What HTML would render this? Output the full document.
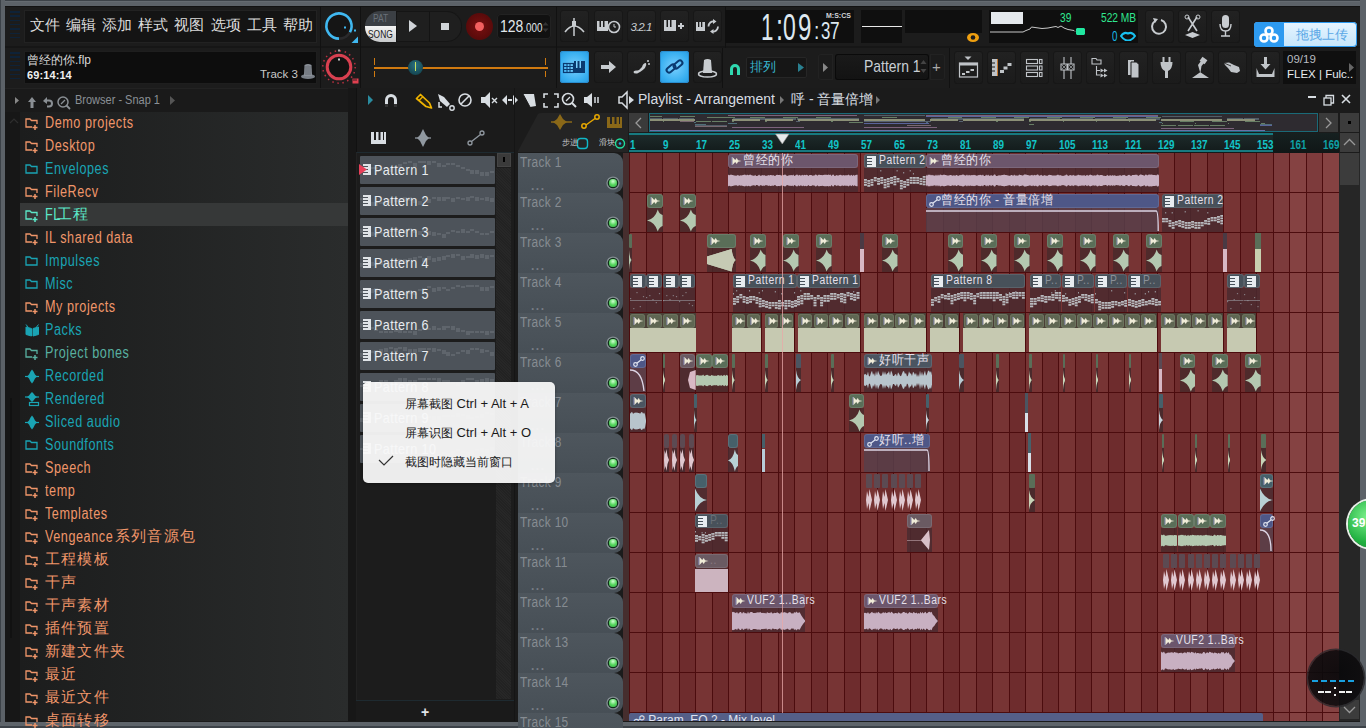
<!DOCTYPE html><html><head><meta charset="utf-8"><style>
*{box-sizing:border-box;margin:0;padding:0}
html,body{width:1366px;height:728px;overflow:hidden;background:#1b1b1b;font-family:'Liberation Sans',sans-serif;}
.ab{position:absolute}
.tx{position:absolute;white-space:nowrap;line-height:1}
.btn{position:absolute;background:linear-gradient(#232323,#1b1b1b);border-radius:3px;box-shadow:inset 0 0 0 1px #141414}
</style></head><body>

<div class="ab" style="left:5px;top:6px;width:1355px;height:82px;background:#1c1c1c"></div>
<div class="ab" style="left:0;top:0;width:1366px;height:6px;background:linear-gradient(#3c4248 0 1px,#646a70 1px 2px,#5c6268 2px)"></div>
<div class="ab" style="left:0;top:0;width:5px;height:728px;background:linear-gradient(90deg,#3c4248 0 1px,#5c6268 1px)"></div>
<div class="ab" style="left:1360px;top:0;width:6px;height:728px;background:#5c6268"></div>
<div class="ab" style="left:0;top:722px;width:1366px;height:6px;background:linear-gradient(#5e646a 0 4px,#3c4248 4px)"></div>
<div class="ab" style="left:5px;top:6px;width:1355px;height:1px;background:#121212"></div>
<div class="ab" style="left:5px;top:46px;width:1355px;height:2px;background:#161616"></div>
<div class="ab" style="left:10px;top:11.0px;width:10px;height:1.5px;background:#0e2238"></div>
<div class="ab" style="left:10px;top:15.3px;width:10px;height:1.5px;background:#0e2238"></div>
<div class="ab" style="left:10px;top:19.6px;width:10px;height:1.5px;background:#0e2238"></div>
<div class="ab" style="left:10px;top:23.9px;width:10px;height:1.5px;background:#0e2238"></div>
<div class="ab" style="left:10px;top:28.2px;width:10px;height:1.5px;background:#0e2238"></div>
<div class="ab" style="left:10px;top:32.5px;width:10px;height:1.5px;background:#0e2238"></div>
<div class="ab" style="left:10px;top:36.8px;width:10px;height:1.5px;background:#0e2238"></div>
<div class="ab" style="left:10px;top:52.0px;width:10px;height:1.5px;background:#0e2238"></div>
<div class="ab" style="left:10px;top:56.3px;width:10px;height:1.5px;background:#0e2238"></div>
<div class="ab" style="left:10px;top:60.6px;width:10px;height:1.5px;background:#0e2238"></div>
<div class="ab" style="left:10px;top:64.9px;width:10px;height:1.5px;background:#0e2238"></div>
<div class="ab" style="left:10px;top:69.2px;width:10px;height:1.5px;background:#0e2238"></div>
<div class="ab" style="left:10px;top:73.5px;width:10px;height:1.5px;background:#0e2238"></div>
<div class="ab" style="left:10px;top:77.8px;width:10px;height:1.5px;background:#0e2238"></div>
<div class="ab" style="left:24px;top:10px;width:293px;height:33px;background:#141414;border:1px solid #222"></div>
<div class="tx" style="left:30px;top:18px;font-size:14.5px;color:#dcdcdc">文件</div>
<div class="tx" style="left:66px;top:18px;font-size:14.5px;color:#dcdcdc">编辑</div>
<div class="tx" style="left:102px;top:18px;font-size:14.5px;color:#dcdcdc">添加</div>
<div class="tx" style="left:138px;top:18px;font-size:14.5px;color:#dcdcdc">样式</div>
<div class="tx" style="left:174px;top:18px;font-size:14.5px;color:#dcdcdc">视图</div>
<div class="tx" style="left:211px;top:18px;font-size:14.5px;color:#dcdcdc">选项</div>
<div class="tx" style="left:247px;top:18px;font-size:14.5px;color:#dcdcdc">工具</div>
<div class="tx" style="left:283px;top:18px;font-size:14.5px;color:#dcdcdc">帮助</div>
<div class="ab" style="left:24px;top:51px;width:293px;height:33px;background:#0d0d0d;border:1px solid #1e1e1e"></div>
<div class="tx" style="left:27px;top:54px;font-size:12px;color:#d8d8d8">曾经的你.flp</div>
<div class="tx" style="left:27px;top:70px;font-size:11px;font-weight:bold;color:#f0f0f0;letter-spacing:0.1px">69:14:14</div>
<div class="tx" style="left:260px;top:69px;font-size:11.5px;color:#c8c8c8">Track 3</div>
<svg class="ab" style="left:300px;top:63px" width="16" height="17"><ellipse cx="8" cy="13.5" rx="7" ry="2.5" fill="#7a8088"/><path d="M4 13 L4.5 2 Q8 0 11.5 2 L12 13Z" fill="#8a9098"/><path d="M6 3 V12 M8 2.5 V12 M10 3 V12" stroke="#5a6068" stroke-width="0.8"/></svg>
<div class="ab" style="left:320px;top:6px;width:1px;height:82px;background:#111"></div>
<div class="ab" style="left:360px;top:6px;width:1px;height:82px;background:#111"></div>
<div class="ab" style="left:556px;top:6px;width:1px;height:82px;background:#111"></div>
<svg class="ab" style="left:322px;top:9px" width="38" height="38" viewBox="0 0 38 38">
<circle cx="17" cy="17" r="12" fill="#151515"/>
<path d="M17 29.6 A12.6 12.6 0 1 1 27.9 23.3" fill="none" stroke="#40b8f0" stroke-width="2.6"/>
<path d="M27.9 23.3 A12.6 12.6 0 0 1 17 29.6" fill="none" stroke="#2a2a2c" stroke-width="2.6"/>
<rect x="22" y="17.5" width="2" height="2" fill="#40b8f0"/><rect x="32" y="20.5" width="2" height="2" fill="#40b8f0"/>
<path d="M36 27.5 L36 34 L29.5 34 Z" fill="#40b8f0"/></svg>
<svg class="ab" style="left:322px;top:49px" width="38" height="38" viewBox="0 0 38 38">
<circle cx="17" cy="18" r="16.2" fill="none" stroke="#b83040" stroke-width="1.5" stroke-dasharray="1.5 3.6"/>
<circle cx="17" cy="18" r="11.8" fill="#121212" stroke="#d84050" stroke-width="3"/>
<rect x="16" y="9.5" width="2" height="2" fill="#ccc"/><rect x="16" y="0.5" width="2" height="2" fill="#aaa"/>
<rect x="30.5" y="29.5" width="6" height="5" fill="#e04050"/><path d="M32 29.5 V32 M34 29.5 V32" stroke="#121212" stroke-width="0.8"/></svg>
<div class="ab" style="left:365px;top:11px;width:97px;height:31px;border-radius:15px;background:#1f1f1f;overflow:hidden;box-shadow:inset 0 0 0 1px #151515"><div class="ab" style="left:0;top:0;width:31px;height:15px;background:#3b3f44"></div><div class="ab" style="left:0;top:15px;width:31px;height:16px;background:linear-gradient(#f4f4f4,#c8cacc)"></div><div class="tx" style="left:8px;top:3px;font-size:10px;color:#6a7078;transform:scaleX(0.85);transform-origin:0 0">PAT</div><div class="tx" style="left:3px;top:18px;font-size:10.5px;color:#1a1a1a;transform:scaleX(0.8);transform-origin:0 0">SONG</div><div class="ab" style="left:31px;top:0;width:1px;height:31px;background:#141414"></div><div class="ab" style="left:64px;top:0;width:1px;height:31px;background:#141414"></div></div>
<svg class="ab" style="left:408px;top:19px" width="10" height="14"><path d="M1 1 L9 7 L1 13Z" fill="#d0d4d8"/></svg>
<div class="ab" style="left:441px;top:22.5px;width:7.5px;height:7.5px;background:#d0d4d8"></div>
<div class="ab" style="left:466px;top:13px;width:27px;height:27px;border-radius:50%;background:radial-gradient(#7a1010,#4a0808)"></div>
<div class="ab" style="left:475px;top:22px;width:9px;height:9px;border-radius:50%;background:#f26060"></div>
<div class="ab" style="left:497px;top:14px;width:54px;height:25px;border-radius:4px;background:#111;box-shadow:inset 0 0 0 1px #222"></div>
<div class="tx" style="left:500px;top:18px;font-size:17px;color:#e0e6ea;transform:scaleX(0.82);transform-origin:0 0">128<span style="font-size:12px">.000</span></div>
<svg class="ab" style="left:542px;top:21px" width="7" height="12"><path d="M0.5 4.5 L3.5 1 L6.5 4.5Z M0.5 7.5 L3.5 11 L6.5 7.5Z" fill="#333"/></svg>
<div class="ab" style="left:374px;top:67px;width:174px;height:2px;background:#d07a10"></div>
<div class="ab" style="left:374px;top:58px;width:1px;height:7px;background:#d07a10"></div><div class="ab" style="left:374px;top:71px;width:1px;height:6px;background:#d07a10"></div>
<div class="ab" style="left:545px;top:58px;width:1px;height:7px;background:#d07a10"></div><div class="ab" style="left:545px;top:71px;width:1px;height:6px;background:#d07a10"></div>
<div class="ab" style="left:408px;top:60px;width:15px;height:15px;border-radius:50%;background:radial-gradient(circle at 50% 35%,#2a7080,#0e3a44)"></div>
<div class="ab" style="left:415px;top:62px;width:1px;height:9px;background:#c8e060"></div>
<div class="ab" style="left:560px;top:10px;width:29px;height:32px;border-radius:3px;background:linear-gradient(#222,#1b1b1b);box-shadow:inset 0 0 0 1px #171717"><svg width="29" height="32"><path d="M5 22 Q14 10 24 22" fill="none" stroke="#c8ccd0" stroke-width="1.6"/><path d="M14 8 L14 26" stroke="#c8ccd0" stroke-width="1.5"/><rect x="12" y="11" width="4" height="5" fill="#c8ccd0"/></svg></div>
<div class="ab" style="left:594px;top:10px;width:29px;height:32px;border-radius:3px;background:linear-gradient(#222,#1b1b1b);box-shadow:inset 0 0 0 1px #171717"><svg width="29" height="32"><rect x="3" y="11" width="11" height="10" fill="#c8ccd0"/><rect x="5.5" y="11" width="1.5" height="6" fill="#1b1b1b"/><rect x="9" y="11" width="1.5" height="6" fill="#1b1b1b"/><circle cx="20" cy="17" r="5.5" fill="none" stroke="#c8ccd0" stroke-width="1.6"/><path d="M20 14 L20 17 L22 17" stroke="#c8ccd0" fill="none"/></svg></div>
<div class="ab" style="left:627px;top:10px;width:29px;height:32px;border-radius:3px;background:linear-gradient(#222,#1b1b1b);box-shadow:inset 0 0 0 1px #171717"><svg width="29" height="32"><text x="3.5" y="21" font-family="Liberation Sans" font-style="italic" font-size="11.5" fill="#c8ccd0" textLength="22">3.2.1</text></svg></div>
<div class="ab" style="left:660px;top:10px;width:29px;height:32px;border-radius:3px;background:linear-gradient(#222,#1b1b1b);box-shadow:inset 0 0 0 1px #171717"><svg width="29" height="32"><rect x="4" y="10" width="12" height="11" fill="#c8ccd0"/><rect x="6.5" y="10" width="1.5" height="7" fill="#1b1b1b"/><rect x="10" y="10" width="1.5" height="7" fill="#1b1b1b"/><path d="M18 16 H24 M21 13 V19" stroke="#c8ccd0" stroke-width="2"/></svg></div>
<div class="ab" style="left:693px;top:10px;width:29px;height:32px;border-radius:3px;background:linear-gradient(#222,#1b1b1b);box-shadow:inset 0 0 0 1px #171717"><svg width="29" height="32"><rect x="3" y="12" width="9" height="9" fill="#c8ccd0"/><rect x="5" y="12" width="1.3" height="5" fill="#1b1b1b"/><rect x="8" y="12" width="1.3" height="5" fill="#1b1b1b"/><path d="M21.5 11.5 A5 5 0 0 0 15.5 16.5" fill="none" stroke="#c8ccd0" stroke-width="1.8"/><path d="M19 21.5 A5 5 0 0 0 25 16.5" fill="none" stroke="#c8ccd0" stroke-width="1.8"/><path d="M20 9 L23.5 11.5 L20 14Z M20.5 19 L17 21.5 L20.5 24Z" fill="#c8ccd0"/></svg></div>
<div class="ab" style="left:560px;top:51px;width:29px;height:32px;border-radius:3px;background:radial-gradient(circle at 50% 50%,#7ad0ff,#36aef0 70%,#2a9ae0);box-shadow:inset 0 0 0 1px #2a8ed0"><svg width="29" height="32"><rect x="3.5" y="12.5" width="10" height="9" fill="none" stroke="#0a3a70" stroke-width="1.2"/><path d="M3.5 15.5H13.5M3.5 18.5H13.5M7 12.5V21.5M10 12.5V21.5" stroke="#0a3a70"/><rect x="14" y="10" width="11" height="12" fill="#0a3a70"/><rect x="16" y="10" width="1.5" height="7" fill="#7ad0ff"/><rect x="19.5" y="10" width="1.5" height="7" fill="#7ad0ff"/></svg></div>
<div class="ab" style="left:594px;top:51px;width:29px;height:32px;border-radius:3px;background:linear-gradient(#222,#1b1b1b);box-shadow:inset 0 0 0 1px #171717"><svg width="29" height="32"><path d="M7 14 H15 V10 L22 16 L15 22 V18 H7Z" fill="#c8ccd0"/></svg></div>
<div class="ab" style="left:627px;top:51px;width:29px;height:32px;border-radius:3px;background:linear-gradient(#222,#1b1b1b);box-shadow:inset 0 0 0 1px #171717"><svg width="29" height="32"><path d="M9 22 Q12 23 18 17 Q20 14 19 12 Q16 12 15 16 Q13 19 9 20Z" fill="#c8ccd0"/><circle cx="21" cy="10" r="1" fill="#c8ccd0"/><circle cx="22" cy="13" r="1" fill="#c8ccd0"/><ellipse cx="9" cy="21" rx="2.5" ry="1.5" fill="#c8ccd0"/></svg></div>
<div class="ab" style="left:660px;top:51px;width:29px;height:32px;border-radius:3px;background:radial-gradient(circle at 50% 50%,#7ad0ff,#36aef0 70%,#2a9ae0);box-shadow:inset 0 0 0 1px #2a8ed0"><svg width="29" height="32"><g fill="none" stroke="#0a3a70" stroke-width="2"><rect x="6" y="15" width="10" height="5" rx="2.5" transform="rotate(-40 11 17.5)"/><rect x="13" y="11" width="10" height="5" rx="2.5" transform="rotate(-40 18 13.5)"/></g></svg></div>
<div class="ab" style="left:693px;top:51px;width:29px;height:32px;border-radius:3px;background:linear-gradient(#222,#1b1b1b);box-shadow:inset 0 0 0 1px #171717"><svg width="29" height="32"><ellipse cx="14.5" cy="23" rx="9" ry="3" fill="none" stroke="#c8ccd0" stroke-width="1.5"/><path d="M10 22 L11 9 Q14.5 7 18 9 L19 22Z" fill="#c8ccd0"/></svg></div>
<div class="ab" style="left:725px;top:6px;width:1px;height:42px;background:#111"></div>
<div class="ab" style="left:725px;top:10px;width:129px;height:33px;background:#0f0f0f"></div>
<div class="tx" style="left:760.5px;top:9.5px;font-size:36px;color:#dde8f0;transform:scaleX(0.62);transform-origin:0 0">1</div>
<div class="tx" style="left:775.5px;top:9.5px;font-size:36px;color:#dde8f0;transform:scaleX(0.7);transform-origin:0 0">:</div>
<div class="tx" style="left:783px;top:9.5px;font-size:36px;color:#dde8f0;transform:scaleX(0.64);transform-origin:0 0">0</div>
<div class="tx" style="left:797.5px;top:9.5px;font-size:36px;color:#dde8f0;transform:scaleX(0.67);transform-origin:0 0">9</div>
<div class="tx" style="left:814px;top:18.5px;font-size:24px;color:#dde8f0;transform:scaleX(0.8);transform-origin:0 0">:</div>
<div class="tx" style="left:821px;top:18.5px;font-size:24px;color:#dde8f0;transform:scaleX(0.7);transform-origin:0 0">3</div>
<div class="tx" style="left:830px;top:18.5px;font-size:24px;color:#dde8f0;transform:scaleX(0.72);transform-origin:0 0">7</div>
<div class="tx" style="left:826px;top:12px;font-size:7px;font-weight:bold;color:#d0d4d8">M:S:CS</div>
<div class="ab" style="left:861px;top:10px;width:41px;height:33px;background:#0f0f0f"></div>
<div class="ab" style="left:862px;top:26px;width:40px;height:1px;background:#e8e8e8"></div>
<div class="ab" style="left:905px;top:10px;width:77px;height:23px;background:#0f0f0f"></div>
<svg class="ab" style="left:966px;top:32px" width="14" height="11"><ellipse cx="7" cy="5.5" rx="6" ry="4.5" fill="#f0a010"/><circle cx="7" cy="5.5" r="2.3" fill="#1c1c1c"/></svg>
<div class="ab" style="left:989px;top:10px;width:149px;height:33px;background:#0f0f0f"></div>
<div class="ab" style="left:991px;top:12px;width:32px;height:12px;background:#e4e8ec"></div>
<svg class="ab" style="left:990px;top:24px" width="90" height="16"><polyline points="0,8 33,8 36,6.5 40,5 41.5,3 45,3.5 52,4.5 58,4 63,3 66,2.5 68,3.5 71,2 74,4 78,5.5 84,6.5 85,7.5" fill="none" stroke="#c8c8c8" stroke-width="1"/></svg>
<div class="tx" style="left:1060px;top:12px;font-size:12px;color:#30e890;transform:scaleX(0.85);transform-origin:0 0">39</div>
<div class="tx" style="left:1101px;top:12px;font-size:12px;color:#30e890;transform:scaleX(0.85);transform-origin:0 0">522 MB</div>
<div class="ab" style="left:1077px;top:27.5px;width:7px;height:7px;background:#20e8a0;box-shadow:-1.5px 0 0 -0.5px #20e8a0,1.5px 0 0 -0.5px #20e8a0"></div>
<div class="tx" style="left:1111.5px;top:29px;font-size:14px;color:#18b8e8;transform:scaleX(0.7);transform-origin:0 0">0</div>
<svg class="ab" style="left:1120px;top:31px" width="16" height="10"><path d="M1 5 Q4 0.5 8 2.5 Q12 0.5 15 5 Q12 9.5 8 9.5 Q4 9.5 1 5Z" fill="none" stroke="#18c0f0" stroke-width="2"/></svg>
<div class="ab" style="left:1145px;top:10px;width:29px;height:33px;border-radius:3px;background:linear-gradient(#222,#1b1b1b);box-shadow:inset 0 0 0 1px #171717"><svg width="29" height="33"><path d="M10 11 A7 7 0 1 0 16 10" fill="none" stroke="#c8ccd0" stroke-width="2"/><path d="M8 8 L13 9 L10 13Z" fill="#c8ccd0"/></svg></div>
<div class="ab" style="left:1178px;top:10px;width:29px;height:33px;border-radius:3px;background:linear-gradient(#222,#1b1b1b);box-shadow:inset 0 0 0 1px #171717"><svg width="29" height="33"><path d="M10 7 L19 21 M19 7 L10 21" stroke="#c8ccd0" stroke-width="1.6"/><circle cx="9" cy="7" r="2" fill="none" stroke="#c8ccd0"/><circle cx="20" cy="7" r="2" fill="none" stroke="#c8ccd0"/><path d="M7 25 L14.5 22 L22 25 L14.5 28Z" fill="#c8ccd0"/></svg></div>
<div class="ab" style="left:1211px;top:10px;width:29px;height:33px;border-radius:3px;background:linear-gradient(#222,#1b1b1b);box-shadow:inset 0 0 0 1px #171717"><svg width="29" height="33"><rect x="11" y="5" width="7" height="13" rx="3.5" fill="#c8ccd0"/><path d="M9 14 Q9 21 14.5 21 Q20 21 20 14" fill="none" stroke="#c8ccd0" stroke-width="1.4"/><path d="M14.5 21 V26 M10 26 H19" stroke="#c8ccd0" stroke-width="1.4"/></svg></div>
<div class="ab" style="left:1254px;top:22px;width:103px;height:25px;border-radius:4px;background:linear-gradient(#e6f4ff,#c6e6fb);box-shadow:inset 0 0 0 1px #2d9af0;overflow:hidden"><div class="ab" style="left:0;top:0;width:30px;height:25px;background:#2d9af0"></div><svg class="ab" style="left:4px;top:3px" width="22" height="19"><g fill="none" stroke="#fff" stroke-width="2.6"><circle cx="11" cy="6" r="3.5"/><circle cx="6" cy="13" r="3.5"/><circle cx="16" cy="13" r="3.5"/></g></svg><div class="tx" style="left:42px;top:6px;font-size:13px;color:#5aa8e6">拖拽上传</div></div>
<div class="ab" style="left:722px;top:48px;width:1px;height:40px;background:#111"></div>
<svg class="ab" style="left:728px;top:62px" width="14" height="14"><path d="M2 13 V7 A5 5 0 0 1 12 7 V13 H9 V7 A2 2 0 0 0 5 7 V13Z" fill="#30d8b0"/></svg>
<div class="ab" style="left:746px;top:57px;width:61px;height:21px;background:#161616;box-shadow:inset 0 0 0 1px #262626;border-radius:2px"></div>
<div class="tx" style="left:750px;top:60px;font-size:13px;color:#38b8d0">排列</div>
<svg class="ab" style="left:798px;top:63px" width="6" height="9"><path d="M0 0 L6 4.5 L0 9Z" fill="#2a8090"/></svg>
<div class="ab" style="left:818px;top:54px;width:15px;height:26px;background:#1b1b1b;border-radius:3px 0 0 3px;box-shadow:inset 0 0 0 1px #222"></div>
<svg class="ab" style="left:823px;top:63px" width="6" height="9"><path d="M0 0 L5 4.5 L0 9Z" fill="#888"/></svg>
<div class="ab" style="left:835px;top:54px;width:94px;height:26px;background:linear-gradient(#1a1a1a,#131313);border-radius:3px;box-shadow:inset 0 0 0 1px #0a0a0a"></div>
<div class="tx" style="left:864px;top:58px;font-size:17px;color:#c8ced4;transform:scaleX(0.82);transform-origin:0 0">Pattern 1</div>
<svg class="ab" style="left:920px;top:58px" width="7" height="18"><path d="M0.5 6 L3.5 2 L6.5 6Z M0.5 11 L3.5 15 L6.5 11Z" fill="#444"/></svg>
<div class="ab" style="left:930px;top:54px;width:15px;height:26px;background:#1b1b1b;border-radius:0 3px 3px 0;box-shadow:inset 0 0 0 1px #222"></div>
<div class="tx" style="left:932px;top:59px;font-size:15px;color:#aaa">+</div>
<div class="ab" style="left:949px;top:48px;width:1px;height:40px;background:#111"></div>
<div class="ab" style="left:954px;top:51px;width:29px;height:33px;border-radius:3px;background:linear-gradient(#222,#1b1b1b);box-shadow:inset 0 0 0 1px #171717"><svg width="29" height="33"><path d="M10.5 5.5 H17.5 L14 9Z" fill="#c0c4c8"/><rect x="5.5" y="12" width="18" height="2.5" fill="#c0c4c8"/><rect x="5.5" y="12" width="18" height="14" fill="none" stroke="#c0c4c8" stroke-width="1.2"/><path d="M8 23 H11 M12 21 H15.5 M16.5 19 H20" stroke="#c0c4c8" stroke-width="1.8"/></svg></div>
<div class="ab" style="left:987px;top:51px;width:29px;height:33px;border-radius:3px;background:linear-gradient(#222,#1b1b1b);box-shadow:inset 0 0 0 1px #171717"><svg width="29" height="33"><rect x="5" y="8" width="5.5" height="17" fill="#c0c4c8"/><path d="M5 12 H8 M5 16 H8 M5 20 H8" stroke="#1b1b1b" stroke-width="1"/><rect x="10" y="8" width="1" height="17" fill="#c87a30"/><rect x="13" y="19" width="4" height="3" fill="#c0c4c8"/><rect x="16.5" y="15.5" width="4" height="3" fill="#c0c4c8"/><rect x="20.5" y="12" width="4" height="3" fill="#c0c4c8"/></svg></div>
<div class="ab" style="left:1020px;top:51px;width:29px;height:33px;border-radius:3px;background:linear-gradient(#222,#1b1b1b);box-shadow:inset 0 0 0 1px #171717"><svg width="29" height="33"><g fill="none" stroke="#c0c4c8" stroke-width="1.1"><rect x="6.5" y="8.5" width="11" height="4"/><rect x="6.5" y="15" width="11" height="4"/><rect x="6.5" y="21.5" width="11" height="4"/><rect x="19.5" y="8.5" width="2.5" height="4"/><rect x="19.5" y="15" width="2.5" height="4"/><rect x="19.5" y="21.5" width="2.5" height="4"/></g></svg></div>
<div class="ab" style="left:1053px;top:51px;width:29px;height:33px;border-radius:3px;background:linear-gradient(#222,#1b1b1b);box-shadow:inset 0 0 0 1px #171717"><svg width="29" height="33"><path d="M11 6 V13 M11 19 V28 M18 6 V13 M18 19 V28" stroke="#c0c4c8" stroke-width="1.1"/><path d="M8 13 H14 V19 H8Z M15 13 H21 V19 H15Z" fill="none" stroke="#c0c4c8" stroke-width="1.1"/><path d="M9 14 L13 18 M13 14 L9 18 M16 14 L20 18 M20 14 L16 18" stroke="#c0c4c8" stroke-width="0.6"/></svg></div>
<div class="ab" style="left:1086px;top:51px;width:29px;height:33px;border-radius:3px;background:linear-gradient(#222,#1b1b1b);box-shadow:inset 0 0 0 1px #171717"><svg width="29" height="33"><path d="M6 7.5 H10 L11 9 H15 V13 H6Z" fill="none" stroke="#c0c4c8" stroke-width="1.1"/><path d="M10.5 15 V24 H14 M10.5 19.5 H14" fill="none" stroke="#c0c4c8" stroke-width="1.1"/><path d="M14.5 17.5 L18 19.5 L14.5 21.5Z M14.5 22.5 L18 24.5 L14.5 26.5Z M18 17.5 L21.5 19.5 L18 21.5Z M18 22.5 L21.5 24.5 L18 26.5Z" fill="#c0c4c8"/></svg></div>
<div class="ab" style="left:1119px;top:51px;width:29px;height:33px;border-radius:3px;background:linear-gradient(#222,#1b1b1b);box-shadow:inset 0 0 0 1px #171717"><svg width="29" height="33"><path d="M9 9 H15 V24 H9Z" fill="#c0c4c8"/><path d="M12 11 H17.5 L20 13.5 V27 H12Z" fill="#c0c4c8" stroke="#1b1b1b" stroke-width="1"/></svg></div>
<div class="ab" style="left:1152px;top:51px;width:29px;height:33px;border-radius:3px;background:linear-gradient(#222,#1b1b1b);box-shadow:inset 0 0 0 1px #171717"><svg width="29" height="33"><path d="M11.5 6 V11 M17.5 6 V11" stroke="#c0c4c8" stroke-width="2"/><path d="M8.5 11 H20.5 Q20.5 18 16 20 V27 H13 V20 Q8.5 18 8.5 11Z" fill="#c0c4c8"/></svg></div>
<div class="ab" style="left:1185px;top:51px;width:29px;height:33px;border-radius:3px;background:linear-gradient(#222,#1b1b1b);box-shadow:inset 0 0 0 1px #171717"><svg width="29" height="33"><path d="M7 27 H24 L15 21 L13 14 L16 10 L19 12 L16.5 15 L15.5 21Z" fill="#c0c4c8"/><rect x="15.5" y="7" width="6" height="5" transform="rotate(35 18.5 9.5)" fill="#c0c4c8"/></svg></div>
<div class="ab" style="left:1218px;top:51px;width:29px;height:33px;border-radius:3px;background:linear-gradient(#222,#1b1b1b);box-shadow:inset 0 0 0 1px #171717"><svg width="29" height="33"><path d="M6 12 L11 11.5 L16 14 L21 16 L22 20 L19 22 L13 21 L10 17 L7 14Z" fill="#c0c4c8"/><path d="M6 12 L13 15" stroke="#1b1b1b" stroke-width="0.8"/></svg></div>
<div class="ab" style="left:1251px;top:51px;width:29px;height:33px;border-radius:3px;background:linear-gradient(#222,#1b1b1b);box-shadow:inset 0 0 0 1px #171717"><svg width="29" height="33"><path d="M13 6 H16 V13 H19.5 L14.5 18.5 L9.5 13 H13Z" fill="#c0c4c8"/><path d="M5.5 17 L8 23 H21 L23.5 17 V26 H5.5Z" fill="#c0c4c8"/></svg></div>
<div class="ab" style="left:1283px;top:51px;width:73px;height:33px;background:#0f0f0f"></div>
<div class="tx" style="left:1287px;top:54px;font-size:11.5px;color:#b8bcc0">09/19</div>
<div class="tx" style="left:1287px;top:69px;font-size:11.5px;color:#e8ecf0">FLEX | Fulc..</div>
<svg class="ab" style="left:1349px;top:63px" width="5" height="9"><path d="M0 0 L5 4.5 L0 9Z" fill="#666"/></svg>
<div class="ab" style="left:5px;top:88px;width:351px;height:633px;background:#171717"></div>
<div class="ab" style="left:5px;top:88px;width:343px;height:24px;background:#1a1a1a;border-top:1px solid #222"></div>
<div class="ab" style="left:20px;top:112px;width:328px;height:609px;background:linear-gradient(90deg,#1c1d1d,#2a2c2c)"></div>
<div class="ab" style="left:356px;top:88px;width:1px;height:633px;background:#111"></div>
<svg class="ab" style="left:13px;top:95px" width="60" height="16"><path d="M2 2 L6 5.5 L2 9Z" fill="#888"/><path d="M19 2 L23 7 H20.5 V13 H17.5 V7 H15Z" fill="#8a8f94"/><path d="M30 6 L34 2 V4.5 H36 A4 4 0 0 1 36 12.5 H34 V10.5 H36 A2 2 0 0 0 36 6.5 H34 V9Z" fill="#8a8f94"/><circle cx="50" cy="7" r="5" fill="none" stroke="#8a8f94" stroke-width="1.5"/><path d="M53.5 10.5 L57 14" stroke="#8a8f94" stroke-width="1.8"/><path d="M48 9 L52 5" stroke="#8a8f94" stroke-width="1.3"/></svg>
<div class="tx" style="left:75px;top:94px;font-size:12.5px;color:#8a9096;transform:scaleX(0.88);transform-origin:0 0">Browser - Snap 1</div>
<svg class="ab" style="left:170px;top:96px" width="5" height="9"><path d="M0 0 L5 4.5 L0 9Z" fill="#555"/></svg>
<svg class="ab" style="left:9px;top:118px" width="10" height="6"><path d="M1 5 L5 1 L9 5" fill="none" stroke="#2e2e2e" stroke-width="1.2"/></svg>
<div class="ab" style="left:20px;top:203px;width:328px;height:23px;background:#363838"></div>
<svg class="ab" style="left:25px;top:116px" width="15" height="15"><path d="M7 11 H1 V3 H5 L6.5 4.5 H12 V8" fill="none" stroke="#f0966a" stroke-width="1.3"/><path d="M10 9 V14 M7.5 11.5 H12.5" stroke="#f0966a" stroke-width="1.5"/></svg>
<div class="tx" style="left:45px;top:115px;font-size:16px;color:#f0966a;transform:scaleX(0.79);transform-origin:0 0;letter-spacing:0.7px">Demo projects</div>
<svg class="ab" style="left:25px;top:139px" width="15" height="15"><path d="M7 11 H1 V3 H5 L6.5 4.5 H12 V8" fill="none" stroke="#f0966a" stroke-width="1.3"/><path d="M10 9 V14 M7.5 11.5 H12.5" stroke="#f0966a" stroke-width="1.5"/></svg>
<div class="tx" style="left:45px;top:138px;font-size:16px;color:#f0966a;transform:scaleX(0.79);transform-origin:0 0;letter-spacing:0.7px">Desktop</div>
<svg class="ab" style="left:25px;top:162px" width="15" height="15"><path d="M1 3 H5 L6.5 4.5 H12 V11 H1Z" fill="none" stroke="#1aa4b4" stroke-width="1.3"/></svg>
<div class="tx" style="left:45px;top:161px;font-size:16px;color:#1aa4b4;transform:scaleX(0.79);transform-origin:0 0;letter-spacing:0.7px">Envelopes</div>
<svg class="ab" style="left:25px;top:185px" width="15" height="15"><path d="M7 11 H1 V3 H5 L6.5 4.5 H12 V8" fill="none" stroke="#f0966a" stroke-width="1.3"/><path d="M10 9 V14 M7.5 11.5 H12.5" stroke="#f0966a" stroke-width="1.5"/></svg>
<div class="tx" style="left:45px;top:184px;font-size:16px;color:#f0966a;transform:scaleX(0.79);transform-origin:0 0;letter-spacing:0.7px">FileRecv</div>
<svg class="ab" style="left:25px;top:208px" width="15" height="15"><path d="M7 11 H1 V3 H5 L6.5 4.5 H12 V8" fill="none" stroke="#5ce8c8" stroke-width="1.3"/><path d="M10 9 V14 M7.5 11.5 H12.5" stroke="#5ce8c8" stroke-width="1.5"/></svg>
<div class="tx" style="left:45px;top:207px;font-size:16px;color:#5ce8c8;transform:scaleX(0.79);transform-origin:0 0;letter-spacing:0.7px">FL</div>
<div class="tx" style="left:57px;top:206px;font-size:15px;color:#5ce8c8;letter-spacing:1.2px">工程</div>
<svg class="ab" style="left:25px;top:231px" width="15" height="15"><path d="M7 11 H1 V3 H5 L6.5 4.5 H12 V8" fill="none" stroke="#f0966a" stroke-width="1.3"/><path d="M10 9 V14 M7.5 11.5 H12.5" stroke="#f0966a" stroke-width="1.5"/></svg>
<div class="tx" style="left:45px;top:230px;font-size:16px;color:#f0966a;transform:scaleX(0.79);transform-origin:0 0;letter-spacing:0.7px">IL shared data</div>
<svg class="ab" style="left:25px;top:254px" width="15" height="15"><path d="M1 3 H5 L6.5 4.5 H12 V11 H1Z" fill="none" stroke="#1aa4b4" stroke-width="1.3"/></svg>
<div class="tx" style="left:45px;top:253px;font-size:16px;color:#1aa4b4;transform:scaleX(0.79);transform-origin:0 0;letter-spacing:0.7px">Impulses</div>
<svg class="ab" style="left:25px;top:277px" width="15" height="15"><path d="M1 3 H5 L6.5 4.5 H12 V11 H1Z" fill="none" stroke="#1aa4b4" stroke-width="1.3"/></svg>
<div class="tx" style="left:45px;top:276px;font-size:16px;color:#1aa4b4;transform:scaleX(0.79);transform-origin:0 0;letter-spacing:0.7px">Misc</div>
<svg class="ab" style="left:25px;top:300px" width="15" height="15"><path d="M7 11 H1 V3 H5 L6.5 4.5 H12 V8" fill="none" stroke="#f0966a" stroke-width="1.3"/><path d="M10 9 V14 M7.5 11.5 H12.5" stroke="#f0966a" stroke-width="1.5"/></svg>
<div class="tx" style="left:45px;top:299px;font-size:16px;color:#f0966a;transform:scaleX(0.79);transform-origin:0 0;letter-spacing:0.7px">My projects</div>
<svg class="ab" style="left:25px;top:323px" width="15" height="15"><path d="M1 4 L6.5 5.5 V13 L1 11.5Z M13.5 4 L8 5.5 V13 L13.5 11.5Z M1 1.5 L3 4 M13.5 1.5 L11.5 4" fill="#1aa4b4" stroke="#1aa4b4" stroke-width="1"/></svg>
<div class="tx" style="left:45px;top:322px;font-size:16px;color:#1aa4b4;transform:scaleX(0.79);transform-origin:0 0;letter-spacing:0.7px">Packs</div>
<svg class="ab" style="left:25px;top:346px" width="15" height="15"><path d="M7 11 H1 V3 H5 L6.5 4.5 H12 V8" fill="none" stroke="#58b0a0" stroke-width="1.3"/><path d="M10 9 V14 M7.5 11.5 H12.5" stroke="#58b0a0" stroke-width="1.5"/></svg>
<div class="tx" style="left:45px;top:345px;font-size:16px;color:#58b0a0;transform:scaleX(0.79);transform-origin:0 0;letter-spacing:0.7px">Project bones</div>
<svg class="ab" style="left:25px;top:369px" width="15" height="15"><path d="M0 7.5 H14" stroke="#1aa4b4" stroke-width="1.2"/><path d="M2 7.5 L4 5.5 L5.5 2.5 L7 0.5 L8.5 2.5 L10 5.5 L12 7.5 L10 9.5 L8.5 12.5 L7 14.5 L5.5 12.5 L4 9.5Z" fill="#1aa4b4"/></svg>
<div class="tx" style="left:45px;top:368px;font-size:16px;color:#1aa4b4;transform:scaleX(0.79);transform-origin:0 0;letter-spacing:0.7px">Recorded</div>
<svg class="ab" style="left:25px;top:392px" width="15" height="15"><path d="M0 5 H14" stroke="#1aa4b4" stroke-width="1.2"/><path d="M2 5 L4 3.5 L5.5 1.5 L7 0 L8.5 1.5 L10 3.5 L12 5 L10 6.5 L8.5 8.5 L7 10 L5.5 8.5 L4 6.5Z" fill="#1aa4b4"/><rect x="4.5" y="10.5" width="9" height="3" fill="none" stroke="#1aa4b4" stroke-width="1.2"/></svg>
<div class="tx" style="left:45px;top:391px;font-size:16px;color:#1aa4b4;transform:scaleX(0.79);transform-origin:0 0;letter-spacing:0.7px">Rendered</div>
<svg class="ab" style="left:25px;top:415px" width="15" height="15"><path d="M0 7.5 H14" stroke="#1aa4b4" stroke-width="1.2"/><path d="M2 7.5 L4 5.5 L5.5 2.5 L7 0.5 L8.5 2.5 L10 5.5 L12 7.5 L10 9.5 L8.5 12.5 L7 14.5 L5.5 12.5 L4 9.5Z" fill="#1aa4b4"/></svg>
<div class="tx" style="left:45px;top:414px;font-size:16px;color:#1aa4b4;transform:scaleX(0.79);transform-origin:0 0;letter-spacing:0.7px">Sliced audio</div>
<svg class="ab" style="left:25px;top:438px" width="15" height="15"><path d="M1 3 H5 L6.5 4.5 H12 V11 H1Z" fill="none" stroke="#1aa4b4" stroke-width="1.3"/></svg>
<div class="tx" style="left:45px;top:437px;font-size:16px;color:#1aa4b4;transform:scaleX(0.79);transform-origin:0 0;letter-spacing:0.7px">Soundfonts</div>
<svg class="ab" style="left:25px;top:461px" width="15" height="15"><path d="M7 11 H1 V3 H5 L6.5 4.5 H12 V8" fill="none" stroke="#f0966a" stroke-width="1.3"/><path d="M10 9 V14 M7.5 11.5 H12.5" stroke="#f0966a" stroke-width="1.5"/></svg>
<div class="tx" style="left:45px;top:460px;font-size:16px;color:#f0966a;transform:scaleX(0.79);transform-origin:0 0;letter-spacing:0.7px">Speech</div>
<svg class="ab" style="left:25px;top:484px" width="15" height="15"><path d="M7 11 H1 V3 H5 L6.5 4.5 H12 V8" fill="none" stroke="#f0966a" stroke-width="1.3"/><path d="M10 9 V14 M7.5 11.5 H12.5" stroke="#f0966a" stroke-width="1.5"/></svg>
<div class="tx" style="left:45px;top:483px;font-size:16px;color:#f0966a;transform:scaleX(0.79);transform-origin:0 0;letter-spacing:0.7px">temp</div>
<svg class="ab" style="left:25px;top:507px" width="15" height="15"><path d="M7 11 H1 V3 H5 L6.5 4.5 H12 V8" fill="none" stroke="#f0966a" stroke-width="1.3"/><path d="M10 9 V14 M7.5 11.5 H12.5" stroke="#f0966a" stroke-width="1.5"/></svg>
<div class="tx" style="left:45px;top:506px;font-size:16px;color:#f0966a;transform:scaleX(0.79);transform-origin:0 0;letter-spacing:0.7px">Templates</div>
<svg class="ab" style="left:25px;top:530px" width="15" height="15"><path d="M7 11 H1 V3 H5 L6.5 4.5 H12 V8" fill="none" stroke="#f0966a" stroke-width="1.3"/><path d="M10 9 V14 M7.5 11.5 H12.5" stroke="#f0966a" stroke-width="1.5"/></svg>
<div class="tx" style="left:45px;top:529px;font-size:16px;color:#f0966a;transform:scaleX(0.79);transform-origin:0 0;letter-spacing:0.7px">Vengeance </div>
<div class="tx" style="left:115px;top:528px;font-size:15px;color:#f0966a;letter-spacing:1.2px">系列音源包</div>
<svg class="ab" style="left:25px;top:553px" width="15" height="15"><path d="M7 11 H1 V3 H5 L6.5 4.5 H12 V8" fill="none" stroke="#f0966a" stroke-width="1.3"/><path d="M10 9 V14 M7.5 11.5 H12.5" stroke="#f0966a" stroke-width="1.5"/></svg>
<div class="tx" style="left:45px;top:551px;font-size:15px;color:#f0966a;letter-spacing:1.2px">工程模板</div>
<svg class="ab" style="left:25px;top:576px" width="15" height="15"><path d="M7 11 H1 V3 H5 L6.5 4.5 H12 V8" fill="none" stroke="#f0966a" stroke-width="1.3"/><path d="M10 9 V14 M7.5 11.5 H12.5" stroke="#f0966a" stroke-width="1.5"/></svg>
<div class="tx" style="left:45px;top:574px;font-size:15px;color:#f0966a;letter-spacing:1.2px">干声</div>
<svg class="ab" style="left:25px;top:599px" width="15" height="15"><path d="M7 11 H1 V3 H5 L6.5 4.5 H12 V8" fill="none" stroke="#f0966a" stroke-width="1.3"/><path d="M10 9 V14 M7.5 11.5 H12.5" stroke="#f0966a" stroke-width="1.5"/></svg>
<div class="tx" style="left:45px;top:597px;font-size:15px;color:#f0966a;letter-spacing:1.2px">干声素材</div>
<svg class="ab" style="left:25px;top:622px" width="15" height="15"><path d="M7 11 H1 V3 H5 L6.5 4.5 H12 V8" fill="none" stroke="#f0966a" stroke-width="1.3"/><path d="M10 9 V14 M7.5 11.5 H12.5" stroke="#f0966a" stroke-width="1.5"/></svg>
<div class="tx" style="left:45px;top:620px;font-size:15px;color:#f0966a;letter-spacing:1.2px">插件预置</div>
<svg class="ab" style="left:25px;top:645px" width="15" height="15"><path d="M7 11 H1 V3 H5 L6.5 4.5 H12 V8" fill="none" stroke="#f0966a" stroke-width="1.3"/><path d="M10 9 V14 M7.5 11.5 H12.5" stroke="#f0966a" stroke-width="1.5"/></svg>
<div class="tx" style="left:45px;top:643px;font-size:15px;color:#f0966a;letter-spacing:1.2px">新建文件夹</div>
<svg class="ab" style="left:25px;top:668px" width="15" height="15"><path d="M7 11 H1 V3 H5 L6.5 4.5 H12 V8" fill="none" stroke="#f0966a" stroke-width="1.3"/><path d="M10 9 V14 M7.5 11.5 H12.5" stroke="#f0966a" stroke-width="1.5"/></svg>
<div class="tx" style="left:45px;top:666px;font-size:15px;color:#f0966a;letter-spacing:1.2px">最近</div>
<svg class="ab" style="left:25px;top:691px" width="15" height="15"><path d="M7 11 H1 V3 H5 L6.5 4.5 H12 V8" fill="none" stroke="#f0966a" stroke-width="1.3"/><path d="M10 9 V14 M7.5 11.5 H12.5" stroke="#f0966a" stroke-width="1.5"/></svg>
<div class="tx" style="left:45px;top:689px;font-size:15px;color:#f0966a;letter-spacing:1.2px">最近文件</div>
<svg class="ab" style="left:25px;top:714px" width="15" height="15"><path d="M7 11 H1 V3 H5 L6.5 4.5 H12 V8" fill="none" stroke="#f0966a" stroke-width="1.3"/><path d="M10 9 V14 M7.5 11.5 H12.5" stroke="#f0966a" stroke-width="1.5"/></svg>
<div class="tx" style="left:45px;top:712px;font-size:15px;color:#f0966a;letter-spacing:1.2px">桌面转移</div>
<div class="ab" style="left:10px;top:398px;width:2px;height:240px;background:#111"></div>
<div class="ab" style="left:357px;top:88px;width:1003px;height:633px;background:#1b1b1b"></div>
<svg class="ab" style="left:360px;top:90px" width="280" height="22">
<path d="M8 5 L13 10 L8 15Z" fill="#2a8ca0"/>
<path d="M25 17 V10 A6 6 0 0 1 37 10 V17 H34 V10 A3 3 0 0 0 28 10 V17Z" fill="#d8dde2"/><rect x="25" y="14" width="3" height="3" fill="#333"/><rect x="34" y="14" width="3" height="3" fill="#333"/>
<path d="M56.5 8.5 L60.5 4.5 L69.5 13 L71.5 18 L66 16.5 Z" fill="#2a2410" stroke="#f0b400" stroke-width="1.7" stroke-linejoin="round"/><path d="M59 10.5 L63 6.5" stroke="#f0b400" stroke-width="1.2"/>
<path d="M78 4 L84 7 L90 14 L87 17 L80 11 Z" fill="#d8dde2"/><circle cx="92" cy="18" r="2.2" fill="none" stroke="#d8dde2" stroke-width="1.4"/><path d="M79 12 V17 H82" fill="none" stroke="#d8dde2" stroke-width="1.5"/>
<circle cx="105" cy="10" r="6" fill="none" stroke="#d8dde2" stroke-width="1.6"/><path d="M101 14 L109 6" stroke="#d8dde2" stroke-width="1.6"/>
<path d="M121 7 H125 L130 2 V18 L125 13 H121Z" fill="#d8dde2"/><path d="M132 8 L137 13 M137 8 L132 13" stroke="#d8dde2" stroke-width="1.4"/>
<path d="M142 10 L147 5 V15Z M158 10 L153 5 V15Z" fill="#d8dde2"/><path d="M148 10 H152" stroke="#d8dde2" stroke-width="2"/>
<path d="M163 4 L174 4 L176 16 L170 17Z" fill="#d8dde2"/><path d="M163 4 L170 17" stroke="#1b1b1b" stroke-width="1"/>
<path d="M184 8 V4 H188 M194 4 H198 V8 M198 13 V17 H194 M188 17 H184 V13" fill="none" stroke="#d8dde2" stroke-width="1.6"/>
<circle cx="208" cy="9" r="5.5" fill="none" stroke="#d8dde2" stroke-width="1.6"/><path d="M212 13 L216 17" stroke="#d8dde2" stroke-width="2"/><path d="M206 11 L210 7" stroke="#d8dde2" stroke-width="1.2"/>
<path d="M224 7 H227 L232 3 V17 L227 13 H224Z" fill="#d8dde2"/><path d="M235 7 V13 M238 7 V13" stroke="#d8dde2" stroke-width="1.5"/>
<path d="M259 7 H262 L267 2 V18 L262 13 H259Z" fill="none" stroke="#d8dde2" stroke-width="1.5"/><path d="M269 6 L274 10 L269 14Z" fill="#d8dde2"/>
</svg>
<div class="tx" style="left:638px;top:92px;font-size:14px;color:#d8dde2">Playlist - Arrangement</div>
<svg class="ab" style="left:780px;top:96px" width="5" height="8"><path d="M0 0 L4 4 L0 8Z" fill="#777"/></svg>
<div class="tx" style="left:791px;top:92px;font-size:14px;color:#d8dde2">呼 - 音量倍增</div>
<svg class="ab" style="left:876px;top:96px" width="5" height="8"><path d="M0 0 L4 4 L0 8Z" fill="#777"/></svg>
<svg class="ab" style="left:1305px;top:92px" width="50" height="16"><rect x="3" y="4" width="8" height="2" fill="#d8dde2"/><rect x="19" y="6" width="7" height="7" fill="none" stroke="#d8dde2" stroke-width="1.3"/><path d="M21 6 V3.5 H28.5 V11 H26" fill="none" stroke="#d8dde2" stroke-width="1.3"/><path d="M37 3 L45 11 M45 3 L37 11" stroke="#d8dde2" stroke-width="1.6"/></svg>
<svg class="ab" style="left:365px;top:128px" width="130" height="20">
<rect x="6" y="4" width="15" height="12" fill="#d8dde2"/><rect x="9" y="4" width="2" height="8" fill="#1b1b1b"/><rect x="13.5" y="4" width="2" height="8" fill="#1b1b1b"/><rect x="18" y="4" width="1" height="8" fill="#1b1b1b"/>
<path d="M52 10 L55 7 L58 1 L61 7 L64 10 L61 13 L58 19 L55 13Z" fill="#9098a0"/><path d="M50 10 H66" stroke="#9098a0" stroke-width="1.3"/>
<circle cx="105" cy="15" r="2" fill="none" stroke="#9098a0" stroke-width="1.3"/><circle cx="117" cy="5" r="2" fill="none" stroke="#9098a0" stroke-width="1.3"/><path d="M106.5 13.5 L115.5 6.5" stroke="#9098a0" stroke-width="1.3"/>
</svg>
<div class="ab" style="left:356px;top:152px;width:160px;height:548px;background:#1c1c1c;border-top:1px solid #1e2a30;border-left:1px solid #222"></div>
<div class="ab" style="left:496px;top:168px;width:15px;height:531px;background:repeating-linear-gradient(45deg,#222 0 1px,#272727 1px 2px)"></div>
<div class="ab" style="left:497px;top:153px;width:14px;height:14px;background:#3a3a3a;box-shadow:inset 0 0 0 1px #444"></div><div class="ab" style="left:503px;top:157px;width:2px;height:5px;background:#000"></div>
<div class="ab" style="left:360px;top:156px;width:135px;height:28px;background:#4d535a;border-radius:1px;overflow:hidden">
<div class="ab" style="left:0px;top:12px;width:4px;height:1.5px;background:#5f656c"></div>
<div class="ab" style="left:5px;top:13px;width:4px;height:1.5px;background:#5f656c"></div>
<div class="ab" style="left:10px;top:11px;width:4px;height:1.5px;background:#5f656c"></div>
<div class="ab" style="left:14px;top:11px;width:4px;height:1.5px;background:#5f656c"></div>
<div class="ab" style="left:19px;top:13px;width:4px;height:1.5px;background:#5f656c"></div>
<div class="ab" style="left:24px;top:11px;width:4px;height:1.5px;background:#5f656c"></div>
<div class="ab" style="left:29px;top:12px;width:4px;height:1.5px;background:#5f656c"></div>
<div class="ab" style="left:29px;top:14px;width:4px;height:1.5px;background:#5f656c"></div>
<div class="ab" style="left:34px;top:10px;width:4px;height:1.5px;background:#5f656c"></div>
<div class="ab" style="left:38px;top:8px;width:4px;height:1.5px;background:#5f656c"></div>
<div class="ab" style="left:38px;top:10px;width:4px;height:1.5px;background:#5f656c"></div>
<div class="ab" style="left:43px;top:6px;width:4px;height:1.5px;background:#5f656c"></div>
<div class="ab" style="left:48px;top:5px;width:4px;height:1.5px;background:#5f656c"></div>
<div class="ab" style="left:53px;top:7px;width:4px;height:1.5px;background:#5f656c"></div>
<div class="ab" style="left:53px;top:9px;width:4px;height:1.5px;background:#5f656c"></div>
<div class="ab" style="left:58px;top:5px;width:4px;height:1.5px;background:#5f656c"></div>
<div class="ab" style="left:62px;top:5px;width:4px;height:1.5px;background:#5f656c"></div>
<div class="ab" style="left:67px;top:5px;width:4px;height:1.5px;background:#5f656c"></div>
<div class="ab" style="left:67px;top:7px;width:4px;height:1.5px;background:#5f656c"></div>
<div class="ab" style="left:72px;top:5px;width:4px;height:1.5px;background:#5f656c"></div>
<div class="ab" style="left:77px;top:7px;width:4px;height:1.5px;background:#5f656c"></div>
<div class="ab" style="left:77px;top:9px;width:4px;height:1.5px;background:#5f656c"></div>
<div class="ab" style="left:82px;top:9px;width:4px;height:1.5px;background:#5f656c"></div>
<div class="ab" style="left:86px;top:7px;width:4px;height:1.5px;background:#5f656c"></div>
<div class="ab" style="left:91px;top:7px;width:4px;height:1.5px;background:#5f656c"></div>
<div class="ab" style="left:96px;top:9px;width:4px;height:1.5px;background:#5f656c"></div>
<div class="ab" style="left:101px;top:11px;width:4px;height:1.5px;background:#5f656c"></div>
<div class="ab" style="left:106px;top:13px;width:4px;height:1.5px;background:#5f656c"></div>
<div class="ab" style="left:110px;top:14px;width:4px;height:1.5px;background:#5f656c"></div>
<div class="ab" style="left:110px;top:16px;width:4px;height:1.5px;background:#5f656c"></div>
<div class="ab" style="left:115px;top:14px;width:4px;height:1.5px;background:#5f656c"></div>
<div class="ab" style="left:115px;top:16px;width:4px;height:1.5px;background:#5f656c"></div>
<div class="ab" style="left:120px;top:16px;width:4px;height:1.5px;background:#5f656c"></div>
<div class="ab" style="left:120px;top:18px;width:4px;height:1.5px;background:#5f656c"></div>
<div class="ab" style="left:125px;top:16px;width:4px;height:1.5px;background:#5f656c"></div>
<div class="ab" style="left:125px;top:18px;width:4px;height:1.5px;background:#5f656c"></div>
<div class="ab" style="left:130px;top:15px;width:4px;height:1.5px;background:#5f656c"></div>
</div>
<svg class="ab" style="left:363px;top:164px" width="9" height="12"><rect x="0" y="0" width="8" height="11" fill="#e0e4e8"/><path d="M0 2.5 H5 M0 5.5 H5 M0 8.5 H5" stroke="#4d535a" stroke-width="1"/></svg>
<div class="tx" style="left:374px;top:161.5px;font-size:15px;color:#e8ecf0;transform:scaleX(0.84);transform-origin:0 0;letter-spacing:0.5px">Pattern 1</div>
<div class="ab" style="left:360px;top:187px;width:135px;height:28px;background:#4d535a;border-radius:1px;overflow:hidden">
<div class="ab" style="left:0px;top:11px;width:4px;height:1.5px;background:#5f656c"></div>
<div class="ab" style="left:5px;top:13px;width:4px;height:1.5px;background:#5f656c"></div>
<div class="ab" style="left:5px;top:15px;width:4px;height:1.5px;background:#5f656c"></div>
<div class="ab" style="left:10px;top:15px;width:4px;height:1.5px;background:#5f656c"></div>
<div class="ab" style="left:10px;top:17px;width:4px;height:1.5px;background:#5f656c"></div>
<div class="ab" style="left:14px;top:15px;width:4px;height:1.5px;background:#5f656c"></div>
<div class="ab" style="left:14px;top:17px;width:4px;height:1.5px;background:#5f656c"></div>
<div class="ab" style="left:19px;top:15px;width:4px;height:1.5px;background:#5f656c"></div>
<div class="ab" style="left:24px;top:13px;width:4px;height:1.5px;background:#5f656c"></div>
<div class="ab" style="left:24px;top:15px;width:4px;height:1.5px;background:#5f656c"></div>
<div class="ab" style="left:29px;top:12px;width:4px;height:1.5px;background:#5f656c"></div>
<div class="ab" style="left:29px;top:14px;width:4px;height:1.5px;background:#5f656c"></div>
<div class="ab" style="left:34px;top:11px;width:4px;height:1.5px;background:#5f656c"></div>
<div class="ab" style="left:34px;top:13px;width:4px;height:1.5px;background:#5f656c"></div>
<div class="ab" style="left:38px;top:12px;width:4px;height:1.5px;background:#5f656c"></div>
<div class="ab" style="left:43px;top:10px;width:4px;height:1.5px;background:#5f656c"></div>
<div class="ab" style="left:43px;top:12px;width:4px;height:1.5px;background:#5f656c"></div>
<div class="ab" style="left:48px;top:10px;width:4px;height:1.5px;background:#5f656c"></div>
<div class="ab" style="left:48px;top:12px;width:4px;height:1.5px;background:#5f656c"></div>
<div class="ab" style="left:53px;top:12px;width:4px;height:1.5px;background:#5f656c"></div>
<div class="ab" style="left:53px;top:14px;width:4px;height:1.5px;background:#5f656c"></div>
<div class="ab" style="left:58px;top:14px;width:4px;height:1.5px;background:#5f656c"></div>
<div class="ab" style="left:58px;top:16px;width:4px;height:1.5px;background:#5f656c"></div>
<div class="ab" style="left:62px;top:12px;width:4px;height:1.5px;background:#5f656c"></div>
<div class="ab" style="left:67px;top:12px;width:4px;height:1.5px;background:#5f656c"></div>
<div class="ab" style="left:67px;top:14px;width:4px;height:1.5px;background:#5f656c"></div>
<div class="ab" style="left:72px;top:10px;width:4px;height:1.5px;background:#5f656c"></div>
<div class="ab" style="left:77px;top:10px;width:4px;height:1.5px;background:#5f656c"></div>
<div class="ab" style="left:77px;top:12px;width:4px;height:1.5px;background:#5f656c"></div>
<div class="ab" style="left:82px;top:10px;width:4px;height:1.5px;background:#5f656c"></div>
<div class="ab" style="left:82px;top:12px;width:4px;height:1.5px;background:#5f656c"></div>
<div class="ab" style="left:86px;top:10px;width:4px;height:1.5px;background:#5f656c"></div>
<div class="ab" style="left:91px;top:11px;width:4px;height:1.5px;background:#5f656c"></div>
<div class="ab" style="left:91px;top:13px;width:4px;height:1.5px;background:#5f656c"></div>
<div class="ab" style="left:96px;top:10px;width:4px;height:1.5px;background:#5f656c"></div>
<div class="ab" style="left:101px;top:11px;width:4px;height:1.5px;background:#5f656c"></div>
<div class="ab" style="left:106px;top:10px;width:4px;height:1.5px;background:#5f656c"></div>
<div class="ab" style="left:106px;top:12px;width:4px;height:1.5px;background:#5f656c"></div>
<div class="ab" style="left:110px;top:9px;width:4px;height:1.5px;background:#5f656c"></div>
<div class="ab" style="left:115px;top:10px;width:4px;height:1.5px;background:#5f656c"></div>
<div class="ab" style="left:115px;top:12px;width:4px;height:1.5px;background:#5f656c"></div>
<div class="ab" style="left:120px;top:11px;width:4px;height:1.5px;background:#5f656c"></div>
<div class="ab" style="left:125px;top:10px;width:4px;height:1.5px;background:#5f656c"></div>
<div class="ab" style="left:125px;top:12px;width:4px;height:1.5px;background:#5f656c"></div>
<div class="ab" style="left:130px;top:11px;width:4px;height:1.5px;background:#5f656c"></div>
<div class="ab" style="left:130px;top:13px;width:4px;height:1.5px;background:#5f656c"></div>
</div>
<svg class="ab" style="left:363px;top:195px" width="9" height="12"><rect x="0" y="0" width="8" height="11" fill="#e0e4e8"/><path d="M0 2.5 H5 M0 5.5 H5 M0 8.5 H5" stroke="#4d535a" stroke-width="1"/></svg>
<div class="tx" style="left:374px;top:192.5px;font-size:15px;color:#e8ecf0;transform:scaleX(0.84);transform-origin:0 0;letter-spacing:0.5px">Pattern 2</div>
<div class="ab" style="left:360px;top:218px;width:135px;height:28px;background:#4d535a;border-radius:1px;overflow:hidden">
<div class="ab" style="left:0px;top:11px;width:4px;height:1.5px;background:#5f656c"></div>
<div class="ab" style="left:0px;top:13px;width:4px;height:1.5px;background:#5f656c"></div>
<div class="ab" style="left:5px;top:13px;width:4px;height:1.5px;background:#5f656c"></div>
<div class="ab" style="left:5px;top:15px;width:4px;height:1.5px;background:#5f656c"></div>
<div class="ab" style="left:10px;top:14px;width:4px;height:1.5px;background:#5f656c"></div>
<div class="ab" style="left:10px;top:16px;width:4px;height:1.5px;background:#5f656c"></div>
<div class="ab" style="left:14px;top:15px;width:4px;height:1.5px;background:#5f656c"></div>
<div class="ab" style="left:19px;top:14px;width:4px;height:1.5px;background:#5f656c"></div>
<div class="ab" style="left:24px;top:13px;width:4px;height:1.5px;background:#5f656c"></div>
<div class="ab" style="left:29px;top:12px;width:4px;height:1.5px;background:#5f656c"></div>
<div class="ab" style="left:34px;top:10px;width:4px;height:1.5px;background:#5f656c"></div>
<div class="ab" style="left:34px;top:12px;width:4px;height:1.5px;background:#5f656c"></div>
<div class="ab" style="left:38px;top:12px;width:4px;height:1.5px;background:#5f656c"></div>
<div class="ab" style="left:43px;top:12px;width:4px;height:1.5px;background:#5f656c"></div>
<div class="ab" style="left:43px;top:14px;width:4px;height:1.5px;background:#5f656c"></div>
<div class="ab" style="left:48px;top:10px;width:4px;height:1.5px;background:#5f656c"></div>
<div class="ab" style="left:53px;top:11px;width:4px;height:1.5px;background:#5f656c"></div>
<div class="ab" style="left:53px;top:13px;width:4px;height:1.5px;background:#5f656c"></div>
<div class="ab" style="left:58px;top:13px;width:4px;height:1.5px;background:#5f656c"></div>
<div class="ab" style="left:58px;top:15px;width:4px;height:1.5px;background:#5f656c"></div>
<div class="ab" style="left:62px;top:12px;width:4px;height:1.5px;background:#5f656c"></div>
<div class="ab" style="left:67px;top:13px;width:4px;height:1.5px;background:#5f656c"></div>
<div class="ab" style="left:67px;top:15px;width:4px;height:1.5px;background:#5f656c"></div>
<div class="ab" style="left:72px;top:14px;width:4px;height:1.5px;background:#5f656c"></div>
<div class="ab" style="left:72px;top:16px;width:4px;height:1.5px;background:#5f656c"></div>
<div class="ab" style="left:77px;top:15px;width:4px;height:1.5px;background:#5f656c"></div>
<div class="ab" style="left:82px;top:16px;width:4px;height:1.5px;background:#5f656c"></div>
<div class="ab" style="left:82px;top:18px;width:4px;height:1.5px;background:#5f656c"></div>
<div class="ab" style="left:86px;top:14px;width:4px;height:1.5px;background:#5f656c"></div>
<div class="ab" style="left:91px;top:12px;width:4px;height:1.5px;background:#5f656c"></div>
<div class="ab" style="left:96px;top:13px;width:4px;height:1.5px;background:#5f656c"></div>
<div class="ab" style="left:101px;top:11px;width:4px;height:1.5px;background:#5f656c"></div>
<div class="ab" style="left:101px;top:13px;width:4px;height:1.5px;background:#5f656c"></div>
<div class="ab" style="left:106px;top:13px;width:4px;height:1.5px;background:#5f656c"></div>
<div class="ab" style="left:110px;top:11px;width:4px;height:1.5px;background:#5f656c"></div>
<div class="ab" style="left:115px;top:13px;width:4px;height:1.5px;background:#5f656c"></div>
<div class="ab" style="left:120px;top:15px;width:4px;height:1.5px;background:#5f656c"></div>
<div class="ab" style="left:125px;top:15px;width:4px;height:1.5px;background:#5f656c"></div>
<div class="ab" style="left:130px;top:13px;width:4px;height:1.5px;background:#5f656c"></div>
</div>
<svg class="ab" style="left:363px;top:226px" width="9" height="12"><rect x="0" y="0" width="8" height="11" fill="#e0e4e8"/><path d="M0 2.5 H5 M0 5.5 H5 M0 8.5 H5" stroke="#4d535a" stroke-width="1"/></svg>
<div class="tx" style="left:374px;top:223.5px;font-size:15px;color:#e8ecf0;transform:scaleX(0.84);transform-origin:0 0;letter-spacing:0.5px">Pattern 3</div>
<div class="ab" style="left:360px;top:249px;width:135px;height:28px;background:#4d535a;border-radius:1px;overflow:hidden">
<div class="ab" style="left:0px;top:14px;width:4px;height:1.5px;background:#5f656c"></div>
<div class="ab" style="left:0px;top:16px;width:4px;height:1.5px;background:#5f656c"></div>
<div class="ab" style="left:5px;top:13px;width:4px;height:1.5px;background:#5f656c"></div>
<div class="ab" style="left:5px;top:15px;width:4px;height:1.5px;background:#5f656c"></div>
<div class="ab" style="left:10px;top:13px;width:4px;height:1.5px;background:#5f656c"></div>
<div class="ab" style="left:10px;top:15px;width:4px;height:1.5px;background:#5f656c"></div>
<div class="ab" style="left:14px;top:14px;width:4px;height:1.5px;background:#5f656c"></div>
<div class="ab" style="left:19px;top:12px;width:4px;height:1.5px;background:#5f656c"></div>
<div class="ab" style="left:19px;top:14px;width:4px;height:1.5px;background:#5f656c"></div>
<div class="ab" style="left:24px;top:13px;width:4px;height:1.5px;background:#5f656c"></div>
<div class="ab" style="left:24px;top:15px;width:4px;height:1.5px;background:#5f656c"></div>
<div class="ab" style="left:29px;top:14px;width:4px;height:1.5px;background:#5f656c"></div>
<div class="ab" style="left:29px;top:16px;width:4px;height:1.5px;background:#5f656c"></div>
<div class="ab" style="left:34px;top:12px;width:4px;height:1.5px;background:#5f656c"></div>
<div class="ab" style="left:38px;top:10px;width:4px;height:1.5px;background:#5f656c"></div>
<div class="ab" style="left:38px;top:12px;width:4px;height:1.5px;background:#5f656c"></div>
<div class="ab" style="left:43px;top:10px;width:4px;height:1.5px;background:#5f656c"></div>
<div class="ab" style="left:43px;top:12px;width:4px;height:1.5px;background:#5f656c"></div>
<div class="ab" style="left:48px;top:9px;width:4px;height:1.5px;background:#5f656c"></div>
<div class="ab" style="left:53px;top:8px;width:4px;height:1.5px;background:#5f656c"></div>
<div class="ab" style="left:53px;top:10px;width:4px;height:1.5px;background:#5f656c"></div>
<div class="ab" style="left:58px;top:7px;width:4px;height:1.5px;background:#5f656c"></div>
<div class="ab" style="left:62px;top:9px;width:4px;height:1.5px;background:#5f656c"></div>
<div class="ab" style="left:62px;top:11px;width:4px;height:1.5px;background:#5f656c"></div>
<div class="ab" style="left:67px;top:7px;width:4px;height:1.5px;background:#5f656c"></div>
<div class="ab" style="left:67px;top:9px;width:4px;height:1.5px;background:#5f656c"></div>
<div class="ab" style="left:72px;top:9px;width:4px;height:1.5px;background:#5f656c"></div>
<div class="ab" style="left:72px;top:11px;width:4px;height:1.5px;background:#5f656c"></div>
<div class="ab" style="left:77px;top:8px;width:4px;height:1.5px;background:#5f656c"></div>
<div class="ab" style="left:77px;top:10px;width:4px;height:1.5px;background:#5f656c"></div>
<div class="ab" style="left:82px;top:7px;width:4px;height:1.5px;background:#5f656c"></div>
<div class="ab" style="left:82px;top:9px;width:4px;height:1.5px;background:#5f656c"></div>
<div class="ab" style="left:86px;top:6px;width:4px;height:1.5px;background:#5f656c"></div>
<div class="ab" style="left:91px;top:5px;width:4px;height:1.5px;background:#5f656c"></div>
<div class="ab" style="left:91px;top:7px;width:4px;height:1.5px;background:#5f656c"></div>
<div class="ab" style="left:96px;top:5px;width:4px;height:1.5px;background:#5f656c"></div>
<div class="ab" style="left:101px;top:7px;width:4px;height:1.5px;background:#5f656c"></div>
<div class="ab" style="left:101px;top:9px;width:4px;height:1.5px;background:#5f656c"></div>
<div class="ab" style="left:106px;top:7px;width:4px;height:1.5px;background:#5f656c"></div>
<div class="ab" style="left:110px;top:5px;width:4px;height:1.5px;background:#5f656c"></div>
<div class="ab" style="left:110px;top:7px;width:4px;height:1.5px;background:#5f656c"></div>
<div class="ab" style="left:115px;top:6px;width:4px;height:1.5px;background:#5f656c"></div>
<div class="ab" style="left:115px;top:8px;width:4px;height:1.5px;background:#5f656c"></div>
<div class="ab" style="left:120px;top:5px;width:4px;height:1.5px;background:#5f656c"></div>
<div class="ab" style="left:120px;top:7px;width:4px;height:1.5px;background:#5f656c"></div>
<div class="ab" style="left:125px;top:6px;width:4px;height:1.5px;background:#5f656c"></div>
<div class="ab" style="left:125px;top:8px;width:4px;height:1.5px;background:#5f656c"></div>
<div class="ab" style="left:130px;top:6px;width:4px;height:1.5px;background:#5f656c"></div>
</div>
<svg class="ab" style="left:363px;top:257px" width="9" height="12"><rect x="0" y="0" width="8" height="11" fill="#e0e4e8"/><path d="M0 2.5 H5 M0 5.5 H5 M0 8.5 H5" stroke="#4d535a" stroke-width="1"/></svg>
<div class="tx" style="left:374px;top:254.5px;font-size:15px;color:#e8ecf0;transform:scaleX(0.84);transform-origin:0 0;letter-spacing:0.5px">Pattern 4</div>
<div class="ab" style="left:360px;top:280px;width:135px;height:28px;background:#4d535a;border-radius:1px;overflow:hidden">
<div class="ab" style="left:0px;top:11px;width:4px;height:1.5px;background:#5f656c"></div>
<div class="ab" style="left:5px;top:10px;width:4px;height:1.5px;background:#5f656c"></div>
<div class="ab" style="left:5px;top:12px;width:4px;height:1.5px;background:#5f656c"></div>
<div class="ab" style="left:10px;top:9px;width:4px;height:1.5px;background:#5f656c"></div>
<div class="ab" style="left:10px;top:11px;width:4px;height:1.5px;background:#5f656c"></div>
<div class="ab" style="left:14px;top:8px;width:4px;height:1.5px;background:#5f656c"></div>
<div class="ab" style="left:14px;top:10px;width:4px;height:1.5px;background:#5f656c"></div>
<div class="ab" style="left:19px;top:10px;width:4px;height:1.5px;background:#5f656c"></div>
<div class="ab" style="left:24px;top:11px;width:4px;height:1.5px;background:#5f656c"></div>
<div class="ab" style="left:24px;top:13px;width:4px;height:1.5px;background:#5f656c"></div>
<div class="ab" style="left:29px;top:9px;width:4px;height:1.5px;background:#5f656c"></div>
<div class="ab" style="left:34px;top:10px;width:4px;height:1.5px;background:#5f656c"></div>
<div class="ab" style="left:38px;top:11px;width:4px;height:1.5px;background:#5f656c"></div>
<div class="ab" style="left:43px;top:12px;width:4px;height:1.5px;background:#5f656c"></div>
<div class="ab" style="left:43px;top:14px;width:4px;height:1.5px;background:#5f656c"></div>
<div class="ab" style="left:48px;top:10px;width:4px;height:1.5px;background:#5f656c"></div>
<div class="ab" style="left:48px;top:12px;width:4px;height:1.5px;background:#5f656c"></div>
<div class="ab" style="left:53px;top:11px;width:4px;height:1.5px;background:#5f656c"></div>
<div class="ab" style="left:53px;top:13px;width:4px;height:1.5px;background:#5f656c"></div>
<div class="ab" style="left:58px;top:9px;width:4px;height:1.5px;background:#5f656c"></div>
<div class="ab" style="left:62px;top:8px;width:4px;height:1.5px;background:#5f656c"></div>
<div class="ab" style="left:67px;top:6px;width:4px;height:1.5px;background:#5f656c"></div>
<div class="ab" style="left:72px;top:8px;width:4px;height:1.5px;background:#5f656c"></div>
<div class="ab" style="left:72px;top:10px;width:4px;height:1.5px;background:#5f656c"></div>
<div class="ab" style="left:77px;top:7px;width:4px;height:1.5px;background:#5f656c"></div>
<div class="ab" style="left:77px;top:9px;width:4px;height:1.5px;background:#5f656c"></div>
<div class="ab" style="left:82px;top:7px;width:4px;height:1.5px;background:#5f656c"></div>
<div class="ab" style="left:86px;top:9px;width:4px;height:1.5px;background:#5f656c"></div>
<div class="ab" style="left:91px;top:7px;width:4px;height:1.5px;background:#5f656c"></div>
<div class="ab" style="left:96px;top:5px;width:4px;height:1.5px;background:#5f656c"></div>
<div class="ab" style="left:101px;top:6px;width:4px;height:1.5px;background:#5f656c"></div>
<div class="ab" style="left:106px;top:5px;width:4px;height:1.5px;background:#5f656c"></div>
<div class="ab" style="left:110px;top:5px;width:4px;height:1.5px;background:#5f656c"></div>
<div class="ab" style="left:115px;top:5px;width:4px;height:1.5px;background:#5f656c"></div>
<div class="ab" style="left:120px;top:7px;width:4px;height:1.5px;background:#5f656c"></div>
<div class="ab" style="left:120px;top:9px;width:4px;height:1.5px;background:#5f656c"></div>
<div class="ab" style="left:125px;top:7px;width:4px;height:1.5px;background:#5f656c"></div>
<div class="ab" style="left:125px;top:9px;width:4px;height:1.5px;background:#5f656c"></div>
<div class="ab" style="left:130px;top:6px;width:4px;height:1.5px;background:#5f656c"></div>
</div>
<svg class="ab" style="left:363px;top:288px" width="9" height="12"><rect x="0" y="0" width="8" height="11" fill="#e0e4e8"/><path d="M0 2.5 H5 M0 5.5 H5 M0 8.5 H5" stroke="#4d535a" stroke-width="1"/></svg>
<div class="tx" style="left:374px;top:285.5px;font-size:15px;color:#e8ecf0;transform:scaleX(0.84);transform-origin:0 0;letter-spacing:0.5px">Pattern 5</div>
<div class="ab" style="left:360px;top:311px;width:135px;height:28px;background:#4d535a;border-radius:1px;overflow:hidden">
<div class="ab" style="left:0px;top:12px;width:4px;height:1.5px;background:#5f656c"></div>
<div class="ab" style="left:0px;top:14px;width:4px;height:1.5px;background:#5f656c"></div>
<div class="ab" style="left:5px;top:14px;width:4px;height:1.5px;background:#5f656c"></div>
<div class="ab" style="left:5px;top:16px;width:4px;height:1.5px;background:#5f656c"></div>
<div class="ab" style="left:10px;top:16px;width:4px;height:1.5px;background:#5f656c"></div>
<div class="ab" style="left:14px;top:18px;width:4px;height:1.5px;background:#5f656c"></div>
<div class="ab" style="left:19px;top:20px;width:4px;height:1.5px;background:#5f656c"></div>
<div class="ab" style="left:24px;top:20px;width:4px;height:1.5px;background:#5f656c"></div>
<div class="ab" style="left:29px;top:20px;width:4px;height:1.5px;background:#5f656c"></div>
<div class="ab" style="left:34px;top:19px;width:4px;height:1.5px;background:#5f656c"></div>
<div class="ab" style="left:38px;top:18px;width:4px;height:1.5px;background:#5f656c"></div>
<div class="ab" style="left:38px;top:20px;width:4px;height:1.5px;background:#5f656c"></div>
<div class="ab" style="left:43px;top:20px;width:4px;height:1.5px;background:#5f656c"></div>
<div class="ab" style="left:48px;top:20px;width:4px;height:1.5px;background:#5f656c"></div>
<div class="ab" style="left:53px;top:20px;width:4px;height:1.5px;background:#5f656c"></div>
<div class="ab" style="left:53px;top:22px;width:4px;height:1.5px;background:#5f656c"></div>
<div class="ab" style="left:58px;top:18px;width:4px;height:1.5px;background:#5f656c"></div>
<div class="ab" style="left:62px;top:17px;width:4px;height:1.5px;background:#5f656c"></div>
<div class="ab" style="left:67px;top:17px;width:4px;height:1.5px;background:#5f656c"></div>
<div class="ab" style="left:72px;top:15px;width:4px;height:1.5px;background:#5f656c"></div>
<div class="ab" style="left:72px;top:17px;width:4px;height:1.5px;background:#5f656c"></div>
<div class="ab" style="left:77px;top:17px;width:4px;height:1.5px;background:#5f656c"></div>
<div class="ab" style="left:82px;top:15px;width:4px;height:1.5px;background:#5f656c"></div>
<div class="ab" style="left:82px;top:17px;width:4px;height:1.5px;background:#5f656c"></div>
<div class="ab" style="left:86px;top:15px;width:4px;height:1.5px;background:#5f656c"></div>
<div class="ab" style="left:91px;top:15px;width:4px;height:1.5px;background:#5f656c"></div>
<div class="ab" style="left:91px;top:17px;width:4px;height:1.5px;background:#5f656c"></div>
<div class="ab" style="left:96px;top:17px;width:4px;height:1.5px;background:#5f656c"></div>
<div class="ab" style="left:96px;top:19px;width:4px;height:1.5px;background:#5f656c"></div>
<div class="ab" style="left:101px;top:19px;width:4px;height:1.5px;background:#5f656c"></div>
<div class="ab" style="left:106px;top:20px;width:4px;height:1.5px;background:#5f656c"></div>
<div class="ab" style="left:106px;top:22px;width:4px;height:1.5px;background:#5f656c"></div>
<div class="ab" style="left:110px;top:20px;width:4px;height:1.5px;background:#5f656c"></div>
<div class="ab" style="left:115px;top:20px;width:4px;height:1.5px;background:#5f656c"></div>
<div class="ab" style="left:120px;top:20px;width:4px;height:1.5px;background:#5f656c"></div>
<div class="ab" style="left:125px;top:20px;width:4px;height:1.5px;background:#5f656c"></div>
<div class="ab" style="left:125px;top:22px;width:4px;height:1.5px;background:#5f656c"></div>
<div class="ab" style="left:130px;top:20px;width:4px;height:1.5px;background:#5f656c"></div>
</div>
<svg class="ab" style="left:363px;top:319px" width="9" height="12"><rect x="0" y="0" width="8" height="11" fill="#e0e4e8"/><path d="M0 2.5 H5 M0 5.5 H5 M0 8.5 H5" stroke="#4d535a" stroke-width="1"/></svg>
<div class="tx" style="left:374px;top:316.5px;font-size:15px;color:#e8ecf0;transform:scaleX(0.84);transform-origin:0 0;letter-spacing:0.5px">Pattern 6</div>
<div class="ab" style="left:360px;top:342px;width:135px;height:28px;background:#4d535a;border-radius:1px;overflow:hidden">
<div class="ab" style="left:0px;top:11px;width:4px;height:1.5px;background:#5f656c"></div>
<div class="ab" style="left:0px;top:13px;width:4px;height:1.5px;background:#5f656c"></div>
<div class="ab" style="left:5px;top:9px;width:4px;height:1.5px;background:#5f656c"></div>
<div class="ab" style="left:10px;top:9px;width:4px;height:1.5px;background:#5f656c"></div>
<div class="ab" style="left:14px;top:8px;width:4px;height:1.5px;background:#5f656c"></div>
<div class="ab" style="left:14px;top:10px;width:4px;height:1.5px;background:#5f656c"></div>
<div class="ab" style="left:19px;top:7px;width:4px;height:1.5px;background:#5f656c"></div>
<div class="ab" style="left:19px;top:9px;width:4px;height:1.5px;background:#5f656c"></div>
<div class="ab" style="left:24px;top:6px;width:4px;height:1.5px;background:#5f656c"></div>
<div class="ab" style="left:24px;top:8px;width:4px;height:1.5px;background:#5f656c"></div>
<div class="ab" style="left:29px;top:5px;width:4px;height:1.5px;background:#5f656c"></div>
<div class="ab" style="left:34px;top:6px;width:4px;height:1.5px;background:#5f656c"></div>
<div class="ab" style="left:34px;top:8px;width:4px;height:1.5px;background:#5f656c"></div>
<div class="ab" style="left:38px;top:5px;width:4px;height:1.5px;background:#5f656c"></div>
<div class="ab" style="left:43px;top:5px;width:4px;height:1.5px;background:#5f656c"></div>
<div class="ab" style="left:43px;top:7px;width:4px;height:1.5px;background:#5f656c"></div>
<div class="ab" style="left:48px;top:7px;width:4px;height:1.5px;background:#5f656c"></div>
<div class="ab" style="left:48px;top:9px;width:4px;height:1.5px;background:#5f656c"></div>
<div class="ab" style="left:53px;top:7px;width:4px;height:1.5px;background:#5f656c"></div>
<div class="ab" style="left:53px;top:9px;width:4px;height:1.5px;background:#5f656c"></div>
<div class="ab" style="left:58px;top:6px;width:4px;height:1.5px;background:#5f656c"></div>
<div class="ab" style="left:58px;top:8px;width:4px;height:1.5px;background:#5f656c"></div>
<div class="ab" style="left:62px;top:6px;width:4px;height:1.5px;background:#5f656c"></div>
<div class="ab" style="left:67px;top:6px;width:4px;height:1.5px;background:#5f656c"></div>
<div class="ab" style="left:72px;top:6px;width:4px;height:1.5px;background:#5f656c"></div>
<div class="ab" style="left:72px;top:8px;width:4px;height:1.5px;background:#5f656c"></div>
<div class="ab" style="left:77px;top:7px;width:4px;height:1.5px;background:#5f656c"></div>
<div class="ab" style="left:82px;top:8px;width:4px;height:1.5px;background:#5f656c"></div>
<div class="ab" style="left:82px;top:10px;width:4px;height:1.5px;background:#5f656c"></div>
<div class="ab" style="left:86px;top:10px;width:4px;height:1.5px;background:#5f656c"></div>
<div class="ab" style="left:86px;top:12px;width:4px;height:1.5px;background:#5f656c"></div>
<div class="ab" style="left:91px;top:12px;width:4px;height:1.5px;background:#5f656c"></div>
<div class="ab" style="left:96px;top:10px;width:4px;height:1.5px;background:#5f656c"></div>
<div class="ab" style="left:101px;top:8px;width:4px;height:1.5px;background:#5f656c"></div>
<div class="ab" style="left:106px;top:8px;width:4px;height:1.5px;background:#5f656c"></div>
<div class="ab" style="left:106px;top:10px;width:4px;height:1.5px;background:#5f656c"></div>
<div class="ab" style="left:110px;top:6px;width:4px;height:1.5px;background:#5f656c"></div>
<div class="ab" style="left:115px;top:6px;width:4px;height:1.5px;background:#5f656c"></div>
<div class="ab" style="left:120px;top:7px;width:4px;height:1.5px;background:#5f656c"></div>
<div class="ab" style="left:120px;top:9px;width:4px;height:1.5px;background:#5f656c"></div>
<div class="ab" style="left:125px;top:8px;width:4px;height:1.5px;background:#5f656c"></div>
<div class="ab" style="left:130px;top:10px;width:4px;height:1.5px;background:#5f656c"></div>
<div class="ab" style="left:130px;top:12px;width:4px;height:1.5px;background:#5f656c"></div>
</div>
<svg class="ab" style="left:363px;top:350px" width="9" height="12"><rect x="0" y="0" width="8" height="11" fill="#e0e4e8"/><path d="M0 2.5 H5 M0 5.5 H5 M0 8.5 H5" stroke="#4d535a" stroke-width="1"/></svg>
<div class="tx" style="left:374px;top:347.5px;font-size:15px;color:#e8ecf0;transform:scaleX(0.84);transform-origin:0 0;letter-spacing:0.5px">Pattern 7</div>
<div class="ab" style="left:360px;top:373px;width:135px;height:28px;background:#4d535a;border-radius:1px;overflow:hidden">
<div class="ab" style="left:0px;top:12px;width:4px;height:1.5px;background:#5f656c"></div>
<div class="ab" style="left:5px;top:12px;width:4px;height:1.5px;background:#5f656c"></div>
<div class="ab" style="left:10px;top:11px;width:4px;height:1.5px;background:#5f656c"></div>
<div class="ab" style="left:10px;top:13px;width:4px;height:1.5px;background:#5f656c"></div>
<div class="ab" style="left:14px;top:9px;width:4px;height:1.5px;background:#5f656c"></div>
<div class="ab" style="left:14px;top:11px;width:4px;height:1.5px;background:#5f656c"></div>
<div class="ab" style="left:19px;top:7px;width:4px;height:1.5px;background:#5f656c"></div>
<div class="ab" style="left:24px;top:7px;width:4px;height:1.5px;background:#5f656c"></div>
<div class="ab" style="left:29px;top:9px;width:4px;height:1.5px;background:#5f656c"></div>
<div class="ab" style="left:34px;top:7px;width:4px;height:1.5px;background:#5f656c"></div>
<div class="ab" style="left:34px;top:9px;width:4px;height:1.5px;background:#5f656c"></div>
<div class="ab" style="left:38px;top:5px;width:4px;height:1.5px;background:#5f656c"></div>
<div class="ab" style="left:38px;top:7px;width:4px;height:1.5px;background:#5f656c"></div>
<div class="ab" style="left:43px;top:5px;width:4px;height:1.5px;background:#5f656c"></div>
<div class="ab" style="left:43px;top:7px;width:4px;height:1.5px;background:#5f656c"></div>
<div class="ab" style="left:48px;top:7px;width:4px;height:1.5px;background:#5f656c"></div>
<div class="ab" style="left:48px;top:9px;width:4px;height:1.5px;background:#5f656c"></div>
<div class="ab" style="left:53px;top:7px;width:4px;height:1.5px;background:#5f656c"></div>
<div class="ab" style="left:58px;top:5px;width:4px;height:1.5px;background:#5f656c"></div>
<div class="ab" style="left:62px;top:5px;width:4px;height:1.5px;background:#5f656c"></div>
<div class="ab" style="left:67px;top:5px;width:4px;height:1.5px;background:#5f656c"></div>
<div class="ab" style="left:72px;top:5px;width:4px;height:1.5px;background:#5f656c"></div>
<div class="ab" style="left:77px;top:5px;width:4px;height:1.5px;background:#5f656c"></div>
<div class="ab" style="left:77px;top:7px;width:4px;height:1.5px;background:#5f656c"></div>
<div class="ab" style="left:82px;top:7px;width:4px;height:1.5px;background:#5f656c"></div>
<div class="ab" style="left:86px;top:7px;width:4px;height:1.5px;background:#5f656c"></div>
<div class="ab" style="left:86px;top:9px;width:4px;height:1.5px;background:#5f656c"></div>
<div class="ab" style="left:91px;top:9px;width:4px;height:1.5px;background:#5f656c"></div>
<div class="ab" style="left:96px;top:9px;width:4px;height:1.5px;background:#5f656c"></div>
<div class="ab" style="left:96px;top:11px;width:4px;height:1.5px;background:#5f656c"></div>
<div class="ab" style="left:101px;top:7px;width:4px;height:1.5px;background:#5f656c"></div>
<div class="ab" style="left:101px;top:9px;width:4px;height:1.5px;background:#5f656c"></div>
<div class="ab" style="left:106px;top:5px;width:4px;height:1.5px;background:#5f656c"></div>
<div class="ab" style="left:110px;top:5px;width:4px;height:1.5px;background:#5f656c"></div>
<div class="ab" style="left:115px;top:7px;width:4px;height:1.5px;background:#5f656c"></div>
<div class="ab" style="left:115px;top:9px;width:4px;height:1.5px;background:#5f656c"></div>
<div class="ab" style="left:120px;top:6px;width:4px;height:1.5px;background:#5f656c"></div>
<div class="ab" style="left:120px;top:8px;width:4px;height:1.5px;background:#5f656c"></div>
<div class="ab" style="left:125px;top:5px;width:4px;height:1.5px;background:#5f656c"></div>
<div class="ab" style="left:125px;top:7px;width:4px;height:1.5px;background:#5f656c"></div>
<div class="ab" style="left:130px;top:6px;width:4px;height:1.5px;background:#5f656c"></div>
<div class="ab" style="left:130px;top:8px;width:4px;height:1.5px;background:#5f656c"></div>
</div>
<svg class="ab" style="left:363px;top:381px" width="9" height="12"><rect x="0" y="0" width="8" height="11" fill="#e0e4e8"/><path d="M0 2.5 H5 M0 5.5 H5 M0 8.5 H5" stroke="#4d535a" stroke-width="1"/></svg>
<div class="tx" style="left:374px;top:378.5px;font-size:15px;color:#e8ecf0;transform:scaleX(0.84);transform-origin:0 0;letter-spacing:0.5px">Pattern 8</div>
<div class="ab" style="left:360px;top:404px;width:135px;height:28px;background:#4d535a;border-radius:1px;overflow:hidden">
<div class="ab" style="left:0px;top:14px;width:4px;height:1.5px;background:#5f656c"></div>
<div class="ab" style="left:0px;top:16px;width:4px;height:1.5px;background:#5f656c"></div>
<div class="ab" style="left:5px;top:13px;width:4px;height:1.5px;background:#5f656c"></div>
<div class="ab" style="left:10px;top:13px;width:4px;height:1.5px;background:#5f656c"></div>
<div class="ab" style="left:14px;top:12px;width:4px;height:1.5px;background:#5f656c"></div>
<div class="ab" style="left:14px;top:14px;width:4px;height:1.5px;background:#5f656c"></div>
<div class="ab" style="left:19px;top:12px;width:4px;height:1.5px;background:#5f656c"></div>
<div class="ab" style="left:24px;top:11px;width:4px;height:1.5px;background:#5f656c"></div>
<div class="ab" style="left:29px;top:9px;width:4px;height:1.5px;background:#5f656c"></div>
<div class="ab" style="left:29px;top:11px;width:4px;height:1.5px;background:#5f656c"></div>
<div class="ab" style="left:34px;top:10px;width:4px;height:1.5px;background:#5f656c"></div>
<div class="ab" style="left:38px;top:8px;width:4px;height:1.5px;background:#5f656c"></div>
<div class="ab" style="left:43px;top:9px;width:4px;height:1.5px;background:#5f656c"></div>
<div class="ab" style="left:43px;top:11px;width:4px;height:1.5px;background:#5f656c"></div>
<div class="ab" style="left:48px;top:11px;width:4px;height:1.5px;background:#5f656c"></div>
<div class="ab" style="left:53px;top:11px;width:4px;height:1.5px;background:#5f656c"></div>
<div class="ab" style="left:58px;top:12px;width:4px;height:1.5px;background:#5f656c"></div>
<div class="ab" style="left:62px;top:11px;width:4px;height:1.5px;background:#5f656c"></div>
<div class="ab" style="left:62px;top:13px;width:4px;height:1.5px;background:#5f656c"></div>
<div class="ab" style="left:67px;top:12px;width:4px;height:1.5px;background:#5f656c"></div>
<div class="ab" style="left:72px;top:12px;width:4px;height:1.5px;background:#5f656c"></div>
<div class="ab" style="left:72px;top:14px;width:4px;height:1.5px;background:#5f656c"></div>
<div class="ab" style="left:77px;top:12px;width:4px;height:1.5px;background:#5f656c"></div>
<div class="ab" style="left:77px;top:14px;width:4px;height:1.5px;background:#5f656c"></div>
<div class="ab" style="left:82px;top:11px;width:4px;height:1.5px;background:#5f656c"></div>
<div class="ab" style="left:86px;top:11px;width:4px;height:1.5px;background:#5f656c"></div>
<div class="ab" style="left:91px;top:11px;width:4px;height:1.5px;background:#5f656c"></div>
<div class="ab" style="left:96px;top:9px;width:4px;height:1.5px;background:#5f656c"></div>
<div class="ab" style="left:96px;top:11px;width:4px;height:1.5px;background:#5f656c"></div>
<div class="ab" style="left:101px;top:10px;width:4px;height:1.5px;background:#5f656c"></div>
<div class="ab" style="left:106px;top:11px;width:4px;height:1.5px;background:#5f656c"></div>
<div class="ab" style="left:106px;top:13px;width:4px;height:1.5px;background:#5f656c"></div>
<div class="ab" style="left:110px;top:13px;width:4px;height:1.5px;background:#5f656c"></div>
<div class="ab" style="left:115px;top:12px;width:4px;height:1.5px;background:#5f656c"></div>
<div class="ab" style="left:120px;top:10px;width:4px;height:1.5px;background:#5f656c"></div>
<div class="ab" style="left:120px;top:12px;width:4px;height:1.5px;background:#5f656c"></div>
<div class="ab" style="left:125px;top:8px;width:4px;height:1.5px;background:#5f656c"></div>
<div class="ab" style="left:130px;top:9px;width:4px;height:1.5px;background:#5f656c"></div>
</div>
<svg class="ab" style="left:363px;top:412px" width="9" height="12"><rect x="0" y="0" width="8" height="11" fill="#e0e4e8"/><path d="M0 2.5 H5 M0 5.5 H5 M0 8.5 H5" stroke="#4d535a" stroke-width="1"/></svg>
<div class="tx" style="left:374px;top:409.5px;font-size:15px;color:#e8ecf0;transform:scaleX(0.84);transform-origin:0 0;letter-spacing:0.5px">Pattern 9</div>
<div class="ab" style="left:360px;top:435px;width:135px;height:28px;background:#4d535a;border-radius:1px;overflow:hidden">
<div class="ab" style="left:0px;top:13px;width:4px;height:1.5px;background:#5f656c"></div>
<div class="ab" style="left:5px;top:13px;width:4px;height:1.5px;background:#5f656c"></div>
<div class="ab" style="left:5px;top:15px;width:4px;height:1.5px;background:#5f656c"></div>
<div class="ab" style="left:10px;top:12px;width:4px;height:1.5px;background:#5f656c"></div>
<div class="ab" style="left:14px;top:14px;width:4px;height:1.5px;background:#5f656c"></div>
<div class="ab" style="left:19px;top:16px;width:4px;height:1.5px;background:#5f656c"></div>
<div class="ab" style="left:19px;top:18px;width:4px;height:1.5px;background:#5f656c"></div>
<div class="ab" style="left:24px;top:16px;width:4px;height:1.5px;background:#5f656c"></div>
<div class="ab" style="left:24px;top:18px;width:4px;height:1.5px;background:#5f656c"></div>
<div class="ab" style="left:29px;top:15px;width:4px;height:1.5px;background:#5f656c"></div>
<div class="ab" style="left:29px;top:17px;width:4px;height:1.5px;background:#5f656c"></div>
<div class="ab" style="left:34px;top:17px;width:4px;height:1.5px;background:#5f656c"></div>
<div class="ab" style="left:38px;top:15px;width:4px;height:1.5px;background:#5f656c"></div>
<div class="ab" style="left:38px;top:17px;width:4px;height:1.5px;background:#5f656c"></div>
<div class="ab" style="left:43px;top:17px;width:4px;height:1.5px;background:#5f656c"></div>
<div class="ab" style="left:48px;top:19px;width:4px;height:1.5px;background:#5f656c"></div>
<div class="ab" style="left:53px;top:20px;width:4px;height:1.5px;background:#5f656c"></div>
<div class="ab" style="left:58px;top:18px;width:4px;height:1.5px;background:#5f656c"></div>
<div class="ab" style="left:62px;top:16px;width:4px;height:1.5px;background:#5f656c"></div>
<div class="ab" style="left:67px;top:16px;width:4px;height:1.5px;background:#5f656c"></div>
<div class="ab" style="left:72px;top:17px;width:4px;height:1.5px;background:#5f656c"></div>
<div class="ab" style="left:72px;top:19px;width:4px;height:1.5px;background:#5f656c"></div>
<div class="ab" style="left:77px;top:19px;width:4px;height:1.5px;background:#5f656c"></div>
<div class="ab" style="left:82px;top:17px;width:4px;height:1.5px;background:#5f656c"></div>
<div class="ab" style="left:86px;top:18px;width:4px;height:1.5px;background:#5f656c"></div>
<div class="ab" style="left:86px;top:20px;width:4px;height:1.5px;background:#5f656c"></div>
<div class="ab" style="left:91px;top:16px;width:4px;height:1.5px;background:#5f656c"></div>
<div class="ab" style="left:91px;top:18px;width:4px;height:1.5px;background:#5f656c"></div>
<div class="ab" style="left:96px;top:14px;width:4px;height:1.5px;background:#5f656c"></div>
<div class="ab" style="left:101px;top:16px;width:4px;height:1.5px;background:#5f656c"></div>
<div class="ab" style="left:106px;top:17px;width:4px;height:1.5px;background:#5f656c"></div>
<div class="ab" style="left:106px;top:19px;width:4px;height:1.5px;background:#5f656c"></div>
<div class="ab" style="left:110px;top:15px;width:4px;height:1.5px;background:#5f656c"></div>
<div class="ab" style="left:110px;top:17px;width:4px;height:1.5px;background:#5f656c"></div>
<div class="ab" style="left:115px;top:14px;width:4px;height:1.5px;background:#5f656c"></div>
<div class="ab" style="left:120px;top:13px;width:4px;height:1.5px;background:#5f656c"></div>
<div class="ab" style="left:120px;top:15px;width:4px;height:1.5px;background:#5f656c"></div>
<div class="ab" style="left:125px;top:14px;width:4px;height:1.5px;background:#5f656c"></div>
<div class="ab" style="left:125px;top:16px;width:4px;height:1.5px;background:#5f656c"></div>
<div class="ab" style="left:130px;top:12px;width:4px;height:1.5px;background:#5f656c"></div>
<div class="ab" style="left:130px;top:14px;width:4px;height:1.5px;background:#5f656c"></div>
</div>
<svg class="ab" style="left:363px;top:443px" width="9" height="12"><rect x="0" y="0" width="8" height="11" fill="#e0e4e8"/><path d="M0 2.5 H5 M0 5.5 H5 M0 8.5 H5" stroke="#4d535a" stroke-width="1"/></svg>
<div class="tx" style="left:374px;top:440.5px;font-size:15px;color:#e8ecf0;transform:scaleX(0.84);transform-origin:0 0;letter-spacing:0.5px">Pattern 10</div>
<svg class="ab" style="left:358.5px;top:164px" width="9" height="12"><path d="M0 0 L8 5.5 L0 11Z" fill="#e8405a"/></svg>
<div class="ab" style="left:356px;top:700px;width:160px;height:21px;background:#1a1a1a;border-top:1px solid #1e2a30"></div>
<div class="tx" style="left:421px;top:705px;font-size:14px;font-weight:bold;color:#e0e4e8">+</div>
<div class="ab" style="left:514px;top:88px;width:1px;height:633px;background:#151515"></div>
<svg class="ab" style="left:515px;top:112px" width="114" height="41"><path d="M3 39 L23 2 Q24 1 27 1 L113 1 L113 40 L3 40Z" fill="#242424"/></svg>
<svg class="ab" style="left:550px;top:114px" width="76" height="38">
<path d="M3 8 L7 5 L10 0 L13 5 L17 8 L13 11 L10 16 L7 11Z" fill="#8a6818"/><path d="M1 8 H22" stroke="#8a6818" stroke-width="1.5"/>
<circle cx="34" cy="12" r="2.2" fill="none" stroke="#e8a800" stroke-width="1.5"/><circle cx="47" cy="3" r="2.2" fill="none" stroke="#e8a800" stroke-width="1.5"/><path d="M36 11 L45 4.5" stroke="#e8a800" stroke-width="1.5"/>
<rect x="57" y="3" width="15" height="11" fill="#8a6818"/><rect x="60" y="3" width="2" height="7" fill="#242424"/><rect x="64.5" y="3" width="2" height="7" fill="#242424"/><rect x="69" y="3" width="1" height="7" fill="#242424"/>
<rect x="27.5" y="24.5" width="10" height="10" rx="3" fill="none" stroke="#10b8c8" stroke-width="1.4"/>
<circle cx="70" cy="29.5" r="4.5" fill="none" stroke="#20e0a0" stroke-width="1.4"/><circle cx="70" cy="29.5" r="1.3" fill="#20a0e0"/>
</svg>
<div class="tx" style="left:562px;top:139px;font-size:8px;color:#c8ccd0">步进</div>
<div class="tx" style="left:599px;top:139px;font-size:8px;color:#c8ccd0">滑块</div>
<div class="ab" style="left:515px;top:152px;width:114px;height:569px;background:#1b1b1b"></div>
<div class="ab" style="left:518px;top:153px;width:105px;height:40px;border-radius:0 9px 9px 0;background:linear-gradient(#4e565d,#474f56)"></div>
<div class="tx" style="left:520px;top:154.5px;font-size:14px;color:#868c92;transform:scaleX(0.85);transform-origin:0 0;letter-spacing:0.4px">Track 1</div>
<div class="tx" style="left:531px;top:180px;font-size:12px;font-weight:bold;color:#767c84;letter-spacing:1.5px">...</div>
<div class="ab" style="left:609.4px;top:179.3px;width:8px;height:8px;border-radius:50%;background:radial-gradient(circle at 50% 30%,#d0ffd0,#58d860 50%,#30b040);box-shadow:0 0 0 1.3px #10301a,0 0 0 2.6px #848c92"></div>
<div class="ab" style="left:518px;top:193px;width:105px;height:40px;border-radius:0 9px 9px 0;background:linear-gradient(#4e565d,#474f56)"></div>
<div class="tx" style="left:520px;top:194.5px;font-size:14px;color:#868c92;transform:scaleX(0.85);transform-origin:0 0;letter-spacing:0.4px">Track 2</div>
<div class="tx" style="left:531px;top:220px;font-size:12px;font-weight:bold;color:#767c84;letter-spacing:1.5px">...</div>
<div class="ab" style="left:609.4px;top:219.3px;width:8px;height:8px;border-radius:50%;background:radial-gradient(circle at 50% 30%,#d0ffd0,#58d860 50%,#30b040);box-shadow:0 0 0 1.3px #10301a,0 0 0 2.6px #848c92"></div>
<div class="ab" style="left:518px;top:233px;width:105px;height:40px;border-radius:0 9px 9px 0;background:linear-gradient(#4e565d,#474f56)"></div>
<div class="tx" style="left:520px;top:234.5px;font-size:14px;color:#868c92;transform:scaleX(0.85);transform-origin:0 0;letter-spacing:0.4px">Track 3</div>
<div class="tx" style="left:531px;top:260px;font-size:12px;font-weight:bold;color:#767c84;letter-spacing:1.5px">...</div>
<div class="ab" style="left:609.4px;top:259.3px;width:8px;height:8px;border-radius:50%;background:radial-gradient(circle at 50% 30%,#d0ffd0,#58d860 50%,#30b040);box-shadow:0 0 0 1.3px #10301a,0 0 0 2.6px #848c92"></div>
<div class="ab" style="left:518px;top:273px;width:105px;height:40px;border-radius:0 9px 9px 0;background:linear-gradient(#4e565d,#474f56)"></div>
<div class="tx" style="left:520px;top:274.5px;font-size:14px;color:#868c92;transform:scaleX(0.85);transform-origin:0 0;letter-spacing:0.4px">Track 4</div>
<div class="tx" style="left:531px;top:300px;font-size:12px;font-weight:bold;color:#767c84;letter-spacing:1.5px">...</div>
<div class="ab" style="left:609.4px;top:299.3px;width:8px;height:8px;border-radius:50%;background:radial-gradient(circle at 50% 30%,#d0ffd0,#58d860 50%,#30b040);box-shadow:0 0 0 1.3px #10301a,0 0 0 2.6px #848c92"></div>
<div class="ab" style="left:518px;top:313px;width:105px;height:40px;border-radius:0 9px 9px 0;background:linear-gradient(#4e565d,#474f56)"></div>
<div class="tx" style="left:520px;top:314.5px;font-size:14px;color:#868c92;transform:scaleX(0.85);transform-origin:0 0;letter-spacing:0.4px">Track 5</div>
<div class="tx" style="left:531px;top:340px;font-size:12px;font-weight:bold;color:#767c84;letter-spacing:1.5px">...</div>
<div class="ab" style="left:609.4px;top:339.3px;width:8px;height:8px;border-radius:50%;background:radial-gradient(circle at 50% 30%,#d0ffd0,#58d860 50%,#30b040);box-shadow:0 0 0 1.3px #10301a,0 0 0 2.6px #848c92"></div>
<div class="ab" style="left:518px;top:353px;width:105px;height:40px;border-radius:0 9px 9px 0;background:linear-gradient(#4e565d,#474f56)"></div>
<div class="tx" style="left:520px;top:354.5px;font-size:14px;color:#868c92;transform:scaleX(0.85);transform-origin:0 0;letter-spacing:0.4px">Track 6</div>
<div class="tx" style="left:531px;top:380px;font-size:12px;font-weight:bold;color:#767c84;letter-spacing:1.5px">...</div>
<div class="ab" style="left:609.4px;top:379.3px;width:8px;height:8px;border-radius:50%;background:radial-gradient(circle at 50% 30%,#d0ffd0,#58d860 50%,#30b040);box-shadow:0 0 0 1.3px #10301a,0 0 0 2.6px #848c92"></div>
<div class="ab" style="left:518px;top:393px;width:105px;height:40px;border-radius:0 9px 9px 0;background:linear-gradient(#4e565d,#474f56)"></div>
<div class="tx" style="left:520px;top:394.5px;font-size:14px;color:#868c92;transform:scaleX(0.85);transform-origin:0 0;letter-spacing:0.4px">Track 7</div>
<div class="tx" style="left:531px;top:420px;font-size:12px;font-weight:bold;color:#767c84;letter-spacing:1.5px">...</div>
<div class="ab" style="left:609.4px;top:419.3px;width:8px;height:8px;border-radius:50%;background:radial-gradient(circle at 50% 30%,#d0ffd0,#58d860 50%,#30b040);box-shadow:0 0 0 1.3px #10301a,0 0 0 2.6px #848c92"></div>
<div class="ab" style="left:518px;top:433px;width:105px;height:40px;border-radius:0 9px 9px 0;background:linear-gradient(#4e565d,#474f56)"></div>
<div class="tx" style="left:520px;top:434.5px;font-size:14px;color:#868c92;transform:scaleX(0.85);transform-origin:0 0;letter-spacing:0.4px">Track 8</div>
<div class="tx" style="left:531px;top:460px;font-size:12px;font-weight:bold;color:#767c84;letter-spacing:1.5px">...</div>
<div class="ab" style="left:609.4px;top:459.3px;width:8px;height:8px;border-radius:50%;background:radial-gradient(circle at 50% 30%,#d0ffd0,#58d860 50%,#30b040);box-shadow:0 0 0 1.3px #10301a,0 0 0 2.6px #848c92"></div>
<div class="ab" style="left:518px;top:473px;width:105px;height:40px;border-radius:0 9px 9px 0;background:linear-gradient(#4e565d,#474f56)"></div>
<div class="tx" style="left:520px;top:474.5px;font-size:14px;color:#868c92;transform:scaleX(0.85);transform-origin:0 0;letter-spacing:0.4px">Track 9</div>
<div class="tx" style="left:531px;top:500px;font-size:12px;font-weight:bold;color:#767c84;letter-spacing:1.5px">...</div>
<div class="ab" style="left:609.4px;top:499.3px;width:8px;height:8px;border-radius:50%;background:radial-gradient(circle at 50% 30%,#d0ffd0,#58d860 50%,#30b040);box-shadow:0 0 0 1.3px #10301a,0 0 0 2.6px #848c92"></div>
<div class="ab" style="left:518px;top:513px;width:105px;height:40px;border-radius:0 9px 9px 0;background:linear-gradient(#4e565d,#474f56)"></div>
<div class="tx" style="left:520px;top:514.5px;font-size:14px;color:#868c92;transform:scaleX(0.85);transform-origin:0 0;letter-spacing:0.4px">Track 10</div>
<div class="tx" style="left:531px;top:540px;font-size:12px;font-weight:bold;color:#767c84;letter-spacing:1.5px">...</div>
<div class="ab" style="left:609.4px;top:539.3px;width:8px;height:8px;border-radius:50%;background:radial-gradient(circle at 50% 30%,#d0ffd0,#58d860 50%,#30b040);box-shadow:0 0 0 1.3px #10301a,0 0 0 2.6px #848c92"></div>
<div class="ab" style="left:518px;top:553px;width:105px;height:40px;border-radius:0 9px 9px 0;background:linear-gradient(#4e565d,#474f56)"></div>
<div class="tx" style="left:520px;top:554.5px;font-size:14px;color:#868c92;transform:scaleX(0.85);transform-origin:0 0;letter-spacing:0.4px">Track 11</div>
<div class="tx" style="left:531px;top:580px;font-size:12px;font-weight:bold;color:#767c84;letter-spacing:1.5px">...</div>
<div class="ab" style="left:609.4px;top:579.3px;width:8px;height:8px;border-radius:50%;background:radial-gradient(circle at 50% 30%,#d0ffd0,#58d860 50%,#30b040);box-shadow:0 0 0 1.3px #10301a,0 0 0 2.6px #848c92"></div>
<div class="ab" style="left:518px;top:593px;width:105px;height:40px;border-radius:0 9px 9px 0;background:linear-gradient(#4e565d,#474f56)"></div>
<div class="tx" style="left:520px;top:594.5px;font-size:14px;color:#868c92;transform:scaleX(0.85);transform-origin:0 0;letter-spacing:0.4px">Track 12</div>
<div class="tx" style="left:531px;top:620px;font-size:12px;font-weight:bold;color:#767c84;letter-spacing:1.5px">...</div>
<div class="ab" style="left:609.4px;top:619.3px;width:8px;height:8px;border-radius:50%;background:radial-gradient(circle at 50% 30%,#d0ffd0,#58d860 50%,#30b040);box-shadow:0 0 0 1.3px #10301a,0 0 0 2.6px #848c92"></div>
<div class="ab" style="left:518px;top:633px;width:105px;height:40px;border-radius:0 9px 9px 0;background:linear-gradient(#4e565d,#474f56)"></div>
<div class="tx" style="left:520px;top:634.5px;font-size:14px;color:#868c92;transform:scaleX(0.85);transform-origin:0 0;letter-spacing:0.4px">Track 13</div>
<div class="tx" style="left:531px;top:660px;font-size:12px;font-weight:bold;color:#767c84;letter-spacing:1.5px">...</div>
<div class="ab" style="left:609.4px;top:659.3px;width:8px;height:8px;border-radius:50%;background:radial-gradient(circle at 50% 30%,#d0ffd0,#58d860 50%,#30b040);box-shadow:0 0 0 1.3px #10301a,0 0 0 2.6px #848c92"></div>
<div class="ab" style="left:518px;top:673px;width:105px;height:40px;border-radius:0 9px 9px 0;background:linear-gradient(#4e565d,#474f56)"></div>
<div class="tx" style="left:520px;top:674.5px;font-size:14px;color:#868c92;transform:scaleX(0.85);transform-origin:0 0;letter-spacing:0.4px">Track 14</div>
<div class="tx" style="left:531px;top:700px;font-size:12px;font-weight:bold;color:#767c84;letter-spacing:1.5px">...</div>
<div class="ab" style="left:609.4px;top:699.3px;width:8px;height:8px;border-radius:50%;background:radial-gradient(circle at 50% 30%,#d0ffd0,#58d860 50%,#30b040);box-shadow:0 0 0 1.3px #10301a,0 0 0 2.6px #848c92"></div>
<div class="ab" style="left:518px;top:713px;width:105px;height:40px;border-radius:0 9px 9px 0;background:linear-gradient(#4e565d,#474f56)"></div>
<div class="tx" style="left:520px;top:714.5px;font-size:14px;color:#868c92;transform:scaleX(0.85);transform-origin:0 0;letter-spacing:0.4px">Track 15</div>
<div class="tx" style="left:531px;top:740px;font-size:12px;font-weight:bold;color:#767c84;letter-spacing:1.5px">...</div>
<div class="ab" style="left:609.4px;top:739.3px;width:8px;height:8px;border-radius:50%;background:radial-gradient(circle at 50% 30%,#d0ffd0,#58d860 50%,#30b040);box-shadow:0 0 0 1.3px #10301a,0 0 0 2.6px #848c92"></div>
<div class="ab" style="left:623px;top:153px;width:6px;height:568px;background:#462e2e"></div>
<div class="ab" style="left:629px;top:153px;width:710px;height:568px;background:#733232;overflow:hidden">
<div class="ab" style="left:0.9px;top:0;width:17.0px;height:568px;background:#773434"></div>
<div class="ab" style="left:17.4px;top:0;width:17.0px;height:568px;background:#6e2c2d"></div>
<div class="ab" style="left:33.9px;top:0;width:17.0px;height:568px;background:#773434"></div>
<div class="ab" style="left:50.4px;top:0;width:17.0px;height:568px;background:#6e2c2d"></div>
<div class="ab" style="left:66.9px;top:0;width:17.0px;height:568px;background:#773434"></div>
<div class="ab" style="left:83.4px;top:0;width:17.0px;height:568px;background:#6e2c2d"></div>
<div class="ab" style="left:99.9px;top:0;width:17.0px;height:568px;background:#773434"></div>
<div class="ab" style="left:116.4px;top:0;width:17.0px;height:568px;background:#6e2c2d"></div>
<div class="ab" style="left:132.9px;top:0;width:17.0px;height:568px;background:#773434"></div>
<div class="ab" style="left:149.4px;top:0;width:17.0px;height:568px;background:#6e2c2d"></div>
<div class="ab" style="left:165.9px;top:0;width:17.0px;height:568px;background:#773434"></div>
<div class="ab" style="left:182.4px;top:0;width:17.0px;height:568px;background:#6e2c2d"></div>
<div class="ab" style="left:198.9px;top:0;width:17.0px;height:568px;background:#773434"></div>
<div class="ab" style="left:215.4px;top:0;width:17.0px;height:568px;background:#6e2c2d"></div>
<div class="ab" style="left:231.9px;top:0;width:17.0px;height:568px;background:#773434"></div>
<div class="ab" style="left:248.4px;top:0;width:17.0px;height:568px;background:#6e2c2d"></div>
<div class="ab" style="left:264.9px;top:0;width:17.0px;height:568px;background:#773434"></div>
<div class="ab" style="left:281.4px;top:0;width:17.0px;height:568px;background:#6e2c2d"></div>
<div class="ab" style="left:297.9px;top:0;width:17.0px;height:568px;background:#773434"></div>
<div class="ab" style="left:314.4px;top:0;width:17.0px;height:568px;background:#6e2c2d"></div>
<div class="ab" style="left:330.9px;top:0;width:17.0px;height:568px;background:#773434"></div>
<div class="ab" style="left:347.4px;top:0;width:17.0px;height:568px;background:#6e2c2d"></div>
<div class="ab" style="left:363.9px;top:0;width:17.0px;height:568px;background:#773434"></div>
<div class="ab" style="left:380.4px;top:0;width:17.0px;height:568px;background:#6e2c2d"></div>
<div class="ab" style="left:396.9px;top:0;width:17.0px;height:568px;background:#773434"></div>
<div class="ab" style="left:413.4px;top:0;width:17.0px;height:568px;background:#6e2c2d"></div>
<div class="ab" style="left:429.9px;top:0;width:17.0px;height:568px;background:#773434"></div>
<div class="ab" style="left:446.4px;top:0;width:17.0px;height:568px;background:#6e2c2d"></div>
<div class="ab" style="left:462.9px;top:0;width:17.0px;height:568px;background:#773434"></div>
<div class="ab" style="left:479.4px;top:0;width:17.0px;height:568px;background:#6e2c2d"></div>
<div class="ab" style="left:495.9px;top:0;width:17.0px;height:568px;background:#773434"></div>
<div class="ab" style="left:512.4px;top:0;width:17.0px;height:568px;background:#6e2c2d"></div>
<div class="ab" style="left:528.9px;top:0;width:17.0px;height:568px;background:#773434"></div>
<div class="ab" style="left:545.4px;top:0;width:17.0px;height:568px;background:#6e2c2d"></div>
<div class="ab" style="left:561.9px;top:0;width:17.0px;height:568px;background:#773434"></div>
<div class="ab" style="left:578.4px;top:0;width:17.0px;height:568px;background:#6e2c2d"></div>
<div class="ab" style="left:594.9px;top:0;width:17.0px;height:568px;background:#773434"></div>
<div class="ab" style="left:611.4px;top:0;width:17.0px;height:568px;background:#6e2c2d"></div>
<div class="ab" style="left:627.9px;top:0;width:17.0px;height:568px;background:#773434"></div>
<div class="ab" style="left:644.4px;top:0;width:17.0px;height:568px;background:#7d3b3c"></div>
<div class="ab" style="left:660.9px;top:0;width:17.0px;height:568px;background:#854242"></div>
<div class="ab" style="left:677.4px;top:0;width:17.0px;height:568px;background:#7d3b3c"></div>
<div class="ab" style="left:693.9px;top:0;width:17.0px;height:568px;background:#854242"></div>
<div class="ab" style="left:0.1px;top:0;width:1.2px;height:568px;background:#4c0c0e"></div>
<div class="ab" style="left:16.6px;top:0;width:1.2px;height:568px;background:#4c0c0e"></div>
<div class="ab" style="left:33.1px;top:0;width:1.2px;height:568px;background:#4c0c0e"></div>
<div class="ab" style="left:49.6px;top:0;width:1.2px;height:568px;background:#4c0c0e"></div>
<div class="ab" style="left:66.1px;top:0;width:1.2px;height:568px;background:#4c0c0e"></div>
<div class="ab" style="left:82.6px;top:0;width:1.2px;height:568px;background:#4c0c0e"></div>
<div class="ab" style="left:99.1px;top:0;width:1.2px;height:568px;background:#4c0c0e"></div>
<div class="ab" style="left:115.6px;top:0;width:1.2px;height:568px;background:#4c0c0e"></div>
<div class="ab" style="left:132.1px;top:0;width:1.2px;height:568px;background:#4c0c0e"></div>
<div class="ab" style="left:148.6px;top:0;width:1.2px;height:568px;background:#4c0c0e"></div>
<div class="ab" style="left:165.1px;top:0;width:1.2px;height:568px;background:#4c0c0e"></div>
<div class="ab" style="left:181.6px;top:0;width:1.2px;height:568px;background:#4c0c0e"></div>
<div class="ab" style="left:198.1px;top:0;width:1.2px;height:568px;background:#4c0c0e"></div>
<div class="ab" style="left:214.6px;top:0;width:1.2px;height:568px;background:#4c0c0e"></div>
<div class="ab" style="left:231.1px;top:0;width:1.2px;height:568px;background:#4c0c0e"></div>
<div class="ab" style="left:247.6px;top:0;width:1.2px;height:568px;background:#4c0c0e"></div>
<div class="ab" style="left:264.1px;top:0;width:1.2px;height:568px;background:#4c0c0e"></div>
<div class="ab" style="left:280.6px;top:0;width:1.2px;height:568px;background:#4c0c0e"></div>
<div class="ab" style="left:297.1px;top:0;width:1.2px;height:568px;background:#4c0c0e"></div>
<div class="ab" style="left:313.6px;top:0;width:1.2px;height:568px;background:#4c0c0e"></div>
<div class="ab" style="left:330.1px;top:0;width:1.2px;height:568px;background:#4c0c0e"></div>
<div class="ab" style="left:346.6px;top:0;width:1.2px;height:568px;background:#4c0c0e"></div>
<div class="ab" style="left:363.1px;top:0;width:1.2px;height:568px;background:#4c0c0e"></div>
<div class="ab" style="left:379.6px;top:0;width:1.2px;height:568px;background:#4c0c0e"></div>
<div class="ab" style="left:396.1px;top:0;width:1.2px;height:568px;background:#4c0c0e"></div>
<div class="ab" style="left:412.6px;top:0;width:1.2px;height:568px;background:#4c0c0e"></div>
<div class="ab" style="left:429.1px;top:0;width:1.2px;height:568px;background:#4c0c0e"></div>
<div class="ab" style="left:445.6px;top:0;width:1.2px;height:568px;background:#4c0c0e"></div>
<div class="ab" style="left:462.1px;top:0;width:1.2px;height:568px;background:#4c0c0e"></div>
<div class="ab" style="left:478.6px;top:0;width:1.2px;height:568px;background:#4c0c0e"></div>
<div class="ab" style="left:495.1px;top:0;width:1.2px;height:568px;background:#4c0c0e"></div>
<div class="ab" style="left:511.6px;top:0;width:1.2px;height:568px;background:#4c0c0e"></div>
<div class="ab" style="left:528.1px;top:0;width:1.2px;height:568px;background:#4c0c0e"></div>
<div class="ab" style="left:544.6px;top:0;width:1.2px;height:568px;background:#4c0c0e"></div>
<div class="ab" style="left:561.1px;top:0;width:1.2px;height:568px;background:#4c0c0e"></div>
<div class="ab" style="left:577.6px;top:0;width:1.2px;height:568px;background:#4c0c0e"></div>
<div class="ab" style="left:594.1px;top:0;width:1.2px;height:568px;background:#4c0c0e"></div>
<div class="ab" style="left:610.6px;top:0;width:1.2px;height:568px;background:#4c0c0e"></div>
<div class="ab" style="left:627.1px;top:0;width:1.2px;height:568px;background:#4c0c0e"></div>
<div class="ab" style="left:643.6px;top:0;width:1.2px;height:568px;background:#4c0c0e"></div>
<div class="ab" style="left:660.1px;top:0;width:1.2px;height:568px;background:#4c0c0e"></div>
<div class="ab" style="left:676.6px;top:0;width:1.2px;height:568px;background:#4c0c0e"></div>
<div class="ab" style="left:693.1px;top:0;width:1.2px;height:568px;background:#4c0c0e"></div>
<div class="ab" style="left:0;top:-1px;width:710px;height:1.2px;background:#4c0c0e"></div>
<div class="ab" style="left:0;top:39px;width:710px;height:1.2px;background:#4c0c0e"></div>
<div class="ab" style="left:0;top:79px;width:710px;height:1.2px;background:#4c0c0e"></div>
<div class="ab" style="left:0;top:119px;width:710px;height:1.2px;background:#4c0c0e"></div>
<div class="ab" style="left:0;top:159px;width:710px;height:1.2px;background:#4c0c0e"></div>
<div class="ab" style="left:0;top:199px;width:710px;height:1.2px;background:#4c0c0e"></div>
<div class="ab" style="left:0;top:239px;width:710px;height:1.2px;background:#4c0c0e"></div>
<div class="ab" style="left:0;top:279px;width:710px;height:1.2px;background:#4c0c0e"></div>
<div class="ab" style="left:0;top:319px;width:710px;height:1.2px;background:#4c0c0e"></div>
<div class="ab" style="left:0;top:359px;width:710px;height:1.2px;background:#4c0c0e"></div>
<div class="ab" style="left:0;top:399px;width:710px;height:1.2px;background:#4c0c0e"></div>
<div class="ab" style="left:0;top:439px;width:710px;height:1.2px;background:#4c0c0e"></div>
<div class="ab" style="left:0;top:479px;width:710px;height:1.2px;background:#4c0c0e"></div>
<div class="ab" style="left:0;top:519px;width:710px;height:1.2px;background:#4c0c0e"></div>
<div class="ab" style="left:0;top:559px;width:710px;height:1.2px;background:#4c0c0e"></div>
</div>
<div class="ab" style="left:728.4px;top:153px;width:129.6px;height:39px;overflow:hidden"><div class="ab" style="left:0;top:15px;width:100%;height:24px;background:#4b2b31;opacity:0.85"></div><div class="ab" style="left:0;top:0.5px;width:100%;height:14.5px;background:#6c566c;border-radius:3px;box-shadow:inset 0 0 0 1px rgba(255,255,255,0.1)"></div></div>
<svg class="ab" style="left:728.4px;top:168px" width="129.6" height="24"><path d="M0.0 6.6 L1.0 7.3 L2.0 7.1 L3.0 6.6 L4.0 7.0 L5.0 7.0 L6.0 7.5 L7.0 7.5 L8.0 7.8 L9.0 7.5 L10.0 6.7 L11.1 7.9 L12.1 7.2 L13.1 7.6 L14.1 7.3 L15.1 7.0 L16.1 6.8 L17.1 6.6 L18.1 7.5 L19.1 6.6 L20.1 7.3 L21.1 6.9 L22.1 6.6 L23.1 6.9 L24.1 7.6 L25.1 7.4 L26.1 7.9 L27.1 6.7 L28.1 7.9 L29.1 8.0 L30.1 7.6 L31.1 6.6 L32.1 7.8 L33.2 7.8 L34.2 7.0 L35.2 7.6 L36.2 6.9 L37.2 7.8 L38.2 7.7 L39.2 7.7 L40.2 7.1 L41.2 7.5 L42.2 7.0 L43.2 7.0 L44.2 7.4 L45.2 7.1 L46.2 7.7 L47.2 7.9 L48.2 7.0 L49.2 6.7 L50.2 6.9 L51.2 7.1 L52.2 6.7 L53.2 7.8 L54.3 7.1 L55.3 7.3 L56.3 6.7 L57.3 6.5 L58.3 7.5 L59.3 7.9 L60.3 7.6 L61.3 7.3 L62.3 7.2 L63.3 7.1 L64.3 7.6 L65.3 6.5 L66.3 8.0 L67.3 7.6 L68.3 6.7 L69.3 6.6 L70.3 7.7 L71.3 6.7 L72.3 7.4 L73.3 7.5 L74.3 6.8 L75.3 7.4 L76.4 6.7 L77.4 7.3 L78.4 6.7 L79.4 7.1 L80.4 7.9 L81.4 6.9 L82.4 7.0 L83.4 7.0 L84.4 7.7 L85.4 7.4 L86.4 7.4 L87.4 6.6 L88.4 6.8 L89.4 7.7 L90.4 6.8 L91.4 6.7 L92.4 7.1 L93.4 6.9 L94.4 7.2 L95.4 7.1 L96.4 6.8 L97.5 6.7 L98.5 6.8 L99.5 7.1 L100.5 6.6 L101.5 6.9 L102.5 6.5 L103.5 7.9 L104.5 6.8 L105.5 6.5 L106.5 8.0 L107.5 7.7 L108.5 7.0 L109.5 7.6 L110.5 7.4 L111.5 7.1 L112.5 6.7 L113.5 7.2 L114.5 7.5 L115.5 6.9 L116.5 7.6 L117.5 7.3 L118.5 7.2 L119.6 7.2 L120.6 6.6 L121.6 7.6 L122.6 7.6 L123.6 6.7 L124.6 8.0 L125.6 6.7 L126.6 7.7 L127.6 7.0 L128.6 6.8 L129.6 6.8 L129.6 18.2 L128.6 18.2 L127.6 18.0 L126.6 17.3 L125.6 18.3 L124.6 17.0 L123.6 18.3 L122.6 17.4 L121.6 17.4 L120.6 18.4 L119.6 17.8 L118.5 17.8 L117.5 17.7 L116.5 17.4 L115.5 18.1 L114.5 17.5 L113.5 17.8 L112.5 18.3 L111.5 17.9 L110.5 17.6 L109.5 17.4 L108.5 18.0 L107.5 17.3 L106.5 17.0 L105.5 18.5 L104.5 18.2 L103.5 17.1 L102.5 18.5 L101.5 18.1 L100.5 18.4 L99.5 17.9 L98.5 18.2 L97.5 18.3 L96.4 18.2 L95.4 17.9 L94.4 17.8 L93.4 18.1 L92.4 17.9 L91.4 18.3 L90.4 18.2 L89.4 17.3 L88.4 18.2 L87.4 18.4 L86.4 17.6 L85.4 17.6 L84.4 17.3 L83.4 18.0 L82.4 18.0 L81.4 18.1 L80.4 17.1 L79.4 17.9 L78.4 18.3 L77.4 17.7 L76.4 18.3 L75.3 17.6 L74.3 18.2 L73.3 17.5 L72.3 17.6 L71.3 18.3 L70.3 17.3 L69.3 18.4 L68.3 18.3 L67.3 17.4 L66.3 17.0 L65.3 18.5 L64.3 17.4 L63.3 17.9 L62.3 17.8 L61.3 17.7 L60.3 17.4 L59.3 17.1 L58.3 17.5 L57.3 18.5 L56.3 18.3 L55.3 17.7 L54.3 17.9 L53.2 17.2 L52.2 18.3 L51.2 17.9 L50.2 18.1 L49.2 18.3 L48.2 18.0 L47.2 17.1 L46.2 17.3 L45.2 17.9 L44.2 17.6 L43.2 18.0 L42.2 18.0 L41.2 17.5 L40.2 17.9 L39.2 17.3 L38.2 17.3 L37.2 17.2 L36.2 18.1 L35.2 17.4 L34.2 18.0 L33.2 17.2 L32.1 17.2 L31.1 18.4 L30.1 17.4 L29.1 17.0 L28.1 17.1 L27.1 18.3 L26.1 17.1 L25.1 17.6 L24.1 17.4 L23.1 18.1 L22.1 18.4 L21.1 18.1 L20.1 17.7 L19.1 18.4 L18.1 17.5 L17.1 18.4 L16.1 18.2 L15.1 18.0 L14.1 17.7 L13.1 17.4 L12.1 17.8 L11.1 17.1 L10.0 18.3 L9.0 17.5 L8.0 17.2 L7.0 17.5 L6.0 17.5 L5.0 18.0 L4.0 18.0 L3.0 18.4 L2.0 17.9 L1.0 17.7 L0.0 18.4Z" fill="#c8b0c2"/></svg>
<svg class="ab" style="left:731.4px;top:156px" width="12" height="10"><rect x="0.5" y="1" width="1" height="8" fill="#8a8cc0"/><path d="M1.5 1 L4.2 4 L5.8 2 L7 4.2 L10.5 5 L7 5.8 L5.8 8 L4.2 6 L1.5 9Z" fill="#f0ecd8"/></svg>
<div class="tx" style="left:743.4px;top:152.5px;font-size:13px;color:#e6e0ea;transform:scaleX(0.92);transform-origin:0 0;letter-spacing:0.6px">曾经的你</div>
<div class="ab" style="left:863.5px;top:153px;width:62.0px;height:39px;overflow:hidden"><div class="ab" style="left:0;top:15px;width:100%;height:24px;background:#4a2a2f;opacity:0.85"></div><div class="ab" style="left:0;top:0.5px;width:100%;height:14.5px;background:#48515a;border-radius:3px;box-shadow:inset 0 0 0 1px rgba(255,255,255,0.1)"></div></div>
<svg class="ab" style="left:863.5px;top:168px" width="62.0" height="24"><rect x="0.0" y="11.0" width="2.9" height="1.8" fill="#b8babe"/><rect x="0.0" y="13.5" width="2.9" height="1.8" fill="#b8babe"/><rect x="0.0" y="16.0" width="2.9" height="1.8" fill="#b8babe"/><rect x="3.3" y="12.0" width="2.9" height="1.8" fill="#b8babe"/><rect x="3.3" y="14.5" width="2.9" height="1.8" fill="#b8babe"/><rect x="3.3" y="17.0" width="2.9" height="1.8" fill="#b8babe"/><rect x="6.5" y="11.0" width="2.9" height="1.8" fill="#b8babe"/><rect x="6.5" y="13.5" width="2.9" height="1.8" fill="#b8babe"/><rect x="6.5" y="16.0" width="2.9" height="1.8" fill="#b8babe"/><rect x="9.8" y="9.0" width="2.9" height="1.8" fill="#b8babe"/><rect x="9.8" y="11.5" width="2.9" height="1.8" fill="#b8babe"/><rect x="13.1" y="10.0" width="2.9" height="1.8" fill="#b8babe"/><rect x="13.1" y="12.5" width="2.9" height="1.8" fill="#b8babe"/><rect x="13.1" y="15.0" width="2.9" height="1.8" fill="#b8babe"/><rect x="16.3" y="9.0" width="2.9" height="1.8" fill="#b8babe"/><rect x="16.3" y="11.5" width="2.9" height="1.8" fill="#b8babe"/><rect x="16.3" y="14.0" width="2.9" height="1.8" fill="#b8babe"/><rect x="16.3" y="2" width="1" height="1.5" fill="#9a9aa0"/><rect x="19.6" y="11.0" width="2.9" height="1.8" fill="#b8babe"/><rect x="19.6" y="13.5" width="2.9" height="1.8" fill="#b8babe"/><rect x="19.6" y="16.0" width="2.9" height="1.8" fill="#b8babe"/><rect x="19.6" y="18.5" width="2.9" height="1.8" fill="#b8babe"/><rect x="22.8" y="10.0" width="2.9" height="1.8" fill="#b8babe"/><rect x="22.8" y="12.5" width="2.9" height="1.8" fill="#b8babe"/><rect x="22.8" y="15.0" width="2.9" height="1.8" fill="#b8babe"/><rect x="22.8" y="17.5" width="2.9" height="1.8" fill="#b8babe"/><rect x="26.1" y="9.0" width="2.9" height="1.8" fill="#b8babe"/><rect x="26.1" y="11.5" width="2.9" height="1.8" fill="#b8babe"/><rect x="26.1" y="14.0" width="2.9" height="1.8" fill="#b8babe"/><rect x="29.4" y="8.0" width="2.9" height="1.8" fill="#b8babe"/><rect x="29.4" y="10.5" width="2.9" height="1.8" fill="#b8babe"/><rect x="29.4" y="13.0" width="2.9" height="1.8" fill="#b8babe"/><rect x="29.4" y="15.5" width="2.9" height="1.8" fill="#b8babe"/><rect x="32.6" y="10.0" width="2.9" height="1.8" fill="#b8babe"/><rect x="32.6" y="12.5" width="2.9" height="1.8" fill="#b8babe"/><rect x="32.6" y="2" width="1" height="1.5" fill="#9a9aa0"/><rect x="35.9" y="12.0" width="2.9" height="1.8" fill="#b8babe"/><rect x="35.9" y="14.5" width="2.9" height="1.8" fill="#b8babe"/><rect x="35.9" y="17.0" width="2.9" height="1.8" fill="#b8babe"/><rect x="35.9" y="19.5" width="2.9" height="1.8" fill="#b8babe"/><rect x="39.2" y="13.0" width="2.9" height="1.8" fill="#b8babe"/><rect x="39.2" y="15.5" width="2.9" height="1.8" fill="#b8babe"/><rect x="39.2" y="18.0" width="2.9" height="1.8" fill="#b8babe"/><rect x="39.2" y="4" width="1" height="1.5" fill="#9a9aa0"/><rect x="42.4" y="11.0" width="2.9" height="1.8" fill="#b8babe"/><rect x="42.4" y="13.5" width="2.9" height="1.8" fill="#b8babe"/><rect x="42.4" y="16.0" width="2.9" height="1.8" fill="#b8babe"/><rect x="45.7" y="9.0" width="2.9" height="1.8" fill="#b8babe"/><rect x="45.7" y="11.5" width="2.9" height="1.8" fill="#b8babe"/><rect x="45.7" y="14.0" width="2.9" height="1.8" fill="#b8babe"/><rect x="45.7" y="2" width="1" height="1.5" fill="#9a9aa0"/><rect x="48.9" y="9.0" width="2.9" height="1.8" fill="#b8babe"/><rect x="48.9" y="11.5" width="2.9" height="1.8" fill="#b8babe"/><rect x="48.9" y="14.0" width="2.9" height="1.8" fill="#b8babe"/><rect x="48.9" y="5" width="1" height="1.5" fill="#9a9aa0"/><rect x="52.2" y="9.0" width="2.9" height="1.8" fill="#b8babe"/><rect x="52.2" y="11.5" width="2.9" height="1.8" fill="#b8babe"/><rect x="52.2" y="14.0" width="2.9" height="1.8" fill="#b8babe"/><rect x="55.5" y="10.0" width="2.9" height="1.8" fill="#b8babe"/><rect x="55.5" y="12.5" width="2.9" height="1.8" fill="#b8babe"/><rect x="55.5" y="15.0" width="2.9" height="1.8" fill="#b8babe"/><rect x="58.7" y="8.0" width="2.9" height="1.8" fill="#b8babe"/><rect x="58.7" y="10.5" width="2.9" height="1.8" fill="#b8babe"/><rect x="58.7" y="13.0" width="2.9" height="1.8" fill="#b8babe"/><rect x="58.7" y="15.5" width="2.9" height="1.8" fill="#b8babe"/></svg>
<svg class="ab" style="left:866.5px;top:156px" width="10" height="11"><rect x="0" y="0" width="9" height="11" fill="#e8ecf0"/><path d="M0 2.5 H5 M0 5.5 H5 M0 8.5 H5" stroke="#48515a" stroke-width="1"/></svg>
<div class="tx" style="left:878.5px;top:154px;font-size:12px;color:#e6e0ea;transform:scaleX(0.86);transform-origin:0 0;letter-spacing:0.6px">Pattern 2</div>
<div class="ab" style="left:925.5px;top:153px;width:233.2px;height:39px;overflow:hidden"><div class="ab" style="left:0;top:15px;width:100%;height:24px;background:#4b2b31;opacity:0.85"></div><div class="ab" style="left:0;top:0.5px;width:100%;height:14.5px;background:#6c566c;border-radius:3px;box-shadow:inset 0 0 0 1px rgba(255,255,255,0.1)"></div></div>
<svg class="ab" style="left:925.5px;top:168px" width="233.2" height="24"><path d="M0.0 6.5 L1.0 7.9 L2.0 6.5 L3.0 6.9 L4.0 6.5 L5.0 7.4 L6.0 6.7 L7.0 7.5 L8.0 7.2 L9.0 7.9 L10.0 6.6 L11.0 7.9 L12.0 6.6 L13.0 7.8 L14.0 6.5 L15.0 6.8 L16.0 7.3 L17.0 7.1 L18.0 6.6 L19.0 6.9 L20.0 7.0 L21.0 7.5 L22.0 7.5 L23.0 7.5 L24.0 7.1 L25.0 6.9 L26.0 7.4 L27.0 7.7 L28.0 6.9 L29.0 7.9 L30.0 7.0 L31.0 6.9 L32.0 7.9 L33.0 7.5 L34.0 6.9 L35.0 7.3 L36.0 6.8 L37.0 6.5 L38.0 6.7 L39.0 7.5 L40.0 7.6 L41.0 6.5 L42.0 7.7 L43.0 6.8 L44.0 7.5 L45.0 7.2 L46.0 7.1 L47.0 7.3 L48.0 6.7 L49.0 7.3 L50.0 7.3 L51.0 8.0 L52.0 6.9 L53.0 7.2 L54.0 6.8 L55.0 7.1 L56.0 7.6 L57.0 6.5 L58.0 8.0 L59.1 7.9 L60.1 6.6 L61.1 7.7 L62.1 6.6 L63.1 7.7 L64.1 7.7 L65.1 7.1 L66.1 7.8 L67.1 7.8 L68.1 6.5 L69.1 6.6 L70.1 7.9 L71.1 8.0 L72.1 7.6 L73.1 7.3 L74.1 7.4 L75.1 7.3 L76.1 6.9 L77.1 7.1 L78.1 6.5 L79.1 7.1 L80.1 7.1 L81.1 7.2 L82.1 7.5 L83.1 7.8 L84.1 7.7 L85.1 6.9 L86.1 7.1 L87.1 8.0 L88.1 6.5 L89.1 7.6 L90.1 7.4 L91.1 7.5 L92.1 7.7 L93.1 6.5 L94.1 6.9 L95.1 7.0 L96.1 7.4 L97.1 7.4 L98.1 6.6 L99.1 6.6 L100.1 6.5 L101.1 7.1 L102.1 7.1 L103.1 7.6 L104.1 7.6 L105.1 7.3 L106.1 6.7 L107.1 7.7 L108.1 6.8 L109.1 7.2 L110.1 7.3 L111.1 6.6 L112.1 6.5 L113.1 7.7 L114.1 7.6 L115.1 6.8 L116.1 7.6 L117.1 7.9 L118.1 7.0 L119.1 7.4 L120.1 7.6 L121.1 7.9 L122.1 7.2 L123.1 6.7 L124.1 6.9 L125.1 7.1 L126.1 7.5 L127.1 7.4 L128.1 7.5 L129.1 7.6 L130.1 7.4 L131.1 7.0 L132.1 6.5 L133.1 7.5 L134.1 7.1 L135.1 7.6 L136.1 7.8 L137.1 7.9 L138.1 7.5 L139.1 7.5 L140.1 6.5 L141.1 6.7 L142.1 8.0 L143.1 7.5 L144.1 7.0 L145.1 7.2 L146.1 7.8 L147.1 6.8 L148.1 7.4 L149.1 7.8 L150.1 7.6 L151.1 7.4 L152.1 6.6 L153.1 7.3 L154.1 7.0 L155.1 7.6 L156.1 7.2 L157.1 7.8 L158.1 6.8 L159.1 7.9 L160.1 7.4 L161.1 6.7 L162.1 7.7 L163.1 7.3 L164.1 6.6 L165.1 7.1 L166.1 7.2 L167.1 7.8 L168.1 7.2 L169.1 7.5 L170.1 7.5 L171.1 6.5 L172.1 6.8 L173.1 7.4 L174.1 7.1 L175.2 7.0 L176.2 7.0 L177.2 7.7 L178.2 7.7 L179.2 7.9 L180.2 7.9 L181.2 6.8 L182.2 7.8 L183.2 7.8 L184.2 7.1 L185.2 7.9 L186.2 7.1 L187.2 7.7 L188.2 7.2 L189.2 7.6 L190.2 8.0 L191.2 7.7 L192.2 7.8 L193.2 7.4 L194.2 7.0 L195.2 7.9 L196.2 7.3 L197.2 7.3 L198.2 6.8 L199.2 7.4 L200.2 7.9 L201.2 7.8 L202.2 7.1 L203.2 6.8 L204.2 7.6 L205.2 8.0 L206.2 7.0 L207.2 6.9 L208.2 7.1 L209.2 6.7 L210.2 6.7 L211.2 6.7 L212.2 7.9 L213.2 7.2 L214.2 6.6 L215.2 6.6 L216.2 7.1 L217.2 6.9 L218.2 7.9 L219.2 6.8 L220.2 6.6 L221.2 7.5 L222.2 6.7 L223.2 6.5 L224.2 6.8 L225.2 6.6 L226.2 6.8 L227.2 7.1 L228.2 7.1 L229.2 6.9 L230.2 7.4 L231.2 6.6 L232.2 6.6 L233.2 7.7 L233.2 17.3 L232.2 18.4 L231.2 18.4 L230.2 17.6 L229.2 18.1 L228.2 17.9 L227.2 17.9 L226.2 18.2 L225.2 18.4 L224.2 18.2 L223.2 18.5 L222.2 18.3 L221.2 17.5 L220.2 18.4 L219.2 18.2 L218.2 17.1 L217.2 18.1 L216.2 17.9 L215.2 18.4 L214.2 18.4 L213.2 17.8 L212.2 17.1 L211.2 18.3 L210.2 18.3 L209.2 18.3 L208.2 17.9 L207.2 18.1 L206.2 18.0 L205.2 17.0 L204.2 17.4 L203.2 18.2 L202.2 17.9 L201.2 17.2 L200.2 17.1 L199.2 17.6 L198.2 18.2 L197.2 17.7 L196.2 17.7 L195.2 17.1 L194.2 18.0 L193.2 17.6 L192.2 17.2 L191.2 17.3 L190.2 17.0 L189.2 17.4 L188.2 17.8 L187.2 17.3 L186.2 17.9 L185.2 17.1 L184.2 17.9 L183.2 17.2 L182.2 17.2 L181.2 18.2 L180.2 17.1 L179.2 17.1 L178.2 17.3 L177.2 17.3 L176.2 18.0 L175.2 18.0 L174.1 17.9 L173.1 17.6 L172.1 18.2 L171.1 18.5 L170.1 17.5 L169.1 17.5 L168.1 17.8 L167.1 17.2 L166.1 17.8 L165.1 17.9 L164.1 18.4 L163.1 17.7 L162.1 17.3 L161.1 18.3 L160.1 17.6 L159.1 17.1 L158.1 18.2 L157.1 17.2 L156.1 17.8 L155.1 17.4 L154.1 18.0 L153.1 17.7 L152.1 18.4 L151.1 17.6 L150.1 17.4 L149.1 17.2 L148.1 17.6 L147.1 18.2 L146.1 17.2 L145.1 17.8 L144.1 18.0 L143.1 17.5 L142.1 17.0 L141.1 18.3 L140.1 18.5 L139.1 17.5 L138.1 17.5 L137.1 17.1 L136.1 17.2 L135.1 17.4 L134.1 17.9 L133.1 17.5 L132.1 18.5 L131.1 18.0 L130.1 17.6 L129.1 17.4 L128.1 17.5 L127.1 17.6 L126.1 17.5 L125.1 17.9 L124.1 18.1 L123.1 18.3 L122.1 17.8 L121.1 17.1 L120.1 17.4 L119.1 17.6 L118.1 18.0 L117.1 17.1 L116.1 17.4 L115.1 18.2 L114.1 17.4 L113.1 17.3 L112.1 18.5 L111.1 18.4 L110.1 17.7 L109.1 17.8 L108.1 18.2 L107.1 17.3 L106.1 18.3 L105.1 17.7 L104.1 17.4 L103.1 17.4 L102.1 17.9 L101.1 17.9 L100.1 18.5 L99.1 18.4 L98.1 18.4 L97.1 17.6 L96.1 17.6 L95.1 18.0 L94.1 18.1 L93.1 18.5 L92.1 17.3 L91.1 17.5 L90.1 17.6 L89.1 17.4 L88.1 18.5 L87.1 17.0 L86.1 17.9 L85.1 18.1 L84.1 17.3 L83.1 17.2 L82.1 17.5 L81.1 17.8 L80.1 17.9 L79.1 17.9 L78.1 18.5 L77.1 17.9 L76.1 18.1 L75.1 17.7 L74.1 17.6 L73.1 17.7 L72.1 17.4 L71.1 17.0 L70.1 17.1 L69.1 18.4 L68.1 18.5 L67.1 17.2 L66.1 17.2 L65.1 17.9 L64.1 17.3 L63.1 17.3 L62.1 18.4 L61.1 17.3 L60.1 18.4 L59.1 17.1 L58.0 17.0 L57.0 18.5 L56.0 17.4 L55.0 17.9 L54.0 18.2 L53.0 17.8 L52.0 18.1 L51.0 17.0 L50.0 17.7 L49.0 17.7 L48.0 18.3 L47.0 17.7 L46.0 17.9 L45.0 17.8 L44.0 17.5 L43.0 18.2 L42.0 17.3 L41.0 18.5 L40.0 17.4 L39.0 17.5 L38.0 18.3 L37.0 18.5 L36.0 18.2 L35.0 17.7 L34.0 18.1 L33.0 17.5 L32.0 17.1 L31.0 18.1 L30.0 18.0 L29.0 17.1 L28.0 18.1 L27.0 17.3 L26.0 17.6 L25.0 18.1 L24.0 17.9 L23.0 17.5 L22.0 17.5 L21.0 17.5 L20.0 18.0 L19.0 18.1 L18.0 18.4 L17.0 17.9 L16.0 17.7 L15.0 18.2 L14.0 18.5 L13.0 17.2 L12.0 18.4 L11.0 17.1 L10.0 18.4 L9.0 17.1 L8.0 17.8 L7.0 17.5 L6.0 18.3 L5.0 17.6 L4.0 18.5 L3.0 18.1 L2.0 18.5 L1.0 17.1 L0.0 18.5Z" fill="#c8b0c2"/></svg>
<svg class="ab" style="left:928.5px;top:156px" width="12" height="10"><rect x="0.5" y="1" width="1" height="8" fill="#8a8cc0"/><path d="M1.5 1 L4.2 4 L5.8 2 L7 4.2 L10.5 5 L7 5.8 L5.8 8 L4.2 6 L1.5 9Z" fill="#f0ecd8"/></svg>
<div class="tx" style="left:940.5px;top:152.5px;font-size:13px;color:#e6e0ea;transform:scaleX(0.92);transform-origin:0 0;letter-spacing:0.6px">曾经的你</div>
<div class="ab" style="left:647.2px;top:193px;width:15.6px;height:39px;overflow:hidden"><div class="ab" style="left:0;top:15px;width:100%;height:24px;background:#4a2a2c;opacity:0.85"></div><div class="ab" style="left:0;top:0.5px;width:100%;height:14.5px;background:#5a6e58;border-radius:3px;box-shadow:inset 0 0 0 1px rgba(255,255,255,0.1)"></div></div>
<svg class="ab" style="left:647.2px;top:208px" width="15.6" height="24"><path d="M0 12.5 Q7.8 11 10.8 1.5 Q12.2 6 15.6 7 V18 Q12.2 19 10.8 23.5 Q7.8 14 0 12.5Z" fill="#b4c8b0"/></svg>
<svg class="ab" style="left:650.2px;top:196px" width="12" height="10"><rect x="0.5" y="1" width="1" height="8" fill="#8a8cc0"/><path d="M1.5 1 L4.2 4 L5.8 2 L7 4.2 L10.5 5 L7 5.8 L5.8 8 L4.2 6 L1.5 9Z" fill="#f0ecd8"/></svg>
<div class="ab" style="left:680.0px;top:193px;width:15.8px;height:39px;overflow:hidden"><div class="ab" style="left:0;top:15px;width:100%;height:24px;background:#4a2a2c;opacity:0.85"></div><div class="ab" style="left:0;top:0.5px;width:100%;height:14.5px;background:#5a6e58;border-radius:3px;box-shadow:inset 0 0 0 1px rgba(255,255,255,0.1)"></div></div>
<svg class="ab" style="left:680.0px;top:208px" width="15.8" height="24"><path d="M0 12.5 Q7.9 11 10.9 1.5 Q12.3 6 15.8 7 V18 Q12.3 19 10.9 23.5 Q7.9 14 0 12.5Z" fill="#b4c8b0"/></svg>
<svg class="ab" style="left:683px;top:196px" width="12" height="10"><rect x="0.5" y="1" width="1" height="8" fill="#8a8cc0"/><path d="M1.5 1 L4.2 4 L5.8 2 L7 4.2 L10.5 5 L7 5.8 L5.8 8 L4.2 6 L1.5 9Z" fill="#f0ecd8"/></svg>
<div class="ab" style="left:925.5px;top:193px;width:233.2px;height:39px;overflow:hidden"><div class="ab" style="left:0;top:15px;width:100%;height:24px;background:#58404a;opacity:0.85"></div><div class="ab" style="left:0;top:0.5px;width:100%;height:14.5px;background:#4e5787;border-radius:3px;box-shadow:inset 0 0 0 1px rgba(255,255,255,0.1)"></div></div>
<svg class="ab" style="left:925.5px;top:208px" width="233.2" height="24"><path d="M0 3 H230.2 Q232.2 3 232.2 23" fill="none" stroke="#dcd4e4" stroke-width="1.3"/></svg>
<svg class="ab" style="left:928.5px;top:196px" width="12" height="11"><circle cx="2.5" cy="8.5" r="1.8" fill="none" stroke="#e0e4f0" stroke-width="1.2"/><circle cx="9.5" cy="2.5" r="1.8" fill="none" stroke="#e0e4f0" stroke-width="1.2"/><path d="M3.8 7.2 L8.2 3.8" stroke="#e0e4f0" stroke-width="1.2"/></svg>
<div class="tx" style="left:940.5px;top:192.5px;font-size:13px;color:#e6e0ea;transform:scaleX(0.92);transform-origin:0 0;letter-spacing:0.6px">曾经的你 - 音量倍增</div>
<div class="ab" style="left:1161.5px;top:193px;width:61.5px;height:39px;overflow:hidden"><div class="ab" style="left:0;top:15px;width:100%;height:24px;background:#4a2a2f;opacity:0.85"></div><div class="ab" style="left:0;top:0.5px;width:100%;height:14.5px;background:#48515a;border-radius:3px;box-shadow:inset 0 0 0 1px rgba(255,255,255,0.1)"></div></div>
<svg class="ab" style="left:1161.5px;top:208px" width="61.5" height="24"><rect x="0.0" y="10.0" width="2.9" height="1.8" fill="#b8babe"/><rect x="0.0" y="12.5" width="2.9" height="1.8" fill="#b8babe"/><rect x="3.2" y="10.0" width="2.9" height="1.8" fill="#b8babe"/><rect x="3.2" y="12.5" width="2.9" height="1.8" fill="#b8babe"/><rect x="3.2" y="4" width="1" height="1.5" fill="#9a9aa0"/><rect x="6.5" y="12.0" width="2.9" height="1.8" fill="#b8babe"/><rect x="6.5" y="14.5" width="2.9" height="1.8" fill="#b8babe"/><rect x="6.5" y="17.0" width="2.9" height="1.8" fill="#b8babe"/><rect x="9.7" y="14.0" width="2.9" height="1.8" fill="#b8babe"/><rect x="9.7" y="16.5" width="2.9" height="1.8" fill="#b8babe"/><rect x="9.7" y="19.0" width="2.9" height="1.8" fill="#b8babe"/><rect x="9.7" y="4" width="1" height="1.5" fill="#9a9aa0"/><rect x="12.9" y="13.0" width="2.9" height="1.8" fill="#b8babe"/><rect x="12.9" y="15.5" width="2.9" height="1.8" fill="#b8babe"/><rect x="16.2" y="12.0" width="2.9" height="1.8" fill="#b8babe"/><rect x="16.2" y="14.5" width="2.9" height="1.8" fill="#b8babe"/><rect x="16.2" y="17.0" width="2.9" height="1.8" fill="#b8babe"/><rect x="19.4" y="13.0" width="2.9" height="1.8" fill="#b8babe"/><rect x="19.4" y="15.5" width="2.9" height="1.8" fill="#b8babe"/><rect x="19.4" y="18.0" width="2.9" height="1.8" fill="#b8babe"/><rect x="22.7" y="14.0" width="2.9" height="1.8" fill="#b8babe"/><rect x="22.7" y="16.5" width="2.9" height="1.8" fill="#b8babe"/><rect x="22.7" y="19.0" width="2.9" height="1.8" fill="#b8babe"/><rect x="22.7" y="3" width="1" height="1.5" fill="#9a9aa0"/><rect x="25.9" y="14.0" width="2.9" height="1.8" fill="#b8babe"/><rect x="25.9" y="16.5" width="2.9" height="1.8" fill="#b8babe"/><rect x="25.9" y="19.0" width="2.9" height="1.8" fill="#b8babe"/><rect x="29.1" y="13.0" width="2.9" height="1.8" fill="#b8babe"/><rect x="29.1" y="15.5" width="2.9" height="1.8" fill="#b8babe"/><rect x="29.1" y="18.0" width="2.9" height="1.8" fill="#b8babe"/><rect x="32.4" y="14.0" width="2.9" height="1.8" fill="#b8babe"/><rect x="32.4" y="16.5" width="2.9" height="1.8" fill="#b8babe"/><rect x="32.4" y="19.0" width="2.9" height="1.8" fill="#b8babe"/><rect x="35.6" y="14.0" width="2.9" height="1.8" fill="#b8babe"/><rect x="35.6" y="16.5" width="2.9" height="1.8" fill="#b8babe"/><rect x="35.6" y="19.0" width="2.9" height="1.8" fill="#b8babe"/><rect x="35.6" y="2" width="1" height="1.5" fill="#9a9aa0"/><rect x="38.8" y="14.0" width="2.9" height="1.8" fill="#b8babe"/><rect x="38.8" y="16.5" width="2.9" height="1.8" fill="#b8babe"/><rect x="42.1" y="12.0" width="2.9" height="1.8" fill="#b8babe"/><rect x="42.1" y="14.5" width="2.9" height="1.8" fill="#b8babe"/><rect x="45.3" y="10.0" width="2.9" height="1.8" fill="#b8babe"/><rect x="45.3" y="12.5" width="2.9" height="1.8" fill="#b8babe"/><rect x="45.3" y="15.0" width="2.9" height="1.8" fill="#b8babe"/><rect x="45.3" y="4" width="1" height="1.5" fill="#9a9aa0"/><rect x="48.6" y="9.0" width="2.9" height="1.8" fill="#b8babe"/><rect x="48.6" y="11.5" width="2.9" height="1.8" fill="#b8babe"/><rect x="51.8" y="9.0" width="2.9" height="1.8" fill="#b8babe"/><rect x="51.8" y="11.5" width="2.9" height="1.8" fill="#b8babe"/><rect x="55.0" y="8.0" width="2.9" height="1.8" fill="#b8babe"/><rect x="55.0" y="10.5" width="2.9" height="1.8" fill="#b8babe"/><rect x="55.0" y="13.0" width="2.9" height="1.8" fill="#b8babe"/><rect x="58.3" y="7.0" width="2.9" height="1.8" fill="#b8babe"/><rect x="58.3" y="9.5" width="2.9" height="1.8" fill="#b8babe"/><rect x="58.3" y="12.0" width="2.9" height="1.8" fill="#b8babe"/><rect x="58.3" y="14.5" width="2.9" height="1.8" fill="#b8babe"/></svg>
<svg class="ab" style="left:1164.5px;top:196px" width="10" height="11"><rect x="0" y="0" width="9" height="11" fill="#e8ecf0"/><path d="M0 2.5 H5 M0 5.5 H5 M0 8.5 H5" stroke="#48515a" stroke-width="1"/></svg>
<div class="tx" style="left:1176.5px;top:194px;font-size:12px;color:#e6e0ea;transform:scaleX(0.86);transform-origin:0 0;letter-spacing:0.6px">Pattern 2</div>
<div class="ab" style="left:629.0px;top:233px;width:2.5px;height:39px"><div class="ab" style="left:0;top:1px;width:100%;height:14px;background:#5a6e58;border-radius:1px"></div><div class="ab" style="left:0;top:15px;width:100%;height:24px;background:#4a2a2c"></div></div>
<svg class="ab" style="left:629.0px;top:248px" width="2.5" height="24"><path d="M0 2 Q0.5 10 2.5 12 Q0.5 14 0 22Z" fill="#b4c8b0"/></svg>
<div class="ab" style="left:707.2px;top:233px;width:28.6px;height:39px;overflow:hidden"><div class="ab" style="left:0;top:15px;width:100%;height:24px;background:#4a2a2c;opacity:0.85"></div><div class="ab" style="left:0;top:0.5px;width:100%;height:14.5px;background:#5a6e58;border-radius:3px;box-shadow:inset 0 0 0 1px rgba(255,255,255,0.1)"></div></div>
<svg class="ab" style="left:707.2px;top:248px" width="28.6" height="24"><path d="M0 8.5 L24.6 1 Q25.7 10 28.6 12 Q25.7 14 24.6 23.5 L0 16Z" fill="#b4c8b0"/></svg>
<svg class="ab" style="left:710.2px;top:236px" width="12" height="10"><rect x="0.5" y="1" width="1" height="8" fill="#8a8cc0"/><path d="M1.5 1 L4.2 4 L5.8 2 L7 4.2 L10.5 5 L7 5.8 L5.8 8 L4.2 6 L1.5 9Z" fill="#f0ecd8"/></svg>
<svg class="ab" style="left:707.2px;top:248px" width="29" height="24"><path d="M0 8.5 L24.6 1 Q25.7 10 28.6 12 Q25.7 14 24.6 23.5 L0 16Z" fill="#c6cab4"/></svg>
<div class="ab" style="left:750.2px;top:233px;width:15.5px;height:39px;overflow:hidden"><div class="ab" style="left:0;top:15px;width:100%;height:24px;background:#4a2a2c;opacity:0.85"></div><div class="ab" style="left:0;top:0.5px;width:100%;height:14.5px;background:#5a6e58;border-radius:3px;box-shadow:inset 0 0 0 1px rgba(255,255,255,0.1)"></div></div>
<svg class="ab" style="left:750.2px;top:248px" width="15.5" height="24"><path d="M0 12.5 Q7.8 11 10.7 1.5 Q12.1 6 15.5 7 V18 Q12.1 19 10.7 23.5 Q7.8 14 0 12.5Z" fill="#b4c8b0"/></svg>
<svg class="ab" style="left:753.2px;top:236px" width="12" height="10"><rect x="0.5" y="1" width="1" height="8" fill="#8a8cc0"/><path d="M1.5 1 L4.2 4 L5.8 2 L7 4.2 L10.5 5 L7 5.8 L5.8 8 L4.2 6 L1.5 9Z" fill="#f0ecd8"/></svg>
<div class="ab" style="left:783.1px;top:233px;width:15.5px;height:39px;overflow:hidden"><div class="ab" style="left:0;top:15px;width:100%;height:24px;background:#4a2a2c;opacity:0.85"></div><div class="ab" style="left:0;top:0.5px;width:100%;height:14.5px;background:#5a6e58;border-radius:3px;box-shadow:inset 0 0 0 1px rgba(255,255,255,0.1)"></div></div>
<svg class="ab" style="left:783.1px;top:248px" width="15.5" height="24"><path d="M0 12.5 Q7.8 11 10.7 1.5 Q12.1 6 15.5 7 V18 Q12.1 19 10.7 23.5 Q7.8 14 0 12.5Z" fill="#b4c8b0"/></svg>
<svg class="ab" style="left:786.1px;top:236px" width="12" height="10"><rect x="0.5" y="1" width="1" height="8" fill="#8a8cc0"/><path d="M1.5 1 L4.2 4 L5.8 2 L7 4.2 L10.5 5 L7 5.8 L5.8 8 L4.2 6 L1.5 9Z" fill="#f0ecd8"/></svg>
<div class="ab" style="left:816.0px;top:233px;width:15.5px;height:39px;overflow:hidden"><div class="ab" style="left:0;top:15px;width:100%;height:24px;background:#4a2a2c;opacity:0.85"></div><div class="ab" style="left:0;top:0.5px;width:100%;height:14.5px;background:#5a6e58;border-radius:3px;box-shadow:inset 0 0 0 1px rgba(255,255,255,0.1)"></div></div>
<svg class="ab" style="left:816.0px;top:248px" width="15.5" height="24"><path d="M0 12.5 Q7.8 11 10.7 1.5 Q12.1 6 15.5 7 V18 Q12.1 19 10.7 23.5 Q7.8 14 0 12.5Z" fill="#b4c8b0"/></svg>
<svg class="ab" style="left:819px;top:236px" width="12" height="10"><rect x="0.5" y="1" width="1" height="8" fill="#8a8cc0"/><path d="M1.5 1 L4.2 4 L5.8 2 L7 4.2 L10.5 5 L7 5.8 L5.8 8 L4.2 6 L1.5 9Z" fill="#f0ecd8"/></svg>
<div class="ab" style="left:882.0px;top:233px;width:15.5px;height:39px;overflow:hidden"><div class="ab" style="left:0;top:15px;width:100%;height:24px;background:#4a2a2c;opacity:0.85"></div><div class="ab" style="left:0;top:0.5px;width:100%;height:14.5px;background:#5a6e58;border-radius:3px;box-shadow:inset 0 0 0 1px rgba(255,255,255,0.1)"></div></div>
<svg class="ab" style="left:882.0px;top:248px" width="15.5" height="24"><path d="M0 12.5 Q7.8 11 10.7 1.5 Q12.1 6 15.5 7 V18 Q12.1 19 10.7 23.5 Q7.8 14 0 12.5Z" fill="#b4c8b0"/></svg>
<svg class="ab" style="left:885px;top:236px" width="12" height="10"><rect x="0.5" y="1" width="1" height="8" fill="#8a8cc0"/><path d="M1.5 1 L4.2 4 L5.8 2 L7 4.2 L10.5 5 L7 5.8 L5.8 8 L4.2 6 L1.5 9Z" fill="#f0ecd8"/></svg>
<div class="ab" style="left:947.9px;top:233px;width:15.5px;height:39px;overflow:hidden"><div class="ab" style="left:0;top:15px;width:100%;height:24px;background:#4a2a2c;opacity:0.85"></div><div class="ab" style="left:0;top:0.5px;width:100%;height:14.5px;background:#5a6e58;border-radius:3px;box-shadow:inset 0 0 0 1px rgba(255,255,255,0.1)"></div></div>
<svg class="ab" style="left:947.9px;top:248px" width="15.5" height="24"><path d="M0 12.5 Q7.8 11 10.7 1.5 Q12.1 6 15.5 7 V18 Q12.1 19 10.7 23.5 Q7.8 14 0 12.5Z" fill="#b4c8b0"/></svg>
<svg class="ab" style="left:950.9px;top:236px" width="12" height="10"><rect x="0.5" y="1" width="1" height="8" fill="#8a8cc0"/><path d="M1.5 1 L4.2 4 L5.8 2 L7 4.2 L10.5 5 L7 5.8 L5.8 8 L4.2 6 L1.5 9Z" fill="#f0ecd8"/></svg>
<div class="ab" style="left:981.3px;top:233px;width:15.5px;height:39px;overflow:hidden"><div class="ab" style="left:0;top:15px;width:100%;height:24px;background:#4a2a2c;opacity:0.85"></div><div class="ab" style="left:0;top:0.5px;width:100%;height:14.5px;background:#5a6e58;border-radius:3px;box-shadow:inset 0 0 0 1px rgba(255,255,255,0.1)"></div></div>
<svg class="ab" style="left:981.3px;top:248px" width="15.5" height="24"><path d="M0 12.5 Q7.8 11 10.7 1.5 Q12.1 6 15.5 7 V18 Q12.1 19 10.7 23.5 Q7.8 14 0 12.5Z" fill="#b4c8b0"/></svg>
<svg class="ab" style="left:984.3px;top:236px" width="12" height="10"><rect x="0.5" y="1" width="1" height="8" fill="#8a8cc0"/><path d="M1.5 1 L4.2 4 L5.8 2 L7 4.2 L10.5 5 L7 5.8 L5.8 8 L4.2 6 L1.5 9Z" fill="#f0ecd8"/></svg>
<div class="ab" style="left:1014.3px;top:233px;width:15.5px;height:39px;overflow:hidden"><div class="ab" style="left:0;top:15px;width:100%;height:24px;background:#4a2a2c;opacity:0.85"></div><div class="ab" style="left:0;top:0.5px;width:100%;height:14.5px;background:#5a6e58;border-radius:3px;box-shadow:inset 0 0 0 1px rgba(255,255,255,0.1)"></div></div>
<svg class="ab" style="left:1014.3px;top:248px" width="15.5" height="24"><path d="M0 12.5 Q7.8 11 10.7 1.5 Q12.1 6 15.5 7 V18 Q12.1 19 10.7 23.5 Q7.8 14 0 12.5Z" fill="#b4c8b0"/></svg>
<svg class="ab" style="left:1017.3px;top:236px" width="12" height="10"><rect x="0.5" y="1" width="1" height="8" fill="#8a8cc0"/><path d="M1.5 1 L4.2 4 L5.8 2 L7 4.2 L10.5 5 L7 5.8 L5.8 8 L4.2 6 L1.5 9Z" fill="#f0ecd8"/></svg>
<div class="ab" style="left:1047.2px;top:233px;width:15.5px;height:39px;overflow:hidden"><div class="ab" style="left:0;top:15px;width:100%;height:24px;background:#4a2a2c;opacity:0.85"></div><div class="ab" style="left:0;top:0.5px;width:100%;height:14.5px;background:#5a6e58;border-radius:3px;box-shadow:inset 0 0 0 1px rgba(255,255,255,0.1)"></div></div>
<svg class="ab" style="left:1047.2px;top:248px" width="15.5" height="24"><path d="M0 12.5 Q7.8 11 10.7 1.5 Q12.1 6 15.5 7 V18 Q12.1 19 10.7 23.5 Q7.8 14 0 12.5Z" fill="#b4c8b0"/></svg>
<svg class="ab" style="left:1050.2px;top:236px" width="12" height="10"><rect x="0.5" y="1" width="1" height="8" fill="#8a8cc0"/><path d="M1.5 1 L4.2 4 L5.8 2 L7 4.2 L10.5 5 L7 5.8 L5.8 8 L4.2 6 L1.5 9Z" fill="#f0ecd8"/></svg>
<div class="ab" style="left:1080.1px;top:233px;width:15.5px;height:39px;overflow:hidden"><div class="ab" style="left:0;top:15px;width:100%;height:24px;background:#4a2a2c;opacity:0.85"></div><div class="ab" style="left:0;top:0.5px;width:100%;height:14.5px;background:#5a6e58;border-radius:3px;box-shadow:inset 0 0 0 1px rgba(255,255,255,0.1)"></div></div>
<svg class="ab" style="left:1080.1px;top:248px" width="15.5" height="24"><path d="M0 12.5 Q7.8 11 10.7 1.5 Q12.1 6 15.5 7 V18 Q12.1 19 10.7 23.5 Q7.8 14 0 12.5Z" fill="#b4c8b0"/></svg>
<svg class="ab" style="left:1083.1px;top:236px" width="12" height="10"><rect x="0.5" y="1" width="1" height="8" fill="#8a8cc0"/><path d="M1.5 1 L4.2 4 L5.8 2 L7 4.2 L10.5 5 L7 5.8 L5.8 8 L4.2 6 L1.5 9Z" fill="#f0ecd8"/></svg>
<div class="ab" style="left:1113.0px;top:233px;width:15.5px;height:39px;overflow:hidden"><div class="ab" style="left:0;top:15px;width:100%;height:24px;background:#4a2a2c;opacity:0.85"></div><div class="ab" style="left:0;top:0.5px;width:100%;height:14.5px;background:#5a6e58;border-radius:3px;box-shadow:inset 0 0 0 1px rgba(255,255,255,0.1)"></div></div>
<svg class="ab" style="left:1113.0px;top:248px" width="15.5" height="24"><path d="M0 12.5 Q7.8 11 10.7 1.5 Q12.1 6 15.5 7 V18 Q12.1 19 10.7 23.5 Q7.8 14 0 12.5Z" fill="#b4c8b0"/></svg>
<svg class="ab" style="left:1116px;top:236px" width="12" height="10"><rect x="0.5" y="1" width="1" height="8" fill="#8a8cc0"/><path d="M1.5 1 L4.2 4 L5.8 2 L7 4.2 L10.5 5 L7 5.8 L5.8 8 L4.2 6 L1.5 9Z" fill="#f0ecd8"/></svg>
<div class="ab" style="left:1146.0px;top:233px;width:15.5px;height:39px;overflow:hidden"><div class="ab" style="left:0;top:15px;width:100%;height:24px;background:#4a2a2c;opacity:0.85"></div><div class="ab" style="left:0;top:0.5px;width:100%;height:14.5px;background:#5a6e58;border-radius:3px;box-shadow:inset 0 0 0 1px rgba(255,255,255,0.1)"></div></div>
<svg class="ab" style="left:1146.0px;top:248px" width="15.5" height="24"><path d="M0 12.5 Q7.8 11 10.7 1.5 Q12.1 6 15.5 7 V18 Q12.1 19 10.7 23.5 Q7.8 14 0 12.5Z" fill="#b4c8b0"/></svg>
<svg class="ab" style="left:1149px;top:236px" width="12" height="10"><rect x="0.5" y="1" width="1" height="8" fill="#8a8cc0"/><path d="M1.5 1 L4.2 4 L5.8 2 L7 4.2 L10.5 5 L7 5.8 L5.8 8 L4.2 6 L1.5 9Z" fill="#f0ecd8"/></svg>
<div class="ab" style="left:860.4px;top:233px;width:3.5px;height:39px;background:#4a3a44"></div><div class="ab" style="left:860.4px;top:249px;width:3.5px;height:23px;background:#d8b8c4"></div>
<div class="ab" style="left:1223px;top:233px;width:4px;height:39px;background:#4a3a44"></div><div class="ab" style="left:1223px;top:249px;width:4px;height:23px;background:#d8b8c4"></div>
<div class="ab" style="left:1255.4px;top:233px;width:5.5px;height:39px;background:#5a6e58"></div><div class="ab" style="left:1255.4px;top:249px;width:5.5px;height:23px;background:#c8d0b0"></div>
<div class="ab" style="left:629.9px;top:273px;width:16.1px;height:39px;overflow:hidden"><div class="ab" style="left:0;top:15px;width:100%;height:24px;background:#4a2a2f;opacity:0.85"></div><div class="ab" style="left:0;top:0.5px;width:100%;height:14.5px;background:#48515a;border-radius:3px;box-shadow:inset 0 0 0 1px rgba(255,255,255,0.1)"></div></div>
<svg class="ab" style="left:629.9px;top:288px" width="16.1" height="24"><rect x="0.0" y="10" width="1.2" height="1.2" fill="#9a9aa0" opacity="0.7"/><rect x="3.2" y="20" width="1.2" height="1.2" fill="#9a9aa0" opacity="0.7"/><rect x="6.4" y="4" width="1.2" height="1.2" fill="#9a9aa0" opacity="0.7"/><rect x="9.7" y="18" width="1.2" height="1.2" fill="#9a9aa0" opacity="0.7"/><rect x="12.9" y="8" width="1.2" height="1.2" fill="#9a9aa0" opacity="0.7"/><rect x="0" y="12" width="16.1" height="1" fill="#9a9aa0" opacity="0.6"/></svg>
<svg class="ab" style="left:632.9px;top:276px" width="10" height="11"><rect x="0" y="0" width="9" height="11" fill="#e8ecf0"/><path d="M0 2.5 H5 M0 5.5 H5 M0 8.5 H5" stroke="#48515a" stroke-width="1"/></svg>
<div class="ab" style="left:646.4px;top:273px;width:16.1px;height:39px;overflow:hidden"><div class="ab" style="left:0;top:15px;width:100%;height:24px;background:#4a2a2f;opacity:0.85"></div><div class="ab" style="left:0;top:0.5px;width:100%;height:14.5px;background:#48515a;border-radius:3px;box-shadow:inset 0 0 0 1px rgba(255,255,255,0.1)"></div></div>
<svg class="ab" style="left:646.4px;top:288px" width="16.1" height="24"><rect x="0.0" y="9" width="1.2" height="1.2" fill="#9a9aa0" opacity="0.7"/><rect x="3.2" y="7" width="1.2" height="1.2" fill="#9a9aa0" opacity="0.7"/><rect x="6.4" y="11" width="1.2" height="1.2" fill="#9a9aa0" opacity="0.7"/><rect x="9.7" y="14" width="1.2" height="1.2" fill="#9a9aa0" opacity="0.7"/><rect x="12.9" y="5" width="1.2" height="1.2" fill="#9a9aa0" opacity="0.7"/><rect x="0" y="12" width="16.1" height="1" fill="#9a9aa0" opacity="0.6"/></svg>
<svg class="ab" style="left:649.4px;top:276px" width="10" height="11"><rect x="0" y="0" width="9" height="11" fill="#e8ecf0"/><path d="M0 2.5 H5 M0 5.5 H5 M0 8.5 H5" stroke="#48515a" stroke-width="1"/></svg>
<div class="ab" style="left:662.9px;top:273px;width:16.1px;height:39px;overflow:hidden"><div class="ab" style="left:0;top:15px;width:100%;height:24px;background:#4a2a2f;opacity:0.85"></div><div class="ab" style="left:0;top:0.5px;width:100%;height:14.5px;background:#48515a;border-radius:3px;box-shadow:inset 0 0 0 1px rgba(255,255,255,0.1)"></div></div>
<svg class="ab" style="left:662.9px;top:288px" width="16.1" height="24"><rect x="0.0" y="12" width="1.2" height="1.2" fill="#9a9aa0" opacity="0.7"/><rect x="3.2" y="7" width="1.2" height="1.2" fill="#9a9aa0" opacity="0.7"/><rect x="6.4" y="11" width="1.2" height="1.2" fill="#9a9aa0" opacity="0.7"/><rect x="9.7" y="7" width="1.2" height="1.2" fill="#9a9aa0" opacity="0.7"/><rect x="12.9" y="8" width="1.2" height="1.2" fill="#9a9aa0" opacity="0.7"/><rect x="0" y="12" width="16.1" height="1" fill="#9a9aa0" opacity="0.6"/></svg>
<svg class="ab" style="left:665.9px;top:276px" width="10" height="11"><rect x="0" y="0" width="9" height="11" fill="#e8ecf0"/><path d="M0 2.5 H5 M0 5.5 H5 M0 8.5 H5" stroke="#48515a" stroke-width="1"/></svg>
<div class="ab" style="left:679.4px;top:273px;width:16.1px;height:39px;overflow:hidden"><div class="ab" style="left:0;top:15px;width:100%;height:24px;background:#4a2a2f;opacity:0.85"></div><div class="ab" style="left:0;top:0.5px;width:100%;height:14.5px;background:#48515a;border-radius:3px;box-shadow:inset 0 0 0 1px rgba(255,255,255,0.1)"></div></div>
<svg class="ab" style="left:679.4px;top:288px" width="16.1" height="24"><rect x="0.0" y="13" width="1.2" height="1.2" fill="#9a9aa0" opacity="0.7"/><rect x="3.2" y="7" width="1.2" height="1.2" fill="#9a9aa0" opacity="0.7"/><rect x="6.4" y="4" width="1.2" height="1.2" fill="#9a9aa0" opacity="0.7"/><rect x="9.7" y="15" width="1.2" height="1.2" fill="#9a9aa0" opacity="0.7"/><rect x="12.9" y="17" width="1.2" height="1.2" fill="#9a9aa0" opacity="0.7"/><rect x="0" y="12" width="16.1" height="1" fill="#9a9aa0" opacity="0.6"/></svg>
<svg class="ab" style="left:682.4px;top:276px" width="10" height="11"><rect x="0" y="0" width="9" height="11" fill="#e8ecf0"/><path d="M0 2.5 H5 M0 5.5 H5 M0 8.5 H5" stroke="#48515a" stroke-width="1"/></svg>
<div class="ab" style="left:732.5px;top:273px;width:64.3px;height:39px;overflow:hidden"><div class="ab" style="left:0;top:15px;width:100%;height:24px;background:#4a2a2f;opacity:0.85"></div><div class="ab" style="left:0;top:0.5px;width:100%;height:14.5px;background:#48515a;border-radius:3px;box-shadow:inset 0 0 0 1px rgba(255,255,255,0.1)"></div></div>
<svg class="ab" style="left:732.5px;top:288px" width="64.3" height="24"><rect x="0.0" y="10.0" width="2.9" height="1.8" fill="#b8babe"/><rect x="0.0" y="12.5" width="2.9" height="1.8" fill="#b8babe"/><rect x="0.0" y="15.0" width="2.9" height="1.8" fill="#b8babe"/><rect x="0.0" y="5" width="1" height="1.5" fill="#9a9aa0"/><rect x="3.2" y="8.0" width="2.9" height="1.8" fill="#b8babe"/><rect x="3.2" y="10.5" width="2.9" height="1.8" fill="#b8babe"/><rect x="3.2" y="13.0" width="2.9" height="1.8" fill="#b8babe"/><rect x="3.2" y="2" width="1" height="1.5" fill="#9a9aa0"/><rect x="6.4" y="6.0" width="2.9" height="1.8" fill="#b8babe"/><rect x="6.4" y="8.5" width="2.9" height="1.8" fill="#b8babe"/><rect x="9.6" y="8.0" width="2.9" height="1.8" fill="#b8babe"/><rect x="9.6" y="10.5" width="2.9" height="1.8" fill="#b8babe"/><rect x="9.6" y="13.0" width="2.9" height="1.8" fill="#b8babe"/><rect x="12.9" y="9.0" width="2.9" height="1.8" fill="#b8babe"/><rect x="12.9" y="11.5" width="2.9" height="1.8" fill="#b8babe"/><rect x="12.9" y="14.0" width="2.9" height="1.8" fill="#b8babe"/><rect x="16.1" y="8.0" width="2.9" height="1.8" fill="#b8babe"/><rect x="16.1" y="10.5" width="2.9" height="1.8" fill="#b8babe"/><rect x="16.1" y="13.0" width="2.9" height="1.8" fill="#b8babe"/><rect x="16.1" y="2" width="1" height="1.5" fill="#9a9aa0"/><rect x="19.3" y="8.0" width="2.9" height="1.8" fill="#b8babe"/><rect x="19.3" y="10.5" width="2.9" height="1.8" fill="#b8babe"/><rect x="22.5" y="9.0" width="2.9" height="1.8" fill="#b8babe"/><rect x="22.5" y="11.5" width="2.9" height="1.8" fill="#b8babe"/><rect x="22.5" y="14.0" width="2.9" height="1.8" fill="#b8babe"/><rect x="25.7" y="10.0" width="2.9" height="1.8" fill="#b8babe"/><rect x="25.7" y="12.5" width="2.9" height="1.8" fill="#b8babe"/><rect x="25.7" y="15.0" width="2.9" height="1.8" fill="#b8babe"/><rect x="25.7" y="17.5" width="2.9" height="1.8" fill="#b8babe"/><rect x="25.7" y="4" width="1" height="1.5" fill="#9a9aa0"/><rect x="28.9" y="12.0" width="2.9" height="1.8" fill="#b8babe"/><rect x="28.9" y="14.5" width="2.9" height="1.8" fill="#b8babe"/><rect x="28.9" y="17.0" width="2.9" height="1.8" fill="#b8babe"/><rect x="28.9" y="2" width="1" height="1.5" fill="#9a9aa0"/><rect x="32.1" y="13.0" width="2.9" height="1.8" fill="#b8babe"/><rect x="32.1" y="15.5" width="2.9" height="1.8" fill="#b8babe"/><rect x="32.1" y="18.0" width="2.9" height="1.8" fill="#b8babe"/><rect x="35.4" y="14.0" width="2.9" height="1.8" fill="#b8babe"/><rect x="35.4" y="16.5" width="2.9" height="1.8" fill="#b8babe"/><rect x="35.4" y="19.0" width="2.9" height="1.8" fill="#b8babe"/><rect x="38.6" y="14.0" width="2.9" height="1.8" fill="#b8babe"/><rect x="38.6" y="16.5" width="2.9" height="1.8" fill="#b8babe"/><rect x="41.8" y="14.0" width="2.9" height="1.8" fill="#b8babe"/><rect x="41.8" y="16.5" width="2.9" height="1.8" fill="#b8babe"/><rect x="41.8" y="19.0" width="2.9" height="1.8" fill="#b8babe"/><rect x="41.8" y="3" width="1" height="1.5" fill="#9a9aa0"/><rect x="45.0" y="12.0" width="2.9" height="1.8" fill="#b8babe"/><rect x="45.0" y="14.5" width="2.9" height="1.8" fill="#b8babe"/><rect x="45.0" y="17.0" width="2.9" height="1.8" fill="#b8babe"/><rect x="45.0" y="19.5" width="2.9" height="1.8" fill="#b8babe"/><rect x="48.2" y="14.0" width="2.9" height="1.8" fill="#b8babe"/><rect x="48.2" y="16.5" width="2.9" height="1.8" fill="#b8babe"/><rect x="48.2" y="5" width="1" height="1.5" fill="#9a9aa0"/><rect x="51.4" y="12.0" width="2.9" height="1.8" fill="#b8babe"/><rect x="51.4" y="14.5" width="2.9" height="1.8" fill="#b8babe"/><rect x="51.4" y="17.0" width="2.9" height="1.8" fill="#b8babe"/><rect x="51.4" y="19.5" width="2.9" height="1.8" fill="#b8babe"/><rect x="54.7" y="12.0" width="2.9" height="1.8" fill="#b8babe"/><rect x="54.7" y="14.5" width="2.9" height="1.8" fill="#b8babe"/><rect x="54.7" y="17.0" width="2.9" height="1.8" fill="#b8babe"/><rect x="57.9" y="13.0" width="2.9" height="1.8" fill="#b8babe"/><rect x="57.9" y="15.5" width="2.9" height="1.8" fill="#b8babe"/><rect x="57.9" y="18.0" width="2.9" height="1.8" fill="#b8babe"/><rect x="61.1" y="12.0" width="2.9" height="1.8" fill="#b8babe"/><rect x="61.1" y="14.5" width="2.9" height="1.8" fill="#b8babe"/><rect x="61.1" y="17.0" width="2.9" height="1.8" fill="#b8babe"/><rect x="61.1" y="4" width="1" height="1.5" fill="#9a9aa0"/></svg>
<svg class="ab" style="left:735.5px;top:276px" width="10" height="11"><rect x="0" y="0" width="9" height="11" fill="#e8ecf0"/><path d="M0 2.5 H5 M0 5.5 H5 M0 8.5 H5" stroke="#48515a" stroke-width="1"/></svg>
<div class="tx" style="left:747.5px;top:274px;font-size:12px;color:#e6e0ea;transform:scaleX(0.86);transform-origin:0 0;letter-spacing:0.6px">Pattern 1</div>
<div class="ab" style="left:796.8px;top:273px;width:62.8px;height:39px;overflow:hidden"><div class="ab" style="left:0;top:15px;width:100%;height:24px;background:#4a2a2f;opacity:0.85"></div><div class="ab" style="left:0;top:0.5px;width:100%;height:14.5px;background:#48515a;border-radius:3px;box-shadow:inset 0 0 0 1px rgba(255,255,255,0.1)"></div></div>
<svg class="ab" style="left:796.8px;top:288px" width="62.8" height="24"><rect x="0.0" y="8.0" width="3.0" height="1.8" fill="#b8babe"/><rect x="0.0" y="10.5" width="3.0" height="1.8" fill="#b8babe"/><rect x="0.0" y="13.0" width="3.0" height="1.8" fill="#b8babe"/><rect x="0.0" y="15.5" width="3.0" height="1.8" fill="#b8babe"/><rect x="3.3" y="7.0" width="3.0" height="1.8" fill="#b8babe"/><rect x="3.3" y="9.5" width="3.0" height="1.8" fill="#b8babe"/><rect x="3.3" y="12.0" width="3.0" height="1.8" fill="#b8babe"/><rect x="3.3" y="14.5" width="3.0" height="1.8" fill="#b8babe"/><rect x="3.3" y="2" width="1" height="1.5" fill="#9a9aa0"/><rect x="6.6" y="5.0" width="3.0" height="1.8" fill="#b8babe"/><rect x="6.6" y="7.5" width="3.0" height="1.8" fill="#b8babe"/><rect x="6.6" y="10.0" width="3.0" height="1.8" fill="#b8babe"/><rect x="9.9" y="5.0" width="3.0" height="1.8" fill="#b8babe"/><rect x="9.9" y="7.5" width="3.0" height="1.8" fill="#b8babe"/><rect x="9.9" y="10.0" width="3.0" height="1.8" fill="#b8babe"/><rect x="13.2" y="7.0" width="3.0" height="1.8" fill="#b8babe"/><rect x="13.2" y="9.5" width="3.0" height="1.8" fill="#b8babe"/><rect x="16.5" y="9.0" width="3.0" height="1.8" fill="#b8babe"/><rect x="16.5" y="11.5" width="3.0" height="1.8" fill="#b8babe"/><rect x="16.5" y="14.0" width="3.0" height="1.8" fill="#b8babe"/><rect x="16.5" y="16.5" width="3.0" height="1.8" fill="#b8babe"/><rect x="19.8" y="7.0" width="3.0" height="1.8" fill="#b8babe"/><rect x="19.8" y="9.5" width="3.0" height="1.8" fill="#b8babe"/><rect x="23.1" y="9.0" width="3.0" height="1.8" fill="#b8babe"/><rect x="23.1" y="11.5" width="3.0" height="1.8" fill="#b8babe"/><rect x="23.1" y="14.0" width="3.0" height="1.8" fill="#b8babe"/><rect x="23.1" y="16.5" width="3.0" height="1.8" fill="#b8babe"/><rect x="26.4" y="7.0" width="3.0" height="1.8" fill="#b8babe"/><rect x="26.4" y="9.5" width="3.0" height="1.8" fill="#b8babe"/><rect x="26.4" y="12.0" width="3.0" height="1.8" fill="#b8babe"/><rect x="29.7" y="7.0" width="3.0" height="1.8" fill="#b8babe"/><rect x="29.7" y="9.5" width="3.0" height="1.8" fill="#b8babe"/><rect x="29.7" y="12.0" width="3.0" height="1.8" fill="#b8babe"/><rect x="33.1" y="5.0" width="3.0" height="1.8" fill="#b8babe"/><rect x="33.1" y="7.5" width="3.0" height="1.8" fill="#b8babe"/><rect x="33.1" y="10.0" width="3.0" height="1.8" fill="#b8babe"/><rect x="36.4" y="5.0" width="3.0" height="1.8" fill="#b8babe"/><rect x="36.4" y="7.5" width="3.0" height="1.8" fill="#b8babe"/><rect x="36.4" y="10.0" width="3.0" height="1.8" fill="#b8babe"/><rect x="39.7" y="6.0" width="3.0" height="1.8" fill="#b8babe"/><rect x="39.7" y="8.5" width="3.0" height="1.8" fill="#b8babe"/><rect x="43.0" y="5.0" width="3.0" height="1.8" fill="#b8babe"/><rect x="43.0" y="7.5" width="3.0" height="1.8" fill="#b8babe"/><rect x="43.0" y="10.0" width="3.0" height="1.8" fill="#b8babe"/><rect x="43.0" y="12.5" width="3.0" height="1.8" fill="#b8babe"/><rect x="46.3" y="6.0" width="3.0" height="1.8" fill="#b8babe"/><rect x="46.3" y="8.5" width="3.0" height="1.8" fill="#b8babe"/><rect x="46.3" y="11.0" width="3.0" height="1.8" fill="#b8babe"/><rect x="46.3" y="13.5" width="3.0" height="1.8" fill="#b8babe"/><rect x="46.3" y="5" width="1" height="1.5" fill="#9a9aa0"/><rect x="49.6" y="4.0" width="3.0" height="1.8" fill="#b8babe"/><rect x="49.6" y="6.5" width="3.0" height="1.8" fill="#b8babe"/><rect x="49.6" y="4" width="1" height="1.5" fill="#9a9aa0"/><rect x="52.9" y="5.0" width="3.0" height="1.8" fill="#b8babe"/><rect x="52.9" y="7.5" width="3.0" height="1.8" fill="#b8babe"/><rect x="52.9" y="10.0" width="3.0" height="1.8" fill="#b8babe"/><rect x="56.2" y="6.0" width="3.0" height="1.8" fill="#b8babe"/><rect x="56.2" y="8.5" width="3.0" height="1.8" fill="#b8babe"/><rect x="56.2" y="11.0" width="3.0" height="1.8" fill="#b8babe"/><rect x="56.2" y="3" width="1" height="1.5" fill="#9a9aa0"/><rect x="59.5" y="4.0" width="3.0" height="1.8" fill="#b8babe"/><rect x="59.5" y="6.5" width="3.0" height="1.8" fill="#b8babe"/><rect x="59.5" y="9.0" width="3.0" height="1.8" fill="#b8babe"/></svg>
<svg class="ab" style="left:799.8px;top:276px" width="10" height="11"><rect x="0" y="0" width="9" height="11" fill="#e8ecf0"/><path d="M0 2.5 H5 M0 5.5 H5 M0 8.5 H5" stroke="#48515a" stroke-width="1"/></svg>
<div class="tx" style="left:811.8px;top:274px;font-size:12px;color:#e6e0ea;transform:scaleX(0.86);transform-origin:0 0;letter-spacing:0.6px">Pattern 1</div>
<div class="ab" style="left:930.7px;top:273px;width:94.1px;height:39px;overflow:hidden"><div class="ab" style="left:0;top:15px;width:100%;height:24px;background:#4a2a2f;opacity:0.85"></div><div class="ab" style="left:0;top:0.5px;width:100%;height:14.5px;background:#48515a;border-radius:3px;box-shadow:inset 0 0 0 1px rgba(255,255,255,0.1)"></div></div>
<svg class="ab" style="left:930.7px;top:288px" width="94.1" height="24"><rect x="0.0" y="11.0" width="2.9" height="1.8" fill="#b8babe"/><rect x="0.0" y="13.5" width="2.9" height="1.8" fill="#b8babe"/><rect x="0.0" y="16.0" width="2.9" height="1.8" fill="#b8babe"/><rect x="3.2" y="9.0" width="2.9" height="1.8" fill="#b8babe"/><rect x="3.2" y="11.5" width="2.9" height="1.8" fill="#b8babe"/><rect x="6.5" y="8.0" width="2.9" height="1.8" fill="#b8babe"/><rect x="6.5" y="10.5" width="2.9" height="1.8" fill="#b8babe"/><rect x="6.5" y="13.0" width="2.9" height="1.8" fill="#b8babe"/><rect x="9.7" y="6.0" width="2.9" height="1.8" fill="#b8babe"/><rect x="9.7" y="8.5" width="2.9" height="1.8" fill="#b8babe"/><rect x="13.0" y="7.0" width="2.9" height="1.8" fill="#b8babe"/><rect x="13.0" y="9.5" width="2.9" height="1.8" fill="#b8babe"/><rect x="16.2" y="5.0" width="2.9" height="1.8" fill="#b8babe"/><rect x="16.2" y="7.5" width="2.9" height="1.8" fill="#b8babe"/><rect x="16.2" y="10.0" width="2.9" height="1.8" fill="#b8babe"/><rect x="19.5" y="7.0" width="2.9" height="1.8" fill="#b8babe"/><rect x="19.5" y="9.5" width="2.9" height="1.8" fill="#b8babe"/><rect x="19.5" y="12.0" width="2.9" height="1.8" fill="#b8babe"/><rect x="19.5" y="14.5" width="2.9" height="1.8" fill="#b8babe"/><rect x="22.7" y="6.0" width="2.9" height="1.8" fill="#b8babe"/><rect x="22.7" y="8.5" width="2.9" height="1.8" fill="#b8babe"/><rect x="22.7" y="11.0" width="2.9" height="1.8" fill="#b8babe"/><rect x="26.0" y="5.0" width="2.9" height="1.8" fill="#b8babe"/><rect x="26.0" y="7.5" width="2.9" height="1.8" fill="#b8babe"/><rect x="26.0" y="10.0" width="2.9" height="1.8" fill="#b8babe"/><rect x="29.2" y="4.0" width="2.9" height="1.8" fill="#b8babe"/><rect x="29.2" y="6.5" width="2.9" height="1.8" fill="#b8babe"/><rect x="29.2" y="9.0" width="2.9" height="1.8" fill="#b8babe"/><rect x="29.2" y="5" width="1" height="1.5" fill="#9a9aa0"/><rect x="32.4" y="4.0" width="2.9" height="1.8" fill="#b8babe"/><rect x="32.4" y="6.5" width="2.9" height="1.8" fill="#b8babe"/><rect x="32.4" y="9.0" width="2.9" height="1.8" fill="#b8babe"/><rect x="32.4" y="11.5" width="2.9" height="1.8" fill="#b8babe"/><rect x="35.7" y="4.0" width="2.9" height="1.8" fill="#b8babe"/><rect x="35.7" y="6.5" width="2.9" height="1.8" fill="#b8babe"/><rect x="35.7" y="9.0" width="2.9" height="1.8" fill="#b8babe"/><rect x="38.9" y="5.0" width="2.9" height="1.8" fill="#b8babe"/><rect x="38.9" y="7.5" width="2.9" height="1.8" fill="#b8babe"/><rect x="38.9" y="10.0" width="2.9" height="1.8" fill="#b8babe"/><rect x="42.2" y="7.0" width="2.9" height="1.8" fill="#b8babe"/><rect x="42.2" y="9.5" width="2.9" height="1.8" fill="#b8babe"/><rect x="42.2" y="12.0" width="2.9" height="1.8" fill="#b8babe"/><rect x="42.2" y="14.5" width="2.9" height="1.8" fill="#b8babe"/><rect x="45.4" y="5.0" width="2.9" height="1.8" fill="#b8babe"/><rect x="45.4" y="7.5" width="2.9" height="1.8" fill="#b8babe"/><rect x="45.4" y="5" width="1" height="1.5" fill="#9a9aa0"/><rect x="48.7" y="4.0" width="2.9" height="1.8" fill="#b8babe"/><rect x="48.7" y="6.5" width="2.9" height="1.8" fill="#b8babe"/><rect x="48.7" y="9.0" width="2.9" height="1.8" fill="#b8babe"/><rect x="48.7" y="4" width="1" height="1.5" fill="#9a9aa0"/><rect x="51.9" y="4.0" width="2.9" height="1.8" fill="#b8babe"/><rect x="51.9" y="6.5" width="2.9" height="1.8" fill="#b8babe"/><rect x="51.9" y="9.0" width="2.9" height="1.8" fill="#b8babe"/><rect x="55.2" y="4.0" width="2.9" height="1.8" fill="#b8babe"/><rect x="55.2" y="6.5" width="2.9" height="1.8" fill="#b8babe"/><rect x="55.2" y="9.0" width="2.9" height="1.8" fill="#b8babe"/><rect x="58.4" y="4.0" width="2.9" height="1.8" fill="#b8babe"/><rect x="58.4" y="6.5" width="2.9" height="1.8" fill="#b8babe"/><rect x="58.4" y="9.0" width="2.9" height="1.8" fill="#b8babe"/><rect x="61.7" y="4.0" width="2.9" height="1.8" fill="#b8babe"/><rect x="61.7" y="6.5" width="2.9" height="1.8" fill="#b8babe"/><rect x="61.7" y="9.0" width="2.9" height="1.8" fill="#b8babe"/><rect x="61.7" y="11.5" width="2.9" height="1.8" fill="#b8babe"/><rect x="64.9" y="4.0" width="2.9" height="1.8" fill="#b8babe"/><rect x="64.9" y="6.5" width="2.9" height="1.8" fill="#b8babe"/><rect x="64.9" y="9.0" width="2.9" height="1.8" fill="#b8babe"/><rect x="64.9" y="5" width="1" height="1.5" fill="#9a9aa0"/><rect x="68.1" y="6.0" width="2.9" height="1.8" fill="#b8babe"/><rect x="68.1" y="8.5" width="2.9" height="1.8" fill="#b8babe"/><rect x="68.1" y="11.0" width="2.9" height="1.8" fill="#b8babe"/><rect x="71.4" y="8.0" width="2.9" height="1.8" fill="#b8babe"/><rect x="71.4" y="10.5" width="2.9" height="1.8" fill="#b8babe"/><rect x="71.4" y="13.0" width="2.9" height="1.8" fill="#b8babe"/><rect x="71.4" y="15.5" width="2.9" height="1.8" fill="#b8babe"/><rect x="74.6" y="6.0" width="2.9" height="1.8" fill="#b8babe"/><rect x="74.6" y="8.5" width="2.9" height="1.8" fill="#b8babe"/><rect x="74.6" y="11.0" width="2.9" height="1.8" fill="#b8babe"/><rect x="74.6" y="13.5" width="2.9" height="1.8" fill="#b8babe"/><rect x="74.6" y="5" width="1" height="1.5" fill="#9a9aa0"/><rect x="77.9" y="5.0" width="2.9" height="1.8" fill="#b8babe"/><rect x="77.9" y="7.5" width="2.9" height="1.8" fill="#b8babe"/><rect x="77.9" y="4" width="1" height="1.5" fill="#9a9aa0"/><rect x="81.1" y="4.0" width="2.9" height="1.8" fill="#b8babe"/><rect x="81.1" y="6.5" width="2.9" height="1.8" fill="#b8babe"/><rect x="81.1" y="9.0" width="2.9" height="1.8" fill="#b8babe"/><rect x="84.4" y="4.0" width="2.9" height="1.8" fill="#b8babe"/><rect x="84.4" y="6.5" width="2.9" height="1.8" fill="#b8babe"/><rect x="84.4" y="9.0" width="2.9" height="1.8" fill="#b8babe"/><rect x="84.4" y="3" width="1" height="1.5" fill="#9a9aa0"/><rect x="87.6" y="4.0" width="2.9" height="1.8" fill="#b8babe"/><rect x="87.6" y="6.5" width="2.9" height="1.8" fill="#b8babe"/><rect x="87.6" y="5" width="1" height="1.5" fill="#9a9aa0"/><rect x="90.9" y="4.0" width="2.9" height="1.8" fill="#b8babe"/><rect x="90.9" y="6.5" width="2.9" height="1.8" fill="#b8babe"/><rect x="90.9" y="9.0" width="2.9" height="1.8" fill="#b8babe"/></svg>
<svg class="ab" style="left:933.7px;top:276px" width="10" height="11"><rect x="0" y="0" width="9" height="11" fill="#e8ecf0"/><path d="M0 2.5 H5 M0 5.5 H5 M0 8.5 H5" stroke="#48515a" stroke-width="1"/></svg>
<div class="tx" style="left:945.7px;top:274px;font-size:12px;color:#e6e0ea;transform:scaleX(0.86);transform-origin:0 0;letter-spacing:0.6px">Pattern 8</div>
<div class="ab" style="left:1029.6px;top:273px;width:31.9px;height:39px;overflow:hidden"><div class="ab" style="left:0;top:15px;width:100%;height:24px;background:#4a2a2f;opacity:0.85"></div><div class="ab" style="left:0;top:0.5px;width:100%;height:14.5px;background:#48515a;border-radius:3px;box-shadow:inset 0 0 0 1px rgba(255,255,255,0.1)"></div></div>
<svg class="ab" style="left:1029.6px;top:288px" width="31.9" height="24"><rect x="0.0" y="10.0" width="3.2" height="1.8" fill="#b8babe"/><rect x="0.0" y="12.5" width="3.2" height="1.8" fill="#b8babe"/><rect x="0.0" y="15.0" width="3.2" height="1.8" fill="#b8babe"/><rect x="0.0" y="17.5" width="3.2" height="1.8" fill="#b8babe"/><rect x="3.5" y="10.0" width="3.2" height="1.8" fill="#b8babe"/><rect x="3.5" y="12.5" width="3.2" height="1.8" fill="#b8babe"/><rect x="3.5" y="15.0" width="3.2" height="1.8" fill="#b8babe"/><rect x="7.1" y="9.0" width="3.2" height="1.8" fill="#b8babe"/><rect x="7.1" y="11.5" width="3.2" height="1.8" fill="#b8babe"/><rect x="10.6" y="7.0" width="3.2" height="1.8" fill="#b8babe"/><rect x="10.6" y="9.5" width="3.2" height="1.8" fill="#b8babe"/><rect x="10.6" y="12.0" width="3.2" height="1.8" fill="#b8babe"/><rect x="14.2" y="8.0" width="3.2" height="1.8" fill="#b8babe"/><rect x="14.2" y="10.5" width="3.2" height="1.8" fill="#b8babe"/><rect x="14.2" y="13.0" width="3.2" height="1.8" fill="#b8babe"/><rect x="17.7" y="8.0" width="3.2" height="1.8" fill="#b8babe"/><rect x="17.7" y="10.5" width="3.2" height="1.8" fill="#b8babe"/><rect x="21.3" y="6.0" width="3.2" height="1.8" fill="#b8babe"/><rect x="21.3" y="8.5" width="3.2" height="1.8" fill="#b8babe"/><rect x="21.3" y="11.0" width="3.2" height="1.8" fill="#b8babe"/><rect x="21.3" y="4" width="1" height="1.5" fill="#9a9aa0"/><rect x="24.8" y="4.0" width="3.2" height="1.8" fill="#b8babe"/><rect x="24.8" y="6.5" width="3.2" height="1.8" fill="#b8babe"/><rect x="24.8" y="9.0" width="3.2" height="1.8" fill="#b8babe"/><rect x="24.8" y="2" width="1" height="1.5" fill="#9a9aa0"/><rect x="28.4" y="4.0" width="3.2" height="1.8" fill="#b8babe"/><rect x="28.4" y="6.5" width="3.2" height="1.8" fill="#b8babe"/><rect x="28.4" y="9.0" width="3.2" height="1.8" fill="#b8babe"/><rect x="28.4" y="11.5" width="3.2" height="1.8" fill="#b8babe"/></svg>
<svg class="ab" style="left:1032.6px;top:276px" width="10" height="11"><rect x="0" y="0" width="9" height="11" fill="#e8ecf0"/><path d="M0 2.5 H5 M0 5.5 H5 M0 8.5 H5" stroke="#48515a" stroke-width="1"/></svg>
<div class="tx" style="left:1044.6px;top:274px;font-size:12px;color:#e6e0ea;transform:scaleX(0.86);transform-origin:0 0;letter-spacing:0.6px"><span style="color:#8a9098">P..</span></div>
<div class="ab" style="left:1062.0px;top:273px;width:32.0px;height:39px;overflow:hidden"><div class="ab" style="left:0;top:15px;width:100%;height:24px;background:#4a2a2f;opacity:0.85"></div><div class="ab" style="left:0;top:0.5px;width:100%;height:14.5px;background:#48515a;border-radius:3px;box-shadow:inset 0 0 0 1px rgba(255,255,255,0.1)"></div></div>
<svg class="ab" style="left:1062.0px;top:288px" width="32.0" height="24"><rect x="0.0" y="7.0" width="2.9" height="1.8" fill="#b8babe"/><rect x="0.0" y="9.5" width="2.9" height="1.8" fill="#b8babe"/><rect x="0.0" y="12.0" width="2.9" height="1.8" fill="#b8babe"/><rect x="3.2" y="9.0" width="2.9" height="1.8" fill="#b8babe"/><rect x="3.2" y="11.5" width="2.9" height="1.8" fill="#b8babe"/><rect x="3.2" y="5" width="1" height="1.5" fill="#9a9aa0"/><rect x="6.4" y="11.0" width="2.9" height="1.8" fill="#b8babe"/><rect x="6.4" y="13.5" width="2.9" height="1.8" fill="#b8babe"/><rect x="6.4" y="16.0" width="2.9" height="1.8" fill="#b8babe"/><rect x="9.6" y="10.0" width="2.9" height="1.8" fill="#b8babe"/><rect x="9.6" y="12.5" width="2.9" height="1.8" fill="#b8babe"/><rect x="9.6" y="15.0" width="2.9" height="1.8" fill="#b8babe"/><rect x="12.8" y="9.0" width="2.9" height="1.8" fill="#b8babe"/><rect x="12.8" y="11.5" width="2.9" height="1.8" fill="#b8babe"/><rect x="12.8" y="14.0" width="2.9" height="1.8" fill="#b8babe"/><rect x="12.8" y="16.5" width="2.9" height="1.8" fill="#b8babe"/><rect x="16.0" y="8.0" width="2.9" height="1.8" fill="#b8babe"/><rect x="16.0" y="10.5" width="2.9" height="1.8" fill="#b8babe"/><rect x="16.0" y="13.0" width="2.9" height="1.8" fill="#b8babe"/><rect x="16.0" y="4" width="1" height="1.5" fill="#9a9aa0"/><rect x="19.2" y="6.0" width="2.9" height="1.8" fill="#b8babe"/><rect x="19.2" y="8.5" width="2.9" height="1.8" fill="#b8babe"/><rect x="22.4" y="6.0" width="2.9" height="1.8" fill="#b8babe"/><rect x="22.4" y="8.5" width="2.9" height="1.8" fill="#b8babe"/><rect x="22.4" y="11.0" width="2.9" height="1.8" fill="#b8babe"/><rect x="25.6" y="7.0" width="2.9" height="1.8" fill="#b8babe"/><rect x="25.6" y="9.5" width="2.9" height="1.8" fill="#b8babe"/><rect x="25.6" y="12.0" width="2.9" height="1.8" fill="#b8babe"/><rect x="28.8" y="6.0" width="2.9" height="1.8" fill="#b8babe"/><rect x="28.8" y="8.5" width="2.9" height="1.8" fill="#b8babe"/><rect x="28.8" y="11.0" width="2.9" height="1.8" fill="#b8babe"/><rect x="28.8" y="13.5" width="2.9" height="1.8" fill="#b8babe"/></svg>
<svg class="ab" style="left:1065px;top:276px" width="10" height="11"><rect x="0" y="0" width="9" height="11" fill="#e8ecf0"/><path d="M0 2.5 H5 M0 5.5 H5 M0 8.5 H5" stroke="#48515a" stroke-width="1"/></svg>
<div class="tx" style="left:1077.0px;top:274px;font-size:12px;color:#e6e0ea;transform:scaleX(0.86);transform-origin:0 0;letter-spacing:0.6px"><span style="color:#8a9098">P..</span></div>
<div class="ab" style="left:1094.5px;top:273px;width:32.5px;height:39px;overflow:hidden"><div class="ab" style="left:0;top:15px;width:100%;height:24px;background:#4a2a2f;opacity:0.85"></div><div class="ab" style="left:0;top:0.5px;width:100%;height:14.5px;background:#48515a;border-radius:3px;box-shadow:inset 0 0 0 1px rgba(255,255,255,0.1)"></div></div>
<svg class="ab" style="left:1094.5px;top:288px" width="32.5" height="24"><rect x="0.0" y="11.0" width="2.9" height="1.8" fill="#b8babe"/><rect x="0.0" y="13.5" width="2.9" height="1.8" fill="#b8babe"/><rect x="0.0" y="5" width="1" height="1.5" fill="#9a9aa0"/><rect x="3.2" y="13.0" width="2.9" height="1.8" fill="#b8babe"/><rect x="3.2" y="15.5" width="2.9" height="1.8" fill="#b8babe"/><rect x="3.2" y="18.0" width="2.9" height="1.8" fill="#b8babe"/><rect x="3.2" y="20.5" width="2.9" height="1.8" fill="#b8babe"/><rect x="6.5" y="14.0" width="2.9" height="1.8" fill="#b8babe"/><rect x="6.5" y="16.5" width="2.9" height="1.8" fill="#b8babe"/><rect x="6.5" y="19.0" width="2.9" height="1.8" fill="#b8babe"/><rect x="9.8" y="14.0" width="2.9" height="1.8" fill="#b8babe"/><rect x="9.8" y="16.5" width="2.9" height="1.8" fill="#b8babe"/><rect x="9.8" y="19.0" width="2.9" height="1.8" fill="#b8babe"/><rect x="13.0" y="14.0" width="2.9" height="1.8" fill="#b8babe"/><rect x="13.0" y="16.5" width="2.9" height="1.8" fill="#b8babe"/><rect x="13.0" y="19.0" width="2.9" height="1.8" fill="#b8babe"/><rect x="16.2" y="13.0" width="2.9" height="1.8" fill="#b8babe"/><rect x="16.2" y="15.5" width="2.9" height="1.8" fill="#b8babe"/><rect x="16.2" y="18.0" width="2.9" height="1.8" fill="#b8babe"/><rect x="16.2" y="2" width="1" height="1.5" fill="#9a9aa0"/><rect x="19.5" y="13.0" width="2.9" height="1.8" fill="#b8babe"/><rect x="19.5" y="15.5" width="2.9" height="1.8" fill="#b8babe"/><rect x="22.8" y="14.0" width="2.9" height="1.8" fill="#b8babe"/><rect x="22.8" y="16.5" width="2.9" height="1.8" fill="#b8babe"/><rect x="26.0" y="13.0" width="2.9" height="1.8" fill="#b8babe"/><rect x="26.0" y="15.5" width="2.9" height="1.8" fill="#b8babe"/><rect x="29.2" y="12.0" width="2.9" height="1.8" fill="#b8babe"/><rect x="29.2" y="14.5" width="2.9" height="1.8" fill="#b8babe"/><rect x="29.2" y="17.0" width="2.9" height="1.8" fill="#b8babe"/><rect x="29.2" y="4" width="1" height="1.5" fill="#9a9aa0"/></svg>
<svg class="ab" style="left:1097.5px;top:276px" width="10" height="11"><rect x="0" y="0" width="9" height="11" fill="#e8ecf0"/><path d="M0 2.5 H5 M0 5.5 H5 M0 8.5 H5" stroke="#48515a" stroke-width="1"/></svg>
<div class="tx" style="left:1109.5px;top:274px;font-size:12px;color:#e6e0ea;transform:scaleX(0.86);transform-origin:0 0;letter-spacing:0.6px"><span style="color:#8a9098">P..</span></div>
<div class="ab" style="left:1127.5px;top:273px;width:33.5px;height:39px;overflow:hidden"><div class="ab" style="left:0;top:15px;width:100%;height:24px;background:#4a2a2f;opacity:0.85"></div><div class="ab" style="left:0;top:0.5px;width:100%;height:14.5px;background:#48515a;border-radius:3px;box-shadow:inset 0 0 0 1px rgba(255,255,255,0.1)"></div></div>
<svg class="ab" style="left:1127.5px;top:288px" width="33.5" height="24"><rect x="0.0" y="11.0" width="3.0" height="1.8" fill="#b8babe"/><rect x="0.0" y="13.5" width="3.0" height="1.8" fill="#b8babe"/><rect x="0.0" y="16.0" width="3.0" height="1.8" fill="#b8babe"/><rect x="3.4" y="12.0" width="3.0" height="1.8" fill="#b8babe"/><rect x="3.4" y="14.5" width="3.0" height="1.8" fill="#b8babe"/><rect x="3.4" y="17.0" width="3.0" height="1.8" fill="#b8babe"/><rect x="6.7" y="13.0" width="3.0" height="1.8" fill="#b8babe"/><rect x="6.7" y="15.5" width="3.0" height="1.8" fill="#b8babe"/><rect x="6.7" y="18.0" width="3.0" height="1.8" fill="#b8babe"/><rect x="6.7" y="5" width="1" height="1.5" fill="#9a9aa0"/><rect x="10.1" y="12.0" width="3.0" height="1.8" fill="#b8babe"/><rect x="10.1" y="14.5" width="3.0" height="1.8" fill="#b8babe"/><rect x="10.1" y="17.0" width="3.0" height="1.8" fill="#b8babe"/><rect x="13.4" y="11.0" width="3.0" height="1.8" fill="#b8babe"/><rect x="13.4" y="13.5" width="3.0" height="1.8" fill="#b8babe"/><rect x="13.4" y="16.0" width="3.0" height="1.8" fill="#b8babe"/><rect x="16.8" y="13.0" width="3.0" height="1.8" fill="#b8babe"/><rect x="16.8" y="15.5" width="3.0" height="1.8" fill="#b8babe"/><rect x="16.8" y="5" width="1" height="1.5" fill="#9a9aa0"/><rect x="20.1" y="12.0" width="3.0" height="1.8" fill="#b8babe"/><rect x="20.1" y="14.5" width="3.0" height="1.8" fill="#b8babe"/><rect x="20.1" y="3" width="1" height="1.5" fill="#9a9aa0"/><rect x="23.4" y="10.0" width="3.0" height="1.8" fill="#b8babe"/><rect x="23.4" y="12.5" width="3.0" height="1.8" fill="#b8babe"/><rect x="23.4" y="15.0" width="3.0" height="1.8" fill="#b8babe"/><rect x="26.8" y="11.0" width="3.0" height="1.8" fill="#b8babe"/><rect x="26.8" y="13.5" width="3.0" height="1.8" fill="#b8babe"/><rect x="26.8" y="16.0" width="3.0" height="1.8" fill="#b8babe"/><rect x="26.8" y="3" width="1" height="1.5" fill="#9a9aa0"/><rect x="30.1" y="13.0" width="3.0" height="1.8" fill="#b8babe"/><rect x="30.1" y="15.5" width="3.0" height="1.8" fill="#b8babe"/></svg>
<svg class="ab" style="left:1130.5px;top:276px" width="10" height="11"><rect x="0" y="0" width="9" height="11" fill="#e8ecf0"/><path d="M0 2.5 H5 M0 5.5 H5 M0 8.5 H5" stroke="#48515a" stroke-width="1"/></svg>
<div class="tx" style="left:1142.5px;top:274px;font-size:12px;color:#e6e0ea;transform:scaleX(0.86);transform-origin:0 0;letter-spacing:0.6px"><span style="color:#8a9098">P..</span></div>
<div class="ab" style="left:1227.0px;top:273px;width:16.5px;height:39px;overflow:hidden"><div class="ab" style="left:0;top:15px;width:100%;height:24px;background:#4a2a2f;opacity:0.85"></div><div class="ab" style="left:0;top:0.5px;width:100%;height:14.5px;background:#48515a;border-radius:3px;box-shadow:inset 0 0 0 1px rgba(255,255,255,0.1)"></div></div>
<svg class="ab" style="left:1227.0px;top:288px" width="16.5" height="24"><rect x="0.0" y="13" width="1.2" height="1.2" fill="#9a9aa0" opacity="0.7"/><rect x="3.3" y="20" width="1.2" height="1.2" fill="#9a9aa0" opacity="0.7"/><rect x="6.6" y="11" width="1.2" height="1.2" fill="#9a9aa0" opacity="0.7"/><rect x="9.9" y="5" width="1.2" height="1.2" fill="#9a9aa0" opacity="0.7"/><rect x="13.2" y="15" width="1.2" height="1.2" fill="#9a9aa0" opacity="0.7"/><rect x="0" y="12" width="16.5" height="1" fill="#9a9aa0" opacity="0.6"/></svg>
<svg class="ab" style="left:1230px;top:276px" width="10" height="11"><rect x="0" y="0" width="9" height="11" fill="#e8ecf0"/><path d="M0 2.5 H5 M0 5.5 H5 M0 8.5 H5" stroke="#48515a" stroke-width="1"/></svg>
<div class="ab" style="left:1243.8px;top:273px;width:16.7px;height:39px;overflow:hidden"><div class="ab" style="left:0;top:15px;width:100%;height:24px;background:#4a2a2f;opacity:0.85"></div><div class="ab" style="left:0;top:0.5px;width:100%;height:14.5px;background:#48515a;border-radius:3px;box-shadow:inset 0 0 0 1px rgba(255,255,255,0.1)"></div></div>
<svg class="ab" style="left:1243.8px;top:288px" width="16.7" height="24"><rect x="0.0" y="6" width="1.2" height="1.2" fill="#9a9aa0" opacity="0.7"/><rect x="3.3" y="12" width="1.2" height="1.2" fill="#9a9aa0" opacity="0.7"/><rect x="6.7" y="16" width="1.2" height="1.2" fill="#9a9aa0" opacity="0.7"/><rect x="10.0" y="9" width="1.2" height="1.2" fill="#9a9aa0" opacity="0.7"/><rect x="13.4" y="18" width="1.2" height="1.2" fill="#9a9aa0" opacity="0.7"/><rect x="0" y="12" width="16.7" height="1" fill="#9a9aa0" opacity="0.6"/></svg>
<svg class="ab" style="left:1246.8px;top:276px" width="10" height="11"><rect x="0" y="0" width="9" height="11" fill="#e8ecf0"/><path d="M0 2.5 H5 M0 5.5 H5 M0 8.5 H5" stroke="#48515a" stroke-width="1"/></svg>
<div class="ab" style="left:629.9px;top:313px;width:66.0px;height:39px;overflow:hidden"><div class="ab" style="left:0;top:15px;width:100%;height:24px;background:#c6c9b1"></div></div>
<div class="ab" style="left:629.9px;top:313px;width:66.0px;height:15px;background:#4a3e36"></div>
<div class="ab" style="left:630.2px;top:313.5px;width:15.1px;height:14.5px;background:#5f6652;border-radius:3px;box-shadow:inset 0 0 0 1px #6c735e"></div>
<svg class="ab" style="left:632.9px;top:316px" width="12" height="10"><rect x="0.5" y="1" width="1" height="8" fill="#8a8cc0"/><path d="M1.5 1 L4.2 4 L5.8 2 L7 4.2 L10.5 5 L7 5.8 L5.8 8 L4.2 6 L1.5 9Z" fill="#f0ecd8"/></svg>
<div class="ab" style="left:646.7px;top:313.5px;width:15.1px;height:14.5px;background:#5f6652;border-radius:3px;box-shadow:inset 0 0 0 1px #6c735e"></div>
<svg class="ab" style="left:649.4px;top:316px" width="12" height="10"><rect x="0.5" y="1" width="1" height="8" fill="#8a8cc0"/><path d="M1.5 1 L4.2 4 L5.8 2 L7 4.2 L10.5 5 L7 5.8 L5.8 8 L4.2 6 L1.5 9Z" fill="#f0ecd8"/></svg>
<div class="ab" style="left:663.2px;top:313.5px;width:15.1px;height:14.5px;background:#5f6652;border-radius:3px;box-shadow:inset 0 0 0 1px #6c735e"></div>
<svg class="ab" style="left:665.9px;top:316px" width="12" height="10"><rect x="0.5" y="1" width="1" height="8" fill="#8a8cc0"/><path d="M1.5 1 L4.2 4 L5.8 2 L7 4.2 L10.5 5 L7 5.8 L5.8 8 L4.2 6 L1.5 9Z" fill="#f0ecd8"/></svg>
<div class="ab" style="left:679.7px;top:313.5px;width:15.1px;height:14.5px;background:#5f6652;border-radius:3px;box-shadow:inset 0 0 0 1px #6c735e"></div>
<svg class="ab" style="left:682.4px;top:316px" width="12" height="10"><rect x="0.5" y="1" width="1" height="8" fill="#8a8cc0"/><path d="M1.5 1 L4.2 4 L5.8 2 L7 4.2 L10.5 5 L7 5.8 L5.8 8 L4.2 6 L1.5 9Z" fill="#f0ecd8"/></svg>
<div class="ab" style="left:731.7px;top:313px;width:29.6px;height:39px;overflow:hidden"><div class="ab" style="left:0;top:15px;width:100%;height:24px;background:#c6c9b1"></div></div>
<div class="ab" style="left:731.7px;top:313px;width:29.6px;height:15px;background:#4a3e36"></div>
<div class="ab" style="left:732.0px;top:313.5px;width:13.4px;height:14.5px;background:#5f6652;border-radius:3px;box-shadow:inset 0 0 0 1px #6c735e"></div>
<svg class="ab" style="left:734.7px;top:316px" width="12" height="10"><rect x="0.5" y="1" width="1" height="8" fill="#8a8cc0"/><path d="M1.5 1 L4.2 4 L5.8 2 L7 4.2 L10.5 5 L7 5.8 L5.8 8 L4.2 6 L1.5 9Z" fill="#f0ecd8"/></svg>
<div class="ab" style="left:746.8px;top:313.5px;width:13.4px;height:14.5px;background:#5f6652;border-radius:3px;box-shadow:inset 0 0 0 1px #6c735e"></div>
<svg class="ab" style="left:749.5px;top:316px" width="12" height="10"><rect x="0.5" y="1" width="1" height="8" fill="#8a8cc0"/><path d="M1.5 1 L4.2 4 L5.8 2 L7 4.2 L10.5 5 L7 5.8 L5.8 8 L4.2 6 L1.5 9Z" fill="#f0ecd8"/></svg>
<div class="ab" style="left:764.7px;top:313px;width:29.0px;height:39px;overflow:hidden"><div class="ab" style="left:0;top:15px;width:100%;height:24px;background:#c6c9b1"></div></div>
<div class="ab" style="left:764.7px;top:313px;width:29.0px;height:15px;background:#4a3e36"></div>
<div class="ab" style="left:765.0px;top:313.5px;width:13.1px;height:14.5px;background:#5f6652;border-radius:3px;box-shadow:inset 0 0 0 1px #6c735e"></div>
<svg class="ab" style="left:767.7px;top:316px" width="12" height="10"><rect x="0.5" y="1" width="1" height="8" fill="#8a8cc0"/><path d="M1.5 1 L4.2 4 L5.8 2 L7 4.2 L10.5 5 L7 5.8 L5.8 8 L4.2 6 L1.5 9Z" fill="#f0ecd8"/></svg>
<div class="ab" style="left:779.5px;top:313.5px;width:13.1px;height:14.5px;background:#5f6652;border-radius:3px;box-shadow:inset 0 0 0 1px #6c735e"></div>
<svg class="ab" style="left:782.2px;top:316px" width="12" height="10"><rect x="0.5" y="1" width="1" height="8" fill="#8a8cc0"/><path d="M1.5 1 L4.2 4 L5.8 2 L7 4.2 L10.5 5 L7 5.8 L5.8 8 L4.2 6 L1.5 9Z" fill="#f0ecd8"/></svg>
<div class="ab" style="left:797.6px;top:313px;width:62.5px;height:39px;overflow:hidden"><div class="ab" style="left:0;top:15px;width:100%;height:24px;background:#c6c9b1"></div></div>
<div class="ab" style="left:797.6px;top:313px;width:62.5px;height:15px;background:#4a3e36"></div>
<div class="ab" style="left:797.9px;top:313.5px;width:14.2px;height:14.5px;background:#5f6652;border-radius:3px;box-shadow:inset 0 0 0 1px #6c735e"></div>
<svg class="ab" style="left:800.6px;top:316px" width="12" height="10"><rect x="0.5" y="1" width="1" height="8" fill="#8a8cc0"/><path d="M1.5 1 L4.2 4 L5.8 2 L7 4.2 L10.5 5 L7 5.8 L5.8 8 L4.2 6 L1.5 9Z" fill="#f0ecd8"/></svg>
<div class="ab" style="left:813.5px;top:313.5px;width:14.2px;height:14.5px;background:#5f6652;border-radius:3px;box-shadow:inset 0 0 0 1px #6c735e"></div>
<svg class="ab" style="left:816.225px;top:316px" width="12" height="10"><rect x="0.5" y="1" width="1" height="8" fill="#8a8cc0"/><path d="M1.5 1 L4.2 4 L5.8 2 L7 4.2 L10.5 5 L7 5.8 L5.8 8 L4.2 6 L1.5 9Z" fill="#f0ecd8"/></svg>
<div class="ab" style="left:829.1px;top:313.5px;width:14.2px;height:14.5px;background:#5f6652;border-radius:3px;box-shadow:inset 0 0 0 1px #6c735e"></div>
<svg class="ab" style="left:831.85px;top:316px" width="12" height="10"><rect x="0.5" y="1" width="1" height="8" fill="#8a8cc0"/><path d="M1.5 1 L4.2 4 L5.8 2 L7 4.2 L10.5 5 L7 5.8 L5.8 8 L4.2 6 L1.5 9Z" fill="#f0ecd8"/></svg>
<div class="ab" style="left:844.8px;top:313.5px;width:14.2px;height:14.5px;background:#5f6652;border-radius:3px;box-shadow:inset 0 0 0 1px #6c735e"></div>
<svg class="ab" style="left:847.475px;top:316px" width="12" height="10"><rect x="0.5" y="1" width="1" height="8" fill="#8a8cc0"/><path d="M1.5 1 L4.2 4 L5.8 2 L7 4.2 L10.5 5 L7 5.8 L5.8 8 L4.2 6 L1.5 9Z" fill="#f0ecd8"/></svg>
<div class="ab" style="left:864.0px;top:313px;width:62.0px;height:39px;overflow:hidden"><div class="ab" style="left:0;top:15px;width:100%;height:24px;background:#c6c9b1"></div></div>
<div class="ab" style="left:864.0px;top:313px;width:62.0px;height:15px;background:#4a3e36"></div>
<div class="ab" style="left:864.3px;top:313.5px;width:14.1px;height:14.5px;background:#5f6652;border-radius:3px;box-shadow:inset 0 0 0 1px #6c735e"></div>
<svg class="ab" style="left:867.0px;top:316px" width="12" height="10"><rect x="0.5" y="1" width="1" height="8" fill="#8a8cc0"/><path d="M1.5 1 L4.2 4 L5.8 2 L7 4.2 L10.5 5 L7 5.8 L5.8 8 L4.2 6 L1.5 9Z" fill="#f0ecd8"/></svg>
<div class="ab" style="left:879.8px;top:313.5px;width:14.1px;height:14.5px;background:#5f6652;border-radius:3px;box-shadow:inset 0 0 0 1px #6c735e"></div>
<svg class="ab" style="left:882.5px;top:316px" width="12" height="10"><rect x="0.5" y="1" width="1" height="8" fill="#8a8cc0"/><path d="M1.5 1 L4.2 4 L5.8 2 L7 4.2 L10.5 5 L7 5.8 L5.8 8 L4.2 6 L1.5 9Z" fill="#f0ecd8"/></svg>
<div class="ab" style="left:895.3px;top:313.5px;width:14.1px;height:14.5px;background:#5f6652;border-radius:3px;box-shadow:inset 0 0 0 1px #6c735e"></div>
<svg class="ab" style="left:898.0px;top:316px" width="12" height="10"><rect x="0.5" y="1" width="1" height="8" fill="#8a8cc0"/><path d="M1.5 1 L4.2 4 L5.8 2 L7 4.2 L10.5 5 L7 5.8 L5.8 8 L4.2 6 L1.5 9Z" fill="#f0ecd8"/></svg>
<div class="ab" style="left:910.8px;top:313.5px;width:14.1px;height:14.5px;background:#5f6652;border-radius:3px;box-shadow:inset 0 0 0 1px #6c735e"></div>
<svg class="ab" style="left:913.5px;top:316px" width="12" height="10"><rect x="0.5" y="1" width="1" height="8" fill="#8a8cc0"/><path d="M1.5 1 L4.2 4 L5.8 2 L7 4.2 L10.5 5 L7 5.8 L5.8 8 L4.2 6 L1.5 9Z" fill="#f0ecd8"/></svg>
<div class="ab" style="left:930.0px;top:313px;width:29.2px;height:39px;overflow:hidden"><div class="ab" style="left:0;top:15px;width:100%;height:24px;background:#c6c9b1"></div></div>
<div class="ab" style="left:930.0px;top:313px;width:29.2px;height:15px;background:#4a3e36"></div>
<div class="ab" style="left:930.3px;top:313.5px;width:13.2px;height:14.5px;background:#5f6652;border-radius:3px;box-shadow:inset 0 0 0 1px #6c735e"></div>
<svg class="ab" style="left:933.0px;top:316px" width="12" height="10"><rect x="0.5" y="1" width="1" height="8" fill="#8a8cc0"/><path d="M1.5 1 L4.2 4 L5.8 2 L7 4.2 L10.5 5 L7 5.8 L5.8 8 L4.2 6 L1.5 9Z" fill="#f0ecd8"/></svg>
<div class="ab" style="left:944.9px;top:313.5px;width:13.2px;height:14.5px;background:#5f6652;border-radius:3px;box-shadow:inset 0 0 0 1px #6c735e"></div>
<svg class="ab" style="left:947.6px;top:316px" width="12" height="10"><rect x="0.5" y="1" width="1" height="8" fill="#8a8cc0"/><path d="M1.5 1 L4.2 4 L5.8 2 L7 4.2 L10.5 5 L7 5.8 L5.8 8 L4.2 6 L1.5 9Z" fill="#f0ecd8"/></svg>
<div class="ab" style="left:963.2px;top:313px;width:61.6px;height:39px;overflow:hidden"><div class="ab" style="left:0;top:15px;width:100%;height:24px;background:#c6c9b1"></div></div>
<div class="ab" style="left:963.2px;top:313px;width:61.6px;height:15px;background:#4a3e36"></div>
<div class="ab" style="left:963.5px;top:313.5px;width:14.0px;height:14.5px;background:#5f6652;border-radius:3px;box-shadow:inset 0 0 0 1px #6c735e"></div>
<svg class="ab" style="left:966.2px;top:316px" width="12" height="10"><rect x="0.5" y="1" width="1" height="8" fill="#8a8cc0"/><path d="M1.5 1 L4.2 4 L5.8 2 L7 4.2 L10.5 5 L7 5.8 L5.8 8 L4.2 6 L1.5 9Z" fill="#f0ecd8"/></svg>
<div class="ab" style="left:978.9px;top:313.5px;width:14.0px;height:14.5px;background:#5f6652;border-radius:3px;box-shadow:inset 0 0 0 1px #6c735e"></div>
<svg class="ab" style="left:981.6px;top:316px" width="12" height="10"><rect x="0.5" y="1" width="1" height="8" fill="#8a8cc0"/><path d="M1.5 1 L4.2 4 L5.8 2 L7 4.2 L10.5 5 L7 5.8 L5.8 8 L4.2 6 L1.5 9Z" fill="#f0ecd8"/></svg>
<div class="ab" style="left:994.3px;top:313.5px;width:14.0px;height:14.5px;background:#5f6652;border-radius:3px;box-shadow:inset 0 0 0 1px #6c735e"></div>
<svg class="ab" style="left:997.0px;top:316px" width="12" height="10"><rect x="0.5" y="1" width="1" height="8" fill="#8a8cc0"/><path d="M1.5 1 L4.2 4 L5.8 2 L7 4.2 L10.5 5 L7 5.8 L5.8 8 L4.2 6 L1.5 9Z" fill="#f0ecd8"/></svg>
<div class="ab" style="left:1009.7px;top:313.5px;width:14.0px;height:14.5px;background:#5f6652;border-radius:3px;box-shadow:inset 0 0 0 1px #6c735e"></div>
<svg class="ab" style="left:1012.4px;top:316px" width="12" height="10"><rect x="0.5" y="1" width="1" height="8" fill="#8a8cc0"/><path d="M1.5 1 L4.2 4 L5.8 2 L7 4.2 L10.5 5 L7 5.8 L5.8 8 L4.2 6 L1.5 9Z" fill="#f0ecd8"/></svg>
<div class="ab" style="left:1028.8px;top:313px;width:128.2px;height:39px;overflow:hidden"><div class="ab" style="left:0;top:15px;width:100%;height:24px;background:#c6c9b1"></div></div>
<div class="ab" style="left:1028.8px;top:313px;width:128.2px;height:15px;background:#4a3e36"></div>
<div class="ab" style="left:1029.1px;top:313.5px;width:14.6px;height:14.5px;background:#5f6652;border-radius:3px;box-shadow:inset 0 0 0 1px #6c735e"></div>
<svg class="ab" style="left:1031.8px;top:316px" width="12" height="10"><rect x="0.5" y="1" width="1" height="8" fill="#8a8cc0"/><path d="M1.5 1 L4.2 4 L5.8 2 L7 4.2 L10.5 5 L7 5.8 L5.8 8 L4.2 6 L1.5 9Z" fill="#f0ecd8"/></svg>
<div class="ab" style="left:1045.1px;top:313.5px;width:14.6px;height:14.5px;background:#5f6652;border-radius:3px;box-shadow:inset 0 0 0 1px #6c735e"></div>
<svg class="ab" style="left:1047.825px;top:316px" width="12" height="10"><rect x="0.5" y="1" width="1" height="8" fill="#8a8cc0"/><path d="M1.5 1 L4.2 4 L5.8 2 L7 4.2 L10.5 5 L7 5.8 L5.8 8 L4.2 6 L1.5 9Z" fill="#f0ecd8"/></svg>
<div class="ab" style="left:1061.1px;top:313.5px;width:14.6px;height:14.5px;background:#5f6652;border-radius:3px;box-shadow:inset 0 0 0 1px #6c735e"></div>
<svg class="ab" style="left:1063.85px;top:316px" width="12" height="10"><rect x="0.5" y="1" width="1" height="8" fill="#8a8cc0"/><path d="M1.5 1 L4.2 4 L5.8 2 L7 4.2 L10.5 5 L7 5.8 L5.8 8 L4.2 6 L1.5 9Z" fill="#f0ecd8"/></svg>
<div class="ab" style="left:1077.2px;top:313.5px;width:14.6px;height:14.5px;background:#5f6652;border-radius:3px;box-shadow:inset 0 0 0 1px #6c735e"></div>
<svg class="ab" style="left:1079.875px;top:316px" width="12" height="10"><rect x="0.5" y="1" width="1" height="8" fill="#8a8cc0"/><path d="M1.5 1 L4.2 4 L5.8 2 L7 4.2 L10.5 5 L7 5.8 L5.8 8 L4.2 6 L1.5 9Z" fill="#f0ecd8"/></svg>
<div class="ab" style="left:1093.2px;top:313.5px;width:14.6px;height:14.5px;background:#5f6652;border-radius:3px;box-shadow:inset 0 0 0 1px #6c735e"></div>
<svg class="ab" style="left:1095.9px;top:316px" width="12" height="10"><rect x="0.5" y="1" width="1" height="8" fill="#8a8cc0"/><path d="M1.5 1 L4.2 4 L5.8 2 L7 4.2 L10.5 5 L7 5.8 L5.8 8 L4.2 6 L1.5 9Z" fill="#f0ecd8"/></svg>
<div class="ab" style="left:1109.2px;top:313.5px;width:14.6px;height:14.5px;background:#5f6652;border-radius:3px;box-shadow:inset 0 0 0 1px #6c735e"></div>
<svg class="ab" style="left:1111.925px;top:316px" width="12" height="10"><rect x="0.5" y="1" width="1" height="8" fill="#8a8cc0"/><path d="M1.5 1 L4.2 4 L5.8 2 L7 4.2 L10.5 5 L7 5.8 L5.8 8 L4.2 6 L1.5 9Z" fill="#f0ecd8"/></svg>
<div class="ab" style="left:1125.2px;top:313.5px;width:14.6px;height:14.5px;background:#5f6652;border-radius:3px;box-shadow:inset 0 0 0 1px #6c735e"></div>
<svg class="ab" style="left:1127.95px;top:316px" width="12" height="10"><rect x="0.5" y="1" width="1" height="8" fill="#8a8cc0"/><path d="M1.5 1 L4.2 4 L5.8 2 L7 4.2 L10.5 5 L7 5.8 L5.8 8 L4.2 6 L1.5 9Z" fill="#f0ecd8"/></svg>
<div class="ab" style="left:1141.3px;top:313.5px;width:14.6px;height:14.5px;background:#5f6652;border-radius:3px;box-shadow:inset 0 0 0 1px #6c735e"></div>
<svg class="ab" style="left:1143.975px;top:316px" width="12" height="10"><rect x="0.5" y="1" width="1" height="8" fill="#8a8cc0"/><path d="M1.5 1 L4.2 4 L5.8 2 L7 4.2 L10.5 5 L7 5.8 L5.8 8 L4.2 6 L1.5 9Z" fill="#f0ecd8"/></svg>
<div class="ab" style="left:1161.0px;top:313px;width:62.0px;height:39px;overflow:hidden"><div class="ab" style="left:0;top:15px;width:100%;height:24px;background:#c6c9b1"></div></div>
<div class="ab" style="left:1161.0px;top:313px;width:62.0px;height:15px;background:#4a3e36"></div>
<div class="ab" style="left:1161.3px;top:313.5px;width:14.1px;height:14.5px;background:#5f6652;border-radius:3px;box-shadow:inset 0 0 0 1px #6c735e"></div>
<svg class="ab" style="left:1164.0px;top:316px" width="12" height="10"><rect x="0.5" y="1" width="1" height="8" fill="#8a8cc0"/><path d="M1.5 1 L4.2 4 L5.8 2 L7 4.2 L10.5 5 L7 5.8 L5.8 8 L4.2 6 L1.5 9Z" fill="#f0ecd8"/></svg>
<div class="ab" style="left:1176.8px;top:313.5px;width:14.1px;height:14.5px;background:#5f6652;border-radius:3px;box-shadow:inset 0 0 0 1px #6c735e"></div>
<svg class="ab" style="left:1179.5px;top:316px" width="12" height="10"><rect x="0.5" y="1" width="1" height="8" fill="#8a8cc0"/><path d="M1.5 1 L4.2 4 L5.8 2 L7 4.2 L10.5 5 L7 5.8 L5.8 8 L4.2 6 L1.5 9Z" fill="#f0ecd8"/></svg>
<div class="ab" style="left:1192.3px;top:313.5px;width:14.1px;height:14.5px;background:#5f6652;border-radius:3px;box-shadow:inset 0 0 0 1px #6c735e"></div>
<svg class="ab" style="left:1195.0px;top:316px" width="12" height="10"><rect x="0.5" y="1" width="1" height="8" fill="#8a8cc0"/><path d="M1.5 1 L4.2 4 L5.8 2 L7 4.2 L10.5 5 L7 5.8 L5.8 8 L4.2 6 L1.5 9Z" fill="#f0ecd8"/></svg>
<div class="ab" style="left:1207.8px;top:313.5px;width:14.1px;height:14.5px;background:#5f6652;border-radius:3px;box-shadow:inset 0 0 0 1px #6c735e"></div>
<svg class="ab" style="left:1210.5px;top:316px" width="12" height="10"><rect x="0.5" y="1" width="1" height="8" fill="#8a8cc0"/><path d="M1.5 1 L4.2 4 L5.8 2 L7 4.2 L10.5 5 L7 5.8 L5.8 8 L4.2 6 L1.5 9Z" fill="#f0ecd8"/></svg>
<div class="ab" style="left:1227.0px;top:313px;width:29.2px;height:39px;overflow:hidden"><div class="ab" style="left:0;top:15px;width:100%;height:24px;background:#c6c9b1"></div></div>
<div class="ab" style="left:1227.0px;top:313px;width:29.2px;height:15px;background:#4a3e36"></div>
<div class="ab" style="left:1227.3px;top:313.5px;width:13.2px;height:14.5px;background:#5f6652;border-radius:3px;box-shadow:inset 0 0 0 1px #6c735e"></div>
<svg class="ab" style="left:1230.0px;top:316px" width="12" height="10"><rect x="0.5" y="1" width="1" height="8" fill="#8a8cc0"/><path d="M1.5 1 L4.2 4 L5.8 2 L7 4.2 L10.5 5 L7 5.8 L5.8 8 L4.2 6 L1.5 9Z" fill="#f0ecd8"/></svg>
<div class="ab" style="left:1241.9px;top:313.5px;width:13.2px;height:14.5px;background:#5f6652;border-radius:3px;box-shadow:inset 0 0 0 1px #6c735e"></div>
<svg class="ab" style="left:1244.6px;top:316px" width="12" height="10"><rect x="0.5" y="1" width="1" height="8" fill="#8a8cc0"/><path d="M1.5 1 L4.2 4 L5.8 2 L7 4.2 L10.5 5 L7 5.8 L5.8 8 L4.2 6 L1.5 9Z" fill="#f0ecd8"/></svg>
<div class="ab" style="left:629.9px;top:353px;width:16.0px;height:39px;overflow:hidden"><div class="ab" style="left:0;top:15px;width:100%;height:24px;background:#58404a;opacity:0.85"></div><div class="ab" style="left:0;top:0.5px;width:100%;height:14.5px;background:#4e5787;border-radius:3px;box-shadow:inset 0 0 0 1px rgba(255,255,255,0.1)"></div></div>
<svg class="ab" style="left:629.9px;top:368px" width="16.0" height="24"><path d="M0 2 Q12 2 14 23" fill="none" stroke="#dcd4e4" stroke-width="1.3"/></svg>
<svg class="ab" style="left:632.9px;top:356px" width="12" height="11"><circle cx="2.5" cy="8.5" r="1.8" fill="none" stroke="#e0e4f0" stroke-width="1.2"/><circle cx="9.5" cy="2.5" r="1.8" fill="none" stroke="#e0e4f0" stroke-width="1.2"/><path d="M3.8 7.2 L8.2 3.8" stroke="#e0e4f0" stroke-width="1.2"/></svg>
<div class="ab" style="left:662.5px;top:353px;width:2.8px;height:39px"><div class="ab" style="left:0;top:1px;width:100%;height:14px;background:#5a6e58;border-radius:1px"></div><div class="ab" style="left:0;top:15px;width:100%;height:24px;background:#4a2a2c"></div></div>
<svg class="ab" style="left:662.5px;top:368px" width="2.8" height="24"><path d="M0 2 Q0.6 10 2.8 12 Q0.6 14 0 22Z" fill="#c8d4b8"/></svg>
<div class="ab" style="left:732.3px;top:353px;width:2.8px;height:39px"><div class="ab" style="left:0;top:1px;width:100%;height:14px;background:#5a6e58;border-radius:1px"></div><div class="ab" style="left:0;top:15px;width:100%;height:24px;background:#4a2a2c"></div></div>
<svg class="ab" style="left:732.3px;top:368px" width="2.8" height="24"><path d="M0 2 Q0.6 10 2.8 12 Q0.6 14 0 22Z" fill="#c8d4b8"/></svg>
<div class="ab" style="left:765.3px;top:353px;width:2.8px;height:39px"><div class="ab" style="left:0;top:1px;width:100%;height:14px;background:#5a6e58;border-radius:1px"></div><div class="ab" style="left:0;top:15px;width:100%;height:24px;background:#4a2a2c"></div></div>
<svg class="ab" style="left:765.3px;top:368px" width="2.8" height="24"><path d="M0 2 Q0.6 10 2.8 12 Q0.6 14 0 22Z" fill="#c8d4b8"/></svg>
<div class="ab" style="left:831.2px;top:353px;width:2.8px;height:39px"><div class="ab" style="left:0;top:1px;width:100%;height:14px;background:#5a6e58;border-radius:1px"></div><div class="ab" style="left:0;top:15px;width:100%;height:24px;background:#4a2a2c"></div></div>
<svg class="ab" style="left:831.2px;top:368px" width="2.8" height="24"><path d="M0 2 Q0.6 10 2.8 12 Q0.6 14 0 22Z" fill="#c8d4b8"/></svg>
<div class="ab" style="left:996.3px;top:353px;width:2.8px;height:39px"><div class="ab" style="left:0;top:1px;width:100%;height:14px;background:#5a6e58;border-radius:1px"></div><div class="ab" style="left:0;top:15px;width:100%;height:24px;background:#4a2a2c"></div></div>
<svg class="ab" style="left:996.3px;top:368px" width="2.8" height="24"><path d="M0 2 Q0.6 10 2.8 12 Q0.6 14 0 22Z" fill="#c8d4b8"/></svg>
<div class="ab" style="left:1029.3px;top:353px;width:2.8px;height:39px"><div class="ab" style="left:0;top:1px;width:100%;height:14px;background:#5a6e58;border-radius:1px"></div><div class="ab" style="left:0;top:15px;width:100%;height:24px;background:#4a2a2c"></div></div>
<svg class="ab" style="left:1029.3px;top:368px" width="2.8" height="24"><path d="M0 2 Q0.6 10 2.8 12 Q0.6 14 0 22Z" fill="#c8d4b8"/></svg>
<div class="ab" style="left:1062.5px;top:353px;width:2.8px;height:39px"><div class="ab" style="left:0;top:1px;width:100%;height:14px;background:#5a6e58;border-radius:1px"></div><div class="ab" style="left:0;top:15px;width:100%;height:24px;background:#4a2a2c"></div></div>
<svg class="ab" style="left:1062.5px;top:368px" width="2.8" height="24"><path d="M0 2 Q0.6 10 2.8 12 Q0.6 14 0 22Z" fill="#c8d4b8"/></svg>
<div class="ab" style="left:1095.5px;top:353px;width:2.8px;height:39px"><div class="ab" style="left:0;top:1px;width:100%;height:14px;background:#5a6e58;border-radius:1px"></div><div class="ab" style="left:0;top:15px;width:100%;height:24px;background:#4a2a2c"></div></div>
<svg class="ab" style="left:1095.5px;top:368px" width="2.8" height="24"><path d="M0 2 Q0.6 10 2.8 12 Q0.6 14 0 22Z" fill="#c8d4b8"/></svg>
<div class="ab" style="left:1128.6px;top:353px;width:2.8px;height:39px"><div class="ab" style="left:0;top:1px;width:100%;height:14px;background:#5a6e58;border-radius:1px"></div><div class="ab" style="left:0;top:15px;width:100%;height:24px;background:#4a2a2c"></div></div>
<svg class="ab" style="left:1128.6px;top:368px" width="2.8" height="24"><path d="M0 2 Q0.6 10 2.8 12 Q0.6 14 0 22Z" fill="#c8d4b8"/></svg>
<div class="ab" style="left:795.6px;top:353px;width:5.0px;height:39px"><div class="ab" style="left:0;top:1px;width:100%;height:14px;background:#4b5561;border-radius:1px"></div><div class="ab" style="left:0;top:15px;width:100%;height:24px;background:#4a2a2c"></div></div>
<svg class="ab" style="left:795.6px;top:368px" width="5.0" height="24"><path d="M0 2 Q1.0 10 5.0 12 Q1.0 14 0 22Z" fill="#b8ccd4"/></svg>
<div class="ab" style="left:958.6px;top:353px;width:5.0px;height:39px"><div class="ab" style="left:0;top:1px;width:100%;height:14px;background:#4b5561;border-radius:1px"></div><div class="ab" style="left:0;top:15px;width:100%;height:24px;background:#4a2a2c"></div></div>
<svg class="ab" style="left:958.6px;top:368px" width="5.0" height="24"><path d="M0 2 Q1.0 10 5.0 12 Q1.0 14 0 22Z" fill="#b8ccd4"/></svg>
<div class="ab" style="left:1158.7px;top:353px;width:3px;height:39px;background:#5a4a54"></div><div class="ab" style="left:1158.7px;top:369px;width:3px;height:23px;background:#d8b8c4"></div>
<div class="ab" style="left:679.8px;top:353px;width:15.7px;height:39px;overflow:hidden"><div class="ab" style="left:0;top:15px;width:100%;height:24px;background:#4a2c30;opacity:0.85"></div><div class="ab" style="left:0;top:0.5px;width:100%;height:14.5px;background:#6a5a62;border-radius:3px;box-shadow:inset 0 0 0 1px rgba(255,255,255,0.1)"></div></div>
<svg class="ab" style="left:682.8px;top:356px" width="12" height="10"><rect x="0.5" y="1" width="1" height="8" fill="#8a8cc0"/><path d="M1.5 1 L4.2 4 L5.8 2 L7 4.2 L10.5 5 L7 5.8 L5.8 8 L4.2 6 L1.5 9Z" fill="#f0ecd8"/></svg>
<svg class="ab" style="left:679.8px;top:368px" width="16" height="24"><path d="M0 12 H8 L10 4 L15.7 2 V22 L10 20 L8 12Z" fill="#d8b8c4"/></svg>
<div class="ab" style="left:695.5px;top:353px;width:16.5px;height:39px;overflow:hidden"><div class="ab" style="left:0;top:15px;width:100%;height:24px;background:#4a2a2c;opacity:0.85"></div><div class="ab" style="left:0;top:0.5px;width:100%;height:14.5px;background:#5a6e58;border-radius:3px;box-shadow:inset 0 0 0 1px rgba(255,255,255,0.1)"></div></div>
<svg class="ab" style="left:695.5px;top:368px" width="16.5" height="24"><path d="M0.0 7.5 L1.0 6.9 L2.1 7.2 L3.1 7.4 L4.1 7.4 L5.2 7.6 L6.2 7.5 L7.2 6.6 L8.2 8.0 L9.3 7.5 L10.3 7.1 L11.3 6.8 L12.4 7.4 L13.4 7.8 L14.4 7.9 L15.5 7.1 L16.5 6.9 L16.5 18.1 L15.5 17.9 L14.4 17.1 L13.4 17.2 L12.4 17.6 L11.3 18.2 L10.3 17.9 L9.3 17.5 L8.2 17.0 L7.2 18.4 L6.2 17.5 L5.2 17.4 L4.1 17.6 L3.1 17.6 L2.1 17.8 L1.0 18.1 L0.0 17.5Z" fill="#b4c8b0"/></svg>
<svg class="ab" style="left:698.5px;top:356px" width="12" height="10"><rect x="0.5" y="1" width="1" height="8" fill="#8a8cc0"/><path d="M1.5 1 L4.2 4 L5.8 2 L7 4.2 L10.5 5 L7 5.8 L5.8 8 L4.2 6 L1.5 9Z" fill="#f0ecd8"/></svg>
<div class="ab" style="left:712.0px;top:353px;width:16.4px;height:39px;overflow:hidden"><div class="ab" style="left:0;top:15px;width:100%;height:24px;background:#4a2a2c;opacity:0.85"></div><div class="ab" style="left:0;top:0.5px;width:100%;height:14.5px;background:#5a6e58;border-radius:3px;box-shadow:inset 0 0 0 1px rgba(255,255,255,0.1)"></div></div>
<svg class="ab" style="left:712.0px;top:368px" width="16.4" height="24"><path d="M0.0 7.6 L1.0 7.3 L2.0 7.9 L3.1 7.4 L4.1 7.9 L5.1 7.6 L6.1 6.9 L7.2 7.6 L8.2 7.7 L9.2 7.0 L10.2 8.0 L11.3 7.5 L12.3 6.7 L13.3 8.0 L14.3 6.7 L15.4 7.5 L16.4 7.3 L16.4 17.7 L15.4 17.5 L14.3 18.3 L13.3 17.0 L12.3 18.3 L11.3 17.5 L10.2 17.0 L9.2 18.0 L8.2 17.3 L7.2 17.4 L6.1 18.1 L5.1 17.4 L4.1 17.1 L3.1 17.6 L2.0 17.1 L1.0 17.7 L0.0 17.4Z" fill="#b4c8b0"/></svg>
<svg class="ab" style="left:715px;top:356px" width="12" height="10"><rect x="0.5" y="1" width="1" height="8" fill="#8a8cc0"/><path d="M1.5 1 L4.2 4 L5.8 2 L7 4.2 L10.5 5 L7 5.8 L5.8 8 L4.2 6 L1.5 9Z" fill="#f0ecd8"/></svg>
<div class="ab" style="left:864.0px;top:353px;width:68.0px;height:39px;overflow:hidden"><div class="ab" style="left:0;top:15px;width:100%;height:24px;background:#4a2c30;opacity:0.85"></div><div class="ab" style="left:0;top:0.5px;width:100%;height:14.5px;background:#4b5561;border-radius:3px;box-shadow:inset 0 0 0 1px rgba(255,255,255,0.1)"></div></div>
<svg class="ab" style="left:864.0px;top:368px" width="68.0" height="24"><path d="M0.0 6.9 L1.0 5.7 L2.0 6.5 L3.0 7.6 L4.0 3.6 L5.0 8.4 L6.0 8.1 L7.0 4.8 L8.0 2.8 L9.0 7.0 L10.0 5.0 L11.0 8.4 L12.0 3.0 L13.0 7.6 L14.0 2.5 L15.0 5.2 L16.0 7.5 L17.0 8.1 L18.0 7.3 L19.0 3.1 L20.0 7.1 L21.0 3.3 L22.0 7.1 L23.0 5.4 L24.0 4.9 L25.0 2.9 L26.0 7.4 L27.0 2.5 L28.0 4.5 L29.0 8.1 L30.0 8.0 L31.0 6.5 L32.0 6.0 L33.0 8.5 L34.0 4.3 L35.0 5.8 L36.0 7.8 L37.0 8.3 L38.0 5.8 L39.0 3.3 L40.0 3.2 L41.0 6.0 L42.0 4.9 L43.0 8.5 L44.0 7.4 L45.0 3.2 L46.0 5.5 L47.0 5.4 L48.0 8.1 L49.0 3.8 L50.0 4.8 L51.0 7.0 L52.0 4.8 L53.0 8.9 L54.0 6.0 L55.0 8.9 L56.0 2.6 L57.0 8.1 L58.0 3.5 L59.0 8.0 L60.0 5.4 L61.0 2.6 L62.0 7.7 L63.0 6.1 L64.0 3.0 L65.0 2.5 L66.0 4.8 L67.0 2.9 L68.0 7.6 L68.0 16.4 L67.0 21.1 L66.0 19.2 L65.0 21.5 L64.0 21.0 L63.0 17.9 L62.0 16.3 L61.0 21.4 L60.0 18.6 L59.0 16.0 L58.0 20.5 L57.0 15.9 L56.0 21.4 L55.0 15.1 L54.0 18.0 L53.0 15.1 L52.0 19.2 L51.0 17.0 L50.0 19.2 L49.0 20.2 L48.0 15.9 L47.0 18.6 L46.0 18.5 L45.0 20.8 L44.0 16.6 L43.0 15.5 L42.0 19.1 L41.0 18.0 L40.0 20.8 L39.0 20.7 L38.0 18.2 L37.0 15.7 L36.0 16.2 L35.0 18.2 L34.0 19.7 L33.0 15.5 L32.0 18.0 L31.0 17.5 L30.0 16.0 L29.0 15.9 L28.0 19.5 L27.0 21.5 L26.0 16.6 L25.0 21.1 L24.0 19.1 L23.0 18.6 L22.0 16.9 L21.0 20.7 L20.0 16.9 L19.0 20.9 L18.0 16.7 L17.0 15.9 L16.0 16.5 L15.0 18.8 L14.0 21.5 L13.0 16.4 L12.0 21.0 L11.0 15.6 L10.0 19.0 L9.0 17.0 L8.0 21.2 L7.0 19.2 L6.0 15.9 L5.0 15.6 L4.0 20.4 L3.0 16.4 L2.0 17.5 L1.0 18.3 L0.0 17.1Z" fill="#b8c4cc"/></svg>
<svg class="ab" style="left:867px;top:356px" width="12" height="10"><rect x="0.5" y="1" width="1" height="8" fill="#8a8cc0"/><path d="M1.5 1 L4.2 4 L5.8 2 L7 4.2 L10.5 5 L7 5.8 L5.8 8 L4.2 6 L1.5 9Z" fill="#f0ecd8"/></svg>
<div class="tx" style="left:879.0px;top:352.5px;font-size:13px;color:#e6e0ea;transform:scaleX(0.92);transform-origin:0 0;letter-spacing:0.6px">好听干声</div>
<div class="ab" style="left:1179.5px;top:353px;width:15.7px;height:39px;overflow:hidden"><div class="ab" style="left:0;top:15px;width:100%;height:24px;background:#4a2a2c;opacity:0.85"></div><div class="ab" style="left:0;top:0.5px;width:100%;height:14.5px;background:#5a6e58;border-radius:3px;box-shadow:inset 0 0 0 1px rgba(255,255,255,0.1)"></div></div>
<svg class="ab" style="left:1179.5px;top:368px" width="15.7" height="24"><path d="M0 12.5 Q7.9 11 10.8 1.5 Q12.2 6 15.7 7 V18 Q12.2 19 10.8 23.5 Q7.9 14 0 12.5Z" fill="#b4c8b0"/></svg>
<svg class="ab" style="left:1182.5px;top:356px" width="12" height="10"><rect x="0.5" y="1" width="1" height="8" fill="#8a8cc0"/><path d="M1.5 1 L4.2 4 L5.8 2 L7 4.2 L10.5 5 L7 5.8 L5.8 8 L4.2 6 L1.5 9Z" fill="#f0ecd8"/></svg>
<div class="ab" style="left:1212.4px;top:353px;width:15.7px;height:39px;overflow:hidden"><div class="ab" style="left:0;top:15px;width:100%;height:24px;background:#4a2a2c;opacity:0.85"></div><div class="ab" style="left:0;top:0.5px;width:100%;height:14.5px;background:#5a6e58;border-radius:3px;box-shadow:inset 0 0 0 1px rgba(255,255,255,0.1)"></div></div>
<svg class="ab" style="left:1212.4px;top:368px" width="15.7" height="24"><path d="M0 12.5 Q7.9 11 10.8 1.5 Q12.2 6 15.7 7 V18 Q12.2 19 10.8 23.5 Q7.9 14 0 12.5Z" fill="#b4c8b0"/></svg>
<svg class="ab" style="left:1215.4px;top:356px" width="12" height="10"><rect x="0.5" y="1" width="1" height="8" fill="#8a8cc0"/><path d="M1.5 1 L4.2 4 L5.8 2 L7 4.2 L10.5 5 L7 5.8 L5.8 8 L4.2 6 L1.5 9Z" fill="#f0ecd8"/></svg>
<div class="ab" style="left:1245.3px;top:353px;width:15.7px;height:39px;overflow:hidden"><div class="ab" style="left:0;top:15px;width:100%;height:24px;background:#4a2a2c;opacity:0.85"></div><div class="ab" style="left:0;top:0.5px;width:100%;height:14.5px;background:#5a6e58;border-radius:3px;box-shadow:inset 0 0 0 1px rgba(255,255,255,0.1)"></div></div>
<svg class="ab" style="left:1245.3px;top:368px" width="15.7" height="24"><path d="M0 12.5 Q7.9 11 10.8 1.5 Q12.2 6 15.7 7 V18 Q12.2 19 10.8 23.5 Q7.9 14 0 12.5Z" fill="#b4c8b0"/></svg>
<svg class="ab" style="left:1248.3px;top:356px" width="12" height="10"><rect x="0.5" y="1" width="1" height="8" fill="#8a8cc0"/><path d="M1.5 1 L4.2 4 L5.8 2 L7 4.2 L10.5 5 L7 5.8 L5.8 8 L4.2 6 L1.5 9Z" fill="#f0ecd8"/></svg>
<div class="ab" style="left:629.9px;top:393px;width:16.1px;height:39px;overflow:hidden"><div class="ab" style="left:0;top:15px;width:100%;height:24px;background:#4a2c30;opacity:0.85"></div><div class="ab" style="left:0;top:0.5px;width:100%;height:14.5px;background:#4b5561;border-radius:3px;box-shadow:inset 0 0 0 1px rgba(255,255,255,0.1)"></div></div>
<svg class="ab" style="left:629.9px;top:408px" width="16.1" height="24"><path d="M0.0 5.7 L1.0 4.7 L2.0 3.7 L3.0 5.8 L4.0 5.2 L5.0 4.6 L6.0 4.7 L7.0 4.4 L8.1 5.1 L9.1 4.9 L10.1 5.8 L11.1 4.3 L12.1 4.0 L13.1 5.7 L14.1 4.5 L15.1 6.8 L16.1 12.6 L16.1 13.4 L15.1 19.2 L14.1 21.5 L13.1 20.3 L12.1 22.0 L11.1 21.7 L10.1 20.2 L9.1 21.1 L8.1 20.9 L7.0 21.6 L6.0 21.3 L5.0 21.4 L4.0 20.8 L3.0 20.2 L2.0 22.3 L1.0 21.3 L0.0 20.3Z" fill="#b8c4cc"/></svg>
<svg class="ab" style="left:632.9px;top:396px" width="12" height="10"><rect x="0.5" y="1" width="1" height="8" fill="#8a8cc0"/><path d="M1.5 1 L4.2 4 L5.8 2 L7 4.2 L10.5 5 L7 5.8 L5.8 8 L4.2 6 L1.5 9Z" fill="#f0ecd8"/></svg>
<div class="ab" style="left:694.0px;top:393px;width:2.5px;height:39px"><div class="ab" style="left:0;top:1px;width:100%;height:14px;background:#46606a;border-radius:1px"></div><div class="ab" style="left:0;top:15px;width:100%;height:24px;background:#4a2a2c"></div></div>
<svg class="ab" style="left:694.0px;top:408px" width="2.5" height="24"><path d="M0 2 Q0.5 10 2.5 12 Q0.5 14 0 22Z" fill="#b8d0d4"/></svg>
<div class="ab" style="left:849.0px;top:393px;width:15.3px;height:39px;overflow:hidden"><div class="ab" style="left:0;top:15px;width:100%;height:24px;background:#4a2a2c;opacity:0.85"></div><div class="ab" style="left:0;top:0.5px;width:100%;height:14.5px;background:#5a6e58;border-radius:3px;box-shadow:inset 0 0 0 1px rgba(255,255,255,0.1)"></div></div>
<svg class="ab" style="left:849.0px;top:408px" width="15.3" height="24"><path d="M0 12.5 Q7.6 11 10.6 1.5 Q11.9 6 15.3 7 V18 Q11.9 19 10.6 23.5 Q7.6 14 0 12.5Z" fill="#b4c8b0"/></svg>
<svg class="ab" style="left:852px;top:396px" width="12" height="10"><rect x="0.5" y="1" width="1" height="8" fill="#8a8cc0"/><path d="M1.5 1 L4.2 4 L5.8 2 L7 4.2 L10.5 5 L7 5.8 L5.8 8 L4.2 6 L1.5 9Z" fill="#f0ecd8"/></svg>
<div class="ab" style="left:926.0px;top:393px;width:3.0px;height:39px"><div class="ab" style="left:0;top:1px;width:100%;height:14px;background:#46606a;border-radius:1px"></div><div class="ab" style="left:0;top:15px;width:100%;height:24px;background:#4a2a2c"></div></div>
<svg class="ab" style="left:926.0px;top:408px" width="3.0" height="24"><path d="M0 2 Q0.6 10 3.0 12 Q0.6 14 0 22Z" fill="#c8d4dc"/></svg>
<div class="ab" style="left:1024.5px;top:393px;width:3px;height:39px;background:#4b5561"></div><div class="ab" style="left:1024.5px;top:413px;width:3px;height:19px;background:#d8e0e8"></div>
<div class="ab" style="left:1158.5px;top:393px;width:4.0px;height:39px"><div class="ab" style="left:0;top:1px;width:100%;height:14px;background:#46606a;border-radius:1px"></div><div class="ab" style="left:0;top:15px;width:100%;height:24px;background:#4a2a2c"></div></div>
<svg class="ab" style="left:1158.5px;top:408px" width="4.0" height="24"><path d="M0 2 Q0.8 10 4.0 12 Q0.8 14 0 22Z" fill="#c8d4dc"/></svg>
<div class="ab" style="left:663.5px;top:434px;width:5px;height:14px;background:#5c4a52;border-radius:2px"></div>
<div class="ab" style="left:663.5px;top:448px;width:5px;height:24px;background:#4a2a2e"></div>
<svg class="ab" style="left:663.5px;top:448px" width="5" height="24"><path d="M0 12 L0.5 2 L1.5 6 L2.5 1 L3.5 8 L5 12 L3.5 16 L2.5 23 L1.5 18 L0.5 22Z" fill="#e0c8d0"/></svg>
<div class="ab" style="left:672px;top:434px;width:5px;height:14px;background:#5c4a52;border-radius:2px"></div>
<div class="ab" style="left:672px;top:448px;width:5px;height:24px;background:#4a2a2e"></div>
<svg class="ab" style="left:672px;top:448px" width="5" height="24"><path d="M0 12 L0.5 2 L1.5 6 L2.5 1 L3.5 8 L5 12 L3.5 16 L2.5 23 L1.5 18 L0.5 22Z" fill="#e0c8d0"/></svg>
<div class="ab" style="left:680px;top:434px;width:5px;height:14px;background:#5c4a52;border-radius:2px"></div>
<div class="ab" style="left:680px;top:448px;width:5px;height:24px;background:#4a2a2e"></div>
<svg class="ab" style="left:680px;top:448px" width="5" height="24"><path d="M0 12 L0.5 2 L1.5 6 L2.5 1 L3.5 8 L5 12 L3.5 16 L2.5 23 L1.5 18 L0.5 22Z" fill="#e0c8d0"/></svg>
<div class="ab" style="left:688.5px;top:434px;width:5px;height:14px;background:#5c4a52;border-radius:2px"></div>
<div class="ab" style="left:688.5px;top:448px;width:5px;height:24px;background:#4a2a2e"></div>
<svg class="ab" style="left:688.5px;top:448px" width="5" height="24"><path d="M0 12 L0.5 2 L1.5 6 L2.5 1 L3.5 8 L5 12 L3.5 16 L2.5 23 L1.5 18 L0.5 22Z" fill="#e0c8d0"/></svg>
<div class="ab" style="left:728.0px;top:433px;width:10.0px;height:39px;overflow:hidden"><div class="ab" style="left:0;top:15px;width:100%;height:24px;background:#4a2c30;opacity:0.85"></div><div class="ab" style="left:0;top:0.5px;width:100%;height:14.5px;background:#46606a;border-radius:3px;box-shadow:inset 0 0 0 1px rgba(255,255,255,0.1)"></div></div>
<svg class="ab" style="left:728.0px;top:448px" width="10.0" height="24"><path d="M0 12.5 Q5.0 11 6.9 1.5 Q7.8 6 10.0 7 V18 Q7.8 19 6.9 23.5 Q5.0 14 0 12.5Z" fill="#b8d0d4"/></svg>
<div class="ab" style="left:761.8px;top:434px;width:3px;height:14px;background:#46606a"></div><div class="ab" style="left:761.8px;top:449px;width:3px;height:23px;background:#b8ccd8"></div>
<div class="ab" style="left:864.0px;top:433px;width:66.0px;height:39px;overflow:hidden"><div class="ab" style="left:0;top:15px;width:100%;height:24px;background:#58404a;opacity:0.85"></div><div class="ab" style="left:0;top:0.5px;width:100%;height:14.5px;background:#4e5787;border-radius:3px;box-shadow:inset 0 0 0 1px rgba(255,255,255,0.1)"></div></div>
<svg class="ab" style="left:864.0px;top:448px" width="66.0" height="24"><path d="M0 2 H63 Q65 2 65 23" fill="none" stroke="#dcd4e4" stroke-width="1.3"/></svg>
<svg class="ab" style="left:867px;top:436px" width="12" height="11"><circle cx="2.5" cy="8.5" r="1.8" fill="none" stroke="#e0e4f0" stroke-width="1.2"/><circle cx="9.5" cy="2.5" r="1.8" fill="none" stroke="#e0e4f0" stroke-width="1.2"/><path d="M3.8 7.2 L8.2 3.8" stroke="#e0e4f0" stroke-width="1.2"/></svg>
<div class="tx" style="left:879.0px;top:432.5px;font-size:13px;color:#e6e0ea;transform:scaleX(0.92);transform-origin:0 0;letter-spacing:0.6px">好听..增</div>
<div class="ab" style="left:1027.5px;top:433px;width:3px;height:39px;background:#46606a"></div><div class="ab" style="left:1027.5px;top:453px;width:3px;height:19px;background:#d8e0e8"></div>
<div class="ab" style="left:1161.5px;top:433px;width:2.8px;height:39px"><div class="ab" style="left:0;top:1px;width:100%;height:14px;background:#5a6e58;border-radius:1px"></div><div class="ab" style="left:0;top:15px;width:100%;height:24px;background:#4a2a2c"></div></div>
<svg class="ab" style="left:1161.5px;top:448px" width="2.8" height="24"><path d="M0 2 Q0.6 10 2.8 12 Q0.6 14 0 22Z" fill="#c8d4b8"/></svg>
<div class="ab" style="left:1194.5px;top:433px;width:2.8px;height:39px"><div class="ab" style="left:0;top:1px;width:100%;height:14px;background:#5a6e58;border-radius:1px"></div><div class="ab" style="left:0;top:15px;width:100%;height:24px;background:#4a2a2c"></div></div>
<svg class="ab" style="left:1194.5px;top:448px" width="2.8" height="24"><path d="M0 2 Q0.6 10 2.8 12 Q0.6 14 0 22Z" fill="#c8d4b8"/></svg>
<div class="ab" style="left:1227.5px;top:433px;width:2.8px;height:39px"><div class="ab" style="left:0;top:1px;width:100%;height:14px;background:#5a6e58;border-radius:1px"></div><div class="ab" style="left:0;top:15px;width:100%;height:24px;background:#4a2a2c"></div></div>
<svg class="ab" style="left:1227.5px;top:448px" width="2.8" height="24"><path d="M0 2 Q0.6 10 2.8 12 Q0.6 14 0 22Z" fill="#c8d4b8"/></svg>
<div class="ab" style="left:1260.6px;top:433px;width:5.5px;height:39px"><div class="ab" style="left:0;top:1px;width:100%;height:14px;background:#5a6e58;border-radius:1px"></div><div class="ab" style="left:0;top:15px;width:100%;height:24px;background:#4a2a2c"></div></div>
<svg class="ab" style="left:1260.6px;top:448px" width="5.5" height="24"><path d="M0 2 Q1.1 10 5.5 12 Q1.1 14 0 22Z" fill="#c8d4b8"/></svg>
<div class="ab" style="left:694.8px;top:473px;width:11.9px;height:39px;overflow:hidden"><div class="ab" style="left:0;top:15px;width:100%;height:24px;background:#4a2c30;opacity:0.85"></div><div class="ab" style="left:0;top:0.5px;width:100%;height:14.5px;background:#46606a;border-radius:3px;box-shadow:inset 0 0 0 1px rgba(255,255,255,0.1)"></div></div>
<svg class="ab" style="left:694.8px;top:488px" width="11.9" height="24"><path d="M0 0.5 Q4.2 11 11.9 12 Q4.2 13 0 23.5Z" fill="#b8d0d4"/></svg>
<div class="ab" style="left:866px;top:474px;width:6px;height:14px;background:#5c4a52;border-radius:1px"></div>
<svg class="ab" style="left:866px;top:488px" width="6" height="24"><path d="M0 12 L1 3 L2.5 9 L3.5 1 L6 12 L3.5 23 L2.5 15 L1 21Z" fill="#e0c8d0"/></svg>
<div class="ab" style="left:874px;top:474px;width:6px;height:14px;background:#5c4a52;border-radius:1px"></div>
<svg class="ab" style="left:874px;top:488px" width="6" height="24"><path d="M0 12 L1 3 L2.5 9 L3.5 1 L6 12 L3.5 23 L2.5 15 L1 21Z" fill="#e0c8d0"/></svg>
<div class="ab" style="left:882px;top:474px;width:6px;height:14px;background:#5c4a52;border-radius:1px"></div>
<svg class="ab" style="left:882px;top:488px" width="6" height="24"><path d="M0 12 L1 3 L2.5 9 L3.5 1 L6 12 L3.5 23 L2.5 15 L1 21Z" fill="#e0c8d0"/></svg>
<div class="ab" style="left:890.5px;top:474px;width:6px;height:14px;background:#5c4a52;border-radius:1px"></div>
<svg class="ab" style="left:890.5px;top:488px" width="6" height="24"><path d="M0 12 L1 3 L2.5 9 L3.5 1 L6 12 L3.5 23 L2.5 15 L1 21Z" fill="#e0c8d0"/></svg>
<div class="ab" style="left:898.5px;top:474px;width:6px;height:14px;background:#5c4a52;border-radius:1px"></div>
<svg class="ab" style="left:898.5px;top:488px" width="6" height="24"><path d="M0 12 L1 3 L2.5 9 L3.5 1 L6 12 L3.5 23 L2.5 15 L1 21Z" fill="#e0c8d0"/></svg>
<div class="ab" style="left:906.5px;top:474px;width:6px;height:14px;background:#5c4a52;border-radius:1px"></div>
<svg class="ab" style="left:906.5px;top:488px" width="6" height="24"><path d="M0 12 L1 3 L2.5 9 L3.5 1 L6 12 L3.5 23 L2.5 15 L1 21Z" fill="#e0c8d0"/></svg>
<div class="ab" style="left:914.5px;top:474px;width:6px;height:14px;background:#5c4a52;border-radius:1px"></div>
<svg class="ab" style="left:914.5px;top:488px" width="6" height="24"><path d="M0 12 L1 3 L2.5 9 L3.5 1 L6 12 L3.5 23 L2.5 15 L1 21Z" fill="#e0c8d0"/></svg>
<div class="ab" style="left:1028.8px;top:473px;width:6.0px;height:39px"><div class="ab" style="left:0;top:1px;width:100%;height:14px;background:#5a6e58;border-radius:1px"></div><div class="ab" style="left:0;top:15px;width:100%;height:24px;background:#4a2a2c"></div></div>
<svg class="ab" style="left:1028.8px;top:488px" width="6.0" height="24"><path d="M0 2 Q1.2 10 6.0 12 Q1.2 14 0 22Z" fill="#c8d4b8"/></svg>
<div class="ab" style="left:1260.0px;top:473px;width:13.0px;height:39px;overflow:hidden"><div class="ab" style="left:0;top:15px;width:100%;height:24px;background:#4a2c30;opacity:0.85"></div><div class="ab" style="left:0;top:0.5px;width:100%;height:14.5px;background:#46606a;border-radius:3px;box-shadow:inset 0 0 0 1px rgba(255,255,255,0.1)"></div></div>
<svg class="ab" style="left:1260.0px;top:488px" width="13.0" height="24"><path d="M0 0.5 Q4.5 11 13.0 12 Q4.5 13 0 23.5Z" fill="#b8d0d4"/></svg>
<svg class="ab" style="left:1263px;top:476px" width="12" height="10"><rect x="0.5" y="1" width="1" height="8" fill="#8a8cc0"/><path d="M1.5 1 L4.2 4 L5.8 2 L7 4.2 L10.5 5 L7 5.8 L5.8 8 L4.2 6 L1.5 9Z" fill="#f0ecd8"/></svg>
<div class="ab" style="left:694.8px;top:513px;width:33.0px;height:39px;overflow:hidden"><div class="ab" style="left:0;top:15px;width:100%;height:24px;background:#4a2a2f;opacity:0.85"></div><div class="ab" style="left:0;top:0.5px;width:100%;height:14.5px;background:#48515a;border-radius:3px;box-shadow:inset 0 0 0 1px rgba(255,255,255,0.1)"></div></div>
<svg class="ab" style="left:694.8px;top:528px" width="33.0" height="24"><rect x="0.0" y="7.0" width="3.0" height="1.8" fill="#b8babe"/><rect x="0.0" y="9.5" width="3.0" height="1.8" fill="#b8babe"/><rect x="0.0" y="12.0" width="3.0" height="1.8" fill="#b8babe"/><rect x="0.0" y="3" width="1" height="1.5" fill="#9a9aa0"/><rect x="3.3" y="8.0" width="3.0" height="1.8" fill="#b8babe"/><rect x="3.3" y="10.5" width="3.0" height="1.8" fill="#b8babe"/><rect x="6.6" y="6.0" width="3.0" height="1.8" fill="#b8babe"/><rect x="6.6" y="8.5" width="3.0" height="1.8" fill="#b8babe"/><rect x="6.6" y="11.0" width="3.0" height="1.8" fill="#b8babe"/><rect x="6.6" y="13.5" width="3.0" height="1.8" fill="#b8babe"/><rect x="6.6" y="4" width="1" height="1.5" fill="#9a9aa0"/><rect x="9.9" y="7.0" width="3.0" height="1.8" fill="#b8babe"/><rect x="9.9" y="9.5" width="3.0" height="1.8" fill="#b8babe"/><rect x="9.9" y="12.0" width="3.0" height="1.8" fill="#b8babe"/><rect x="9.9" y="4" width="1" height="1.5" fill="#9a9aa0"/><rect x="13.2" y="6.0" width="3.0" height="1.8" fill="#b8babe"/><rect x="13.2" y="8.5" width="3.0" height="1.8" fill="#b8babe"/><rect x="13.2" y="11.0" width="3.0" height="1.8" fill="#b8babe"/><rect x="16.5" y="5.0" width="3.0" height="1.8" fill="#b8babe"/><rect x="16.5" y="7.5" width="3.0" height="1.8" fill="#b8babe"/><rect x="16.5" y="10.0" width="3.0" height="1.8" fill="#b8babe"/><rect x="16.5" y="5" width="1" height="1.5" fill="#9a9aa0"/><rect x="19.8" y="4.0" width="3.0" height="1.8" fill="#b8babe"/><rect x="19.8" y="6.5" width="3.0" height="1.8" fill="#b8babe"/><rect x="23.1" y="4.0" width="3.0" height="1.8" fill="#b8babe"/><rect x="23.1" y="6.5" width="3.0" height="1.8" fill="#b8babe"/><rect x="26.4" y="4.0" width="3.0" height="1.8" fill="#b8babe"/><rect x="26.4" y="6.5" width="3.0" height="1.8" fill="#b8babe"/><rect x="26.4" y="9.0" width="3.0" height="1.8" fill="#b8babe"/><rect x="29.7" y="4.0" width="3.0" height="1.8" fill="#b8babe"/><rect x="29.7" y="6.5" width="3.0" height="1.8" fill="#b8babe"/><rect x="29.7" y="9.0" width="3.0" height="1.8" fill="#b8babe"/><rect x="29.7" y="11.5" width="3.0" height="1.8" fill="#b8babe"/><rect x="29.7" y="5" width="1" height="1.5" fill="#9a9aa0"/></svg>
<svg class="ab" style="left:697.8px;top:516px" width="10" height="11"><rect x="0" y="0" width="9" height="11" fill="#e8ecf0"/><path d="M0 2.5 H5 M0 5.5 H5 M0 8.5 H5" stroke="#48515a" stroke-width="1"/></svg>
<div class="tx" style="left:709.8px;top:514px;font-size:12px;color:#e6e0ea;transform:scaleX(0.86);transform-origin:0 0;letter-spacing:0.6px"><span style="color:#6a7078">P..</span></div>
<div class="ab" style="left:907.0px;top:513px;width:25.0px;height:39px;overflow:hidden"><div class="ab" style="left:0;top:15px;width:100%;height:24px;background:#4a2c30;opacity:0.85"></div><div class="ab" style="left:0;top:0.5px;width:100%;height:14.5px;background:#6a5a62;border-radius:3px;box-shadow:inset 0 0 0 1px rgba(255,255,255,0.1)"></div></div>
<svg class="ab" style="left:910px;top:516px" width="12" height="10"><rect x="0.5" y="1" width="1" height="8" fill="#8a8cc0"/><path d="M1.5 1 L4.2 4 L5.8 2 L7 4.2 L10.5 5 L7 5.8 L5.8 8 L4.2 6 L1.5 9Z" fill="#f0ecd8"/></svg>
<svg class="ab" style="left:907px;top:528px" width="25" height="24"><path d="M0 12 H14 L22 2 L23 12 L22 22 L14 12.6 H0Z" fill="#d8c0c8"/></svg>
<div class="ab" style="left:1161.3px;top:513px;width:16.2px;height:39px;overflow:hidden"><div class="ab" style="left:0;top:15px;width:100%;height:24px;background:#4a2a2c;opacity:0.85"></div><div class="ab" style="left:0;top:0.5px;width:100%;height:14.5px;background:#5a6e58;border-radius:3px;box-shadow:inset 0 0 0 1px rgba(255,255,255,0.1)"></div></div>
<svg class="ab" style="left:1161.3px;top:528px" width="16.2" height="24"><path d="M0.0 6.6 L1.0 7.2 L2.0 7.1 L3.0 6.5 L4.1 7.8 L5.1 7.8 L6.1 7.4 L7.1 7.2 L8.1 7.3 L9.1 7.1 L10.1 7.2 L11.1 6.9 L12.2 7.6 L13.2 6.9 L14.2 7.0 L15.2 7.3 L16.2 7.2 L16.2 17.8 L15.2 17.7 L14.2 18.0 L13.2 18.1 L12.2 17.4 L11.1 18.1 L10.1 17.8 L9.1 17.9 L8.1 17.7 L7.1 17.8 L6.1 17.6 L5.1 17.2 L4.1 17.2 L3.0 18.5 L2.0 17.9 L1.0 17.8 L0.0 18.4Z" fill="#b4c8b0"/></svg>
<svg class="ab" style="left:1164.3px;top:516px" width="12" height="10"><rect x="0.5" y="1" width="1" height="8" fill="#8a8cc0"/><path d="M1.5 1 L4.2 4 L5.8 2 L7 4.2 L10.5 5 L7 5.8 L5.8 8 L4.2 6 L1.5 9Z" fill="#f0ecd8"/></svg>
<div class="ab" style="left:1177.6px;top:513px;width:16.2px;height:39px;overflow:hidden"><div class="ab" style="left:0;top:15px;width:100%;height:24px;background:#4a2a2c;opacity:0.85"></div><div class="ab" style="left:0;top:0.5px;width:100%;height:14.5px;background:#5a6e58;border-radius:3px;box-shadow:inset 0 0 0 1px rgba(255,255,255,0.1)"></div></div>
<svg class="ab" style="left:1177.6px;top:528px" width="16.2" height="24"><path d="M0.0 7.4 L1.0 7.2 L2.0 7.3 L3.0 6.7 L4.1 7.0 L5.1 6.7 L6.1 7.7 L7.1 6.7 L8.1 7.7 L9.1 7.8 L10.1 6.7 L11.1 8.0 L12.2 7.1 L13.2 7.5 L14.2 6.8 L15.2 7.0 L16.2 7.0 L16.2 18.0 L15.2 18.0 L14.2 18.2 L13.2 17.5 L12.2 17.9 L11.1 17.0 L10.1 18.3 L9.1 17.2 L8.1 17.3 L7.1 18.3 L6.1 17.3 L5.1 18.3 L4.1 18.0 L3.0 18.3 L2.0 17.7 L1.0 17.8 L0.0 17.6Z" fill="#b4c8b0"/></svg>
<svg class="ab" style="left:1180.6px;top:516px" width="12" height="10"><rect x="0.5" y="1" width="1" height="8" fill="#8a8cc0"/><path d="M1.5 1 L4.2 4 L5.8 2 L7 4.2 L10.5 5 L7 5.8 L5.8 8 L4.2 6 L1.5 9Z" fill="#f0ecd8"/></svg>
<div class="ab" style="left:1193.9px;top:513px;width:16.2px;height:39px;overflow:hidden"><div class="ab" style="left:0;top:15px;width:100%;height:24px;background:#4a2a2c;opacity:0.85"></div><div class="ab" style="left:0;top:0.5px;width:100%;height:14.5px;background:#5a6e58;border-radius:3px;box-shadow:inset 0 0 0 1px rgba(255,255,255,0.1)"></div></div>
<svg class="ab" style="left:1193.9px;top:528px" width="16.2" height="24"><path d="M0.0 7.5 L1.0 7.1 L2.0 7.4 L3.0 7.2 L4.1 7.0 L5.1 7.5 L6.1 7.3 L7.1 7.0 L8.1 7.7 L9.1 7.3 L10.1 7.5 L11.1 6.9 L12.2 6.8 L13.2 7.3 L14.2 7.2 L15.2 7.6 L16.2 7.1 L16.2 17.9 L15.2 17.4 L14.2 17.8 L13.2 17.7 L12.2 18.2 L11.1 18.1 L10.1 17.5 L9.1 17.7 L8.1 17.3 L7.1 18.0 L6.1 17.7 L5.1 17.5 L4.1 18.0 L3.0 17.8 L2.0 17.6 L1.0 17.9 L0.0 17.5Z" fill="#b4c8b0"/></svg>
<svg class="ab" style="left:1196.9px;top:516px" width="12" height="10"><rect x="0.5" y="1" width="1" height="8" fill="#8a8cc0"/><path d="M1.5 1 L4.2 4 L5.8 2 L7 4.2 L10.5 5 L7 5.8 L5.8 8 L4.2 6 L1.5 9Z" fill="#f0ecd8"/></svg>
<div class="ab" style="left:1210.2px;top:513px;width:16.2px;height:39px;overflow:hidden"><div class="ab" style="left:0;top:15px;width:100%;height:24px;background:#4a2a2c;opacity:0.85"></div><div class="ab" style="left:0;top:0.5px;width:100%;height:14.5px;background:#5a6e58;border-radius:3px;box-shadow:inset 0 0 0 1px rgba(255,255,255,0.1)"></div></div>
<svg class="ab" style="left:1210.2px;top:528px" width="16.2" height="24"><path d="M0.0 7.9 L1.0 7.3 L2.0 7.9 L3.0 8.0 L4.1 6.8 L5.1 6.8 L6.1 7.9 L7.1 7.0 L8.1 6.9 L9.1 7.4 L10.1 7.1 L11.1 7.1 L12.2 7.5 L13.2 7.6 L14.2 7.7 L15.2 7.7 L16.2 7.8 L16.2 17.2 L15.2 17.3 L14.2 17.3 L13.2 17.4 L12.2 17.5 L11.1 17.9 L10.1 17.9 L9.1 17.6 L8.1 18.1 L7.1 18.0 L6.1 17.1 L5.1 18.2 L4.1 18.2 L3.0 17.0 L2.0 17.1 L1.0 17.7 L0.0 17.1Z" fill="#b4c8b0"/></svg>
<svg class="ab" style="left:1213.2px;top:516px" width="12" height="10"><rect x="0.5" y="1" width="1" height="8" fill="#8a8cc0"/><path d="M1.5 1 L4.2 4 L5.8 2 L7 4.2 L10.5 5 L7 5.8 L5.8 8 L4.2 6 L1.5 9Z" fill="#f0ecd8"/></svg>
<div class="ab" style="left:1260.0px;top:513px;width:13.0px;height:39px;overflow:hidden"><div class="ab" style="left:0;top:15px;width:100%;height:24px;background:#58404a;opacity:0.85"></div><div class="ab" style="left:0;top:0.5px;width:100%;height:14.5px;background:#4e5787;border-radius:3px;box-shadow:inset 0 0 0 1px rgba(255,255,255,0.1)"></div></div>
<svg class="ab" style="left:1260.0px;top:528px" width="13.0" height="24"><path d="M0 2 Q11 2 11 23" fill="none" stroke="#dcd4e4" stroke-width="1.3"/></svg>
<svg class="ab" style="left:1263px;top:516px" width="12" height="11"><circle cx="2.5" cy="8.5" r="1.8" fill="none" stroke="#e0e4f0" stroke-width="1.2"/><circle cx="9.5" cy="2.5" r="1.8" fill="none" stroke="#e0e4f0" stroke-width="1.2"/><path d="M3.8 7.2 L8.2 3.8" stroke="#e0e4f0" stroke-width="1.2"/></svg>
<div class="ab" style="left:694.8px;top:553px;width:33.0px;height:39px;overflow:hidden"><div class="ab" style="left:0;top:15px;width:100%;height:24px;background:#4a2c30;opacity:0.85"></div><div class="ab" style="left:0;top:0.5px;width:100%;height:14.5px;background:#6a5a62;border-radius:3px;box-shadow:inset 0 0 0 1px rgba(255,255,255,0.1)"></div></div>
<svg class="ab" style="left:697.8px;top:556px" width="12" height="10"><rect x="0.5" y="1" width="1" height="8" fill="#8a8cc0"/><path d="M1.5 1 L4.2 4 L5.8 2 L7 4.2 L10.5 5 L7 5.8 L5.8 8 L4.2 6 L1.5 9Z" fill="#f0ecd8"/></svg>
<div class="tx" style="left:709.8px;top:554px;font-size:12px;color:#e6e0ea;transform:scaleX(0.86);transform-origin:0 0;letter-spacing:0.6px"><span style="color:#8a7a82">..</span></div>
<div class="ab" style="left:694.8px;top:569px;width:33px;height:23px;background:#ccb4bf"></div>
<div class="ab" style="left:1163px;top:554px;width:5.5px;height:14px;background:#5c4a52;border-radius:1px"></div>
<svg class="ab" style="left:1163px;top:568px" width="6" height="24"><path d="M0 12 L1 3 L2.5 9 L3.5 1 L6 12 L3.5 23 L2.5 15 L1 21Z" fill="#e0c8d0"/></svg>
<div class="ab" style="left:1171px;top:554px;width:5.5px;height:14px;background:#5c4a52;border-radius:1px"></div>
<svg class="ab" style="left:1171px;top:568px" width="6" height="24"><path d="M0 12 L1 3 L2.5 9 L3.5 1 L6 12 L3.5 23 L2.5 15 L1 21Z" fill="#e0c8d0"/></svg>
<div class="ab" style="left:1179px;top:554px;width:5.5px;height:14px;background:#5c4a52;border-radius:1px"></div>
<svg class="ab" style="left:1179px;top:568px" width="6" height="24"><path d="M0 12 L1 3 L2.5 9 L3.5 1 L6 12 L3.5 23 L2.5 15 L1 21Z" fill="#e0c8d0"/></svg>
<div class="ab" style="left:1188px;top:554px;width:5.5px;height:14px;background:#5c4a52;border-radius:1px"></div>
<svg class="ab" style="left:1188px;top:568px" width="6" height="24"><path d="M0 12 L1 3 L2.5 9 L3.5 1 L6 12 L3.5 23 L2.5 15 L1 21Z" fill="#e0c8d0"/></svg>
<div class="ab" style="left:1196px;top:554px;width:5.5px;height:14px;background:#5c4a52;border-radius:1px"></div>
<svg class="ab" style="left:1196px;top:568px" width="6" height="24"><path d="M0 12 L1 3 L2.5 9 L3.5 1 L6 12 L3.5 23 L2.5 15 L1 21Z" fill="#e0c8d0"/></svg>
<div class="ab" style="left:1204px;top:554px;width:5.5px;height:14px;background:#5c4a52;border-radius:1px"></div>
<svg class="ab" style="left:1204px;top:568px" width="6" height="24"><path d="M0 12 L1 3 L2.5 9 L3.5 1 L6 12 L3.5 23 L2.5 15 L1 21Z" fill="#e0c8d0"/></svg>
<div class="ab" style="left:1212px;top:554px;width:5.5px;height:14px;background:#5c4a52;border-radius:1px"></div>
<svg class="ab" style="left:1212px;top:568px" width="6" height="24"><path d="M0 12 L1 3 L2.5 9 L3.5 1 L6 12 L3.5 23 L2.5 15 L1 21Z" fill="#e0c8d0"/></svg>
<div class="ab" style="left:1220px;top:554px;width:5.5px;height:14px;background:#5c4a52;border-radius:1px"></div>
<svg class="ab" style="left:1220px;top:568px" width="6" height="24"><path d="M0 12 L1 3 L2.5 9 L3.5 1 L6 12 L3.5 23 L2.5 15 L1 21Z" fill="#e0c8d0"/></svg>
<div class="ab" style="left:1230px;top:554px;width:5.5px;height:14px;background:#5c4a52;border-radius:1px"></div>
<svg class="ab" style="left:1230px;top:568px" width="6" height="24"><path d="M0 12 L1 3 L2.5 9 L3.5 1 L6 12 L3.5 23 L2.5 15 L1 21Z" fill="#e0c8d0"/></svg>
<div class="ab" style="left:1238px;top:554px;width:5.5px;height:14px;background:#5c4a52;border-radius:1px"></div>
<svg class="ab" style="left:1238px;top:568px" width="6" height="24"><path d="M0 12 L1 3 L2.5 9 L3.5 1 L6 12 L3.5 23 L2.5 15 L1 21Z" fill="#e0c8d0"/></svg>
<div class="ab" style="left:1246px;top:554px;width:5.5px;height:14px;background:#5c4a52;border-radius:1px"></div>
<svg class="ab" style="left:1246px;top:568px" width="6" height="24"><path d="M0 12 L1 3 L2.5 9 L3.5 1 L6 12 L3.5 23 L2.5 15 L1 21Z" fill="#e0c8d0"/></svg>
<div class="ab" style="left:1254px;top:554px;width:5.5px;height:14px;background:#5c4a52;border-radius:1px"></div>
<svg class="ab" style="left:1254px;top:568px" width="6" height="24"><path d="M0 12 L1 3 L2.5 9 L3.5 1 L6 12 L3.5 23 L2.5 15 L1 21Z" fill="#e0c8d0"/></svg>
<div class="ab" style="left:732.3px;top:593px;width:73.2px;height:39px;overflow:hidden"><div class="ab" style="left:0;top:15px;width:100%;height:24px;background:#4b2b31;opacity:0.85"></div><div class="ab" style="left:0;top:0.5px;width:100%;height:14.5px;background:#6c566c;border-radius:3px;box-shadow:inset 0 0 0 1px rgba(255,255,255,0.1)"></div></div>
<svg class="ab" style="left:732.3px;top:608px" width="73.2" height="24"><path d="M0.0 4.3 L1.0 3.8 L2.0 4.3 L3.0 4.4 L4.0 5.3 L5.0 3.7 L6.0 5.7 L7.0 4.9 L8.0 4.0 L9.0 4.0 L10.0 5.7 L11.0 4.3 L12.0 4.3 L13.0 5.4 L14.0 4.8 L15.0 5.9 L16.0 3.6 L17.0 5.8 L18.0 4.2 L19.1 3.9 L20.1 3.9 L21.1 5.0 L22.1 5.1 L23.1 4.9 L24.1 4.8 L25.1 4.4 L26.1 4.3 L27.1 4.8 L28.1 3.7 L29.1 4.7 L30.1 4.9 L31.1 4.8 L32.1 5.2 L33.1 4.7 L34.1 5.7 L35.1 4.1 L36.1 5.1 L37.1 4.8 L38.1 5.3 L39.1 3.8 L40.1 5.3 L41.1 5.6 L42.1 4.7 L43.1 5.1 L44.1 5.0 L45.1 4.3 L46.1 4.7 L47.1 5.6 L48.1 5.7 L49.1 3.9 L50.1 4.7 L51.1 4.8 L52.1 4.0 L53.1 4.6 L54.1 4.4 L55.2 5.5 L56.2 4.8 L57.2 4.2 L58.2 3.9 L59.2 5.6 L60.2 5.3 L61.2 5.8 L62.2 4.1 L63.2 5.1 L64.2 3.6 L65.2 4.6 L66.2 4.9 L67.2 3.9 L68.2 5.3 L69.2 7.2 L70.2 8.8 L71.2 10.3 L72.2 11.5 L73.2 12.5 L73.2 13.5 L72.2 14.5 L71.2 15.7 L70.2 17.2 L69.2 18.8 L68.2 20.7 L67.2 22.1 L66.2 21.1 L65.2 21.4 L64.2 22.4 L63.2 20.9 L62.2 21.9 L61.2 20.2 L60.2 20.7 L59.2 20.4 L58.2 22.1 L57.2 21.8 L56.2 21.2 L55.2 20.5 L54.1 21.6 L53.1 21.4 L52.1 22.0 L51.1 21.2 L50.1 21.3 L49.1 22.1 L48.1 20.3 L47.1 20.4 L46.1 21.3 L45.1 21.7 L44.1 21.0 L43.1 20.9 L42.1 21.3 L41.1 20.4 L40.1 20.7 L39.1 22.2 L38.1 20.7 L37.1 21.2 L36.1 20.9 L35.1 21.9 L34.1 20.3 L33.1 21.3 L32.1 20.8 L31.1 21.2 L30.1 21.1 L29.1 21.3 L28.1 22.3 L27.1 21.2 L26.1 21.7 L25.1 21.6 L24.1 21.2 L23.1 21.1 L22.1 20.9 L21.1 21.0 L20.1 22.1 L19.1 22.1 L18.0 21.8 L17.0 20.2 L16.0 22.4 L15.0 20.1 L14.0 21.2 L13.0 20.6 L12.0 21.7 L11.0 21.7 L10.0 20.3 L9.0 22.0 L8.0 22.0 L7.0 21.1 L6.0 20.3 L5.0 22.3 L4.0 20.7 L3.0 21.6 L2.0 21.7 L1.0 22.2 L0.0 21.7Z" fill="#c8b0c2"/></svg>
<svg class="ab" style="left:735.3px;top:596px" width="12" height="10"><rect x="0.5" y="1" width="1" height="8" fill="#8a8cc0"/><path d="M1.5 1 L4.2 4 L5.8 2 L7 4.2 L10.5 5 L7 5.8 L5.8 8 L4.2 6 L1.5 9Z" fill="#f0ecd8"/></svg>
<div class="tx" style="left:747.3px;top:594px;font-size:12px;color:#e6e0ea;transform:scaleX(0.86);transform-origin:0 0;letter-spacing:0.6px">VUF2 1..Bars</div>
<div class="ab" style="left:864.3px;top:593px;width:73.6px;height:39px;overflow:hidden"><div class="ab" style="left:0;top:15px;width:100%;height:24px;background:#4b2b31;opacity:0.85"></div><div class="ab" style="left:0;top:0.5px;width:100%;height:14.5px;background:#6c566c;border-radius:3px;box-shadow:inset 0 0 0 1px rgba(255,255,255,0.1)"></div></div>
<svg class="ab" style="left:864.3px;top:608px" width="73.6" height="24"><path d="M0.0 5.1 L1.0 4.7 L2.0 5.0 L3.0 5.4 L4.0 4.1 L5.0 5.7 L6.0 5.6 L7.1 4.4 L8.1 3.8 L9.1 5.2 L10.1 4.5 L11.1 5.7 L12.1 3.9 L13.1 5.4 L14.1 3.7 L15.1 4.6 L16.1 5.4 L17.1 5.6 L18.1 5.3 L19.2 3.9 L20.2 5.2 L21.2 3.9 L22.2 5.2 L23.2 4.7 L24.2 4.5 L25.2 3.8 L26.2 5.3 L27.2 3.7 L28.2 4.3 L29.2 5.6 L30.2 5.5 L31.3 5.0 L32.3 4.9 L33.3 5.7 L34.3 4.3 L35.3 4.8 L36.3 5.5 L37.3 5.6 L38.3 4.8 L39.3 3.9 L40.3 3.9 L41.3 4.9 L42.3 4.5 L43.4 5.7 L44.4 5.3 L45.4 3.9 L46.4 4.7 L47.4 4.7 L48.4 5.6 L49.4 4.1 L50.4 4.5 L51.4 5.2 L52.4 4.4 L53.4 5.8 L54.4 4.9 L55.5 5.8 L56.5 3.7 L57.5 5.6 L58.5 4.0 L59.5 5.5 L60.5 4.6 L61.5 3.7 L62.5 5.4 L63.5 4.9 L64.5 3.9 L65.5 3.7 L66.5 4.5 L67.6 3.8 L68.6 6.5 L69.6 7.6 L70.6 8.5 L71.6 10.3 L72.6 11.6 L73.6 12.6 L73.6 13.4 L72.6 14.4 L71.6 15.7 L70.6 17.5 L69.6 18.4 L68.6 19.5 L67.6 22.2 L66.5 21.5 L65.5 22.3 L64.5 22.1 L63.5 21.1 L62.5 20.6 L61.5 22.3 L60.5 21.4 L59.5 20.5 L58.5 22.0 L57.5 20.4 L56.5 22.3 L55.5 20.2 L54.4 21.1 L53.4 20.2 L52.4 21.6 L51.4 20.8 L50.4 21.5 L49.4 21.9 L48.4 20.4 L47.4 21.3 L46.4 21.3 L45.4 22.1 L44.4 20.7 L43.4 20.3 L42.3 21.5 L41.3 21.1 L40.3 22.1 L39.3 22.1 L38.3 21.2 L37.3 20.4 L36.3 20.5 L35.3 21.2 L34.3 21.7 L33.3 20.3 L32.3 21.1 L31.3 21.0 L30.2 20.5 L29.2 20.4 L28.2 21.7 L27.2 22.3 L26.2 20.7 L25.2 22.2 L24.2 21.5 L23.2 21.3 L22.2 20.8 L21.2 22.1 L20.2 20.8 L19.2 22.1 L18.1 20.7 L17.1 20.4 L16.1 20.6 L15.1 21.4 L14.1 22.3 L13.1 20.6 L12.1 22.1 L11.1 20.3 L10.1 21.5 L9.1 20.8 L8.1 22.2 L7.1 21.6 L6.0 20.4 L5.0 20.3 L4.0 21.9 L3.0 20.6 L2.0 21.0 L1.0 21.3 L0.0 20.9Z" fill="#c8b0c2"/></svg>
<svg class="ab" style="left:867.3px;top:596px" width="12" height="10"><rect x="0.5" y="1" width="1" height="8" fill="#8a8cc0"/><path d="M1.5 1 L4.2 4 L5.8 2 L7 4.2 L10.5 5 L7 5.8 L5.8 8 L4.2 6 L1.5 9Z" fill="#f0ecd8"/></svg>
<div class="tx" style="left:879.3px;top:594px;font-size:12px;color:#e6e0ea;transform:scaleX(0.86);transform-origin:0 0;letter-spacing:0.6px">VUF2 1..Bars</div>
<div class="ab" style="left:1161.3px;top:633px;width:73.6px;height:39px;overflow:hidden"><div class="ab" style="left:0;top:15px;width:100%;height:24px;background:#4b2b31;opacity:0.85"></div><div class="ab" style="left:0;top:0.5px;width:100%;height:14.5px;background:#6c566c;border-radius:3px;box-shadow:inset 0 0 0 1px rgba(255,255,255,0.1)"></div></div>
<svg class="ab" style="left:1161.3px;top:648px" width="73.6" height="24"><path d="M0.0 3.6 L1.0 4.6 L2.0 4.5 L3.0 3.6 L4.0 5.5 L5.0 5.5 L6.0 5.0 L7.1 4.6 L8.1 4.8 L9.1 4.5 L10.1 4.6 L11.1 4.1 L12.1 5.2 L13.1 4.1 L14.1 4.3 L15.1 4.8 L16.1 4.5 L17.1 5.5 L18.1 5.0 L19.2 4.9 L20.2 4.6 L21.2 5.5 L22.2 5.0 L23.2 4.4 L24.2 4.2 L25.2 5.5 L26.2 3.8 L27.2 4.4 L28.2 3.8 L29.2 5.3 L30.2 3.7 L31.3 4.2 L32.3 4.2 L33.3 5.6 L34.3 4.0 L35.3 5.6 L36.3 4.9 L37.3 5.0 L38.3 5.5 L39.3 5.2 L40.3 5.7 L41.3 5.6 L42.3 3.9 L43.4 4.0 L44.4 5.7 L45.4 4.8 L46.4 4.2 L47.4 5.2 L48.4 3.8 L49.4 4.0 L50.4 4.8 L51.4 4.4 L52.4 5.5 L53.4 4.4 L54.4 4.7 L55.5 5.0 L56.5 5.7 L57.5 4.7 L58.5 5.5 L59.5 5.5 L60.5 3.9 L61.5 4.5 L62.5 4.1 L63.5 5.7 L64.5 5.1 L65.5 4.1 L66.5 5.6 L67.6 4.1 L68.6 6.5 L69.6 6.8 L70.6 8.2 L71.6 10.2 L72.6 11.5 L73.6 12.5 L73.6 13.5 L72.6 14.5 L71.6 15.8 L70.6 17.8 L69.6 19.2 L68.6 19.5 L67.6 21.9 L66.5 20.4 L65.5 21.9 L64.5 20.9 L63.5 20.3 L62.5 21.9 L61.5 21.5 L60.5 22.1 L59.5 20.5 L58.5 20.5 L57.5 21.3 L56.5 20.3 L55.5 21.0 L54.4 21.3 L53.4 21.6 L52.4 20.5 L51.4 21.6 L50.4 21.2 L49.4 22.0 L48.4 22.2 L47.4 20.8 L46.4 21.8 L45.4 21.2 L44.4 20.3 L43.4 22.0 L42.3 22.1 L41.3 20.4 L40.3 20.3 L39.3 20.8 L38.3 20.5 L37.3 21.0 L36.3 21.1 L35.3 20.4 L34.3 22.0 L33.3 20.4 L32.3 21.8 L31.3 21.8 L30.2 22.3 L29.2 20.7 L28.2 22.2 L27.2 21.6 L26.2 22.2 L25.2 20.5 L24.2 21.8 L23.2 21.6 L22.2 21.0 L21.2 20.5 L20.2 21.4 L19.2 21.1 L18.1 21.0 L17.1 20.5 L16.1 21.5 L15.1 21.2 L14.1 21.7 L13.1 21.9 L12.1 20.8 L11.1 21.9 L10.1 21.4 L9.1 21.5 L8.1 21.2 L7.1 21.4 L6.0 21.0 L5.0 20.5 L4.0 20.5 L3.0 22.4 L2.0 21.5 L1.0 21.4 L0.0 22.4Z" fill="#c8b0c2"/></svg>
<svg class="ab" style="left:1164.3px;top:636px" width="12" height="10"><rect x="0.5" y="1" width="1" height="8" fill="#8a8cc0"/><path d="M1.5 1 L4.2 4 L5.8 2 L7 4.2 L10.5 5 L7 5.8 L5.8 8 L4.2 6 L1.5 9Z" fill="#f0ecd8"/></svg>
<div class="tx" style="left:1176.3px;top:634px;font-size:12px;color:#e6e0ea;transform:scaleX(0.86);transform-origin:0 0;letter-spacing:0.6px">VUF2 1..Bars</div>
<div class="ab" style="left:629px;top:713px;width:634px;height:8px;background:#555f88;border-radius:2px 2px 0 0;overflow:hidden"><div class="tx" style="left:4px;top:1px;font-size:12px;color:#e0e4f0">&#x260D; Param. EQ 2 - Mix level</div></div>
<div class="ab" style="left:781.5px;top:153px;width:1.2px;height:560px;background:#e8a8a8;opacity:0.75"></div>
<div class="ab" style="left:629px;top:113px;width:19px;height:19px;background:#3a3a3a"></div>
<svg class="ab" style="left:634px;top:117px" width="9" height="12"><path d="M7 1 L2 6 L7 11" fill="none" stroke="#9a9a9a" stroke-width="1.3"/></svg>
<div class="ab" style="left:649px;top:113px;width:669px;height:19px;background:#2e2b30;box-shadow:inset 0 0 0 1px #1a6a78"></div>
<div class="ab" style="left:650px;top:114px;width:667px;height:17px;overflow:hidden">
<div class="ab" style="left:78.4px;top:1.0px;width:128.6px;height:1.3px;background:#7c627c"></div>
<div class="ab" style="left:213.5px;top:1.0px;width:61.0px;height:1.3px;background:#525d67"></div>
<div class="ab" style="left:275.5px;top:1.0px;width:232.2px;height:1.3px;background:#7c627c"></div>
<div class="ab" style="left:-2.8px;top:2.1px;width:14.6px;height:1.3px;background:#677e65"></div>
<div class="ab" style="left:30.0px;top:2.1px;width:14.8px;height:1.3px;background:#677e65"></div>
<div class="ab" style="left:275.5px;top:2.1px;width:232.2px;height:1.3px;background:#59649b"></div>
<div class="ab" style="left:511.5px;top:2.1px;width:60.5px;height:1.3px;background:#525d67"></div>
<div class="ab" style="left:-21.0px;top:3.2px;width:1.5px;height:1.3px;background:#677e65"></div>
<div class="ab" style="left:57.2px;top:3.2px;width:27.6px;height:1.3px;background:#677e65"></div>
<div class="ab" style="left:100.2px;top:3.2px;width:14.5px;height:1.3px;background:#677e65"></div>
<div class="ab" style="left:133.1px;top:3.2px;width:14.5px;height:1.3px;background:#677e65"></div>
<div class="ab" style="left:166.0px;top:3.2px;width:14.5px;height:1.3px;background:#677e65"></div>
<div class="ab" style="left:232.0px;top:3.2px;width:14.5px;height:1.3px;background:#677e65"></div>
<div class="ab" style="left:297.9px;top:3.2px;width:14.5px;height:1.3px;background:#677e65"></div>
<div class="ab" style="left:331.3px;top:3.2px;width:14.5px;height:1.3px;background:#677e65"></div>
<div class="ab" style="left:364.3px;top:3.2px;width:14.5px;height:1.3px;background:#677e65"></div>
<div class="ab" style="left:397.2px;top:3.2px;width:14.5px;height:1.3px;background:#677e65"></div>
<div class="ab" style="left:430.1px;top:3.2px;width:14.5px;height:1.3px;background:#677e65"></div>
<div class="ab" style="left:463.0px;top:3.2px;width:14.5px;height:1.3px;background:#677e65"></div>
<div class="ab" style="left:496.0px;top:3.2px;width:14.5px;height:1.3px;background:#677e65"></div>
<div class="ab" style="left:-20.1px;top:4.3px;width:15.1px;height:1.3px;background:#525d67"></div>
<div class="ab" style="left:-3.6px;top:4.3px;width:15.1px;height:1.3px;background:#525d67"></div>
<div class="ab" style="left:12.9px;top:4.3px;width:15.1px;height:1.3px;background:#525d67"></div>
<div class="ab" style="left:29.4px;top:4.3px;width:15.1px;height:1.3px;background:#525d67"></div>
<div class="ab" style="left:82.5px;top:4.3px;width:63.3px;height:1.3px;background:#525d67"></div>
<div class="ab" style="left:146.8px;top:4.3px;width:61.8px;height:1.3px;background:#525d67"></div>
<div class="ab" style="left:280.7px;top:4.3px;width:93.1px;height:1.3px;background:#525d67"></div>
<div class="ab" style="left:379.6px;top:4.3px;width:30.9px;height:1.3px;background:#525d67"></div>
<div class="ab" style="left:412.0px;top:4.3px;width:31.0px;height:1.3px;background:#525d67"></div>
<div class="ab" style="left:444.5px;top:4.3px;width:31.5px;height:1.3px;background:#525d67"></div>
<div class="ab" style="left:477.5px;top:4.3px;width:32.5px;height:1.3px;background:#525d67"></div>
<div class="ab" style="left:577.0px;top:4.3px;width:15.5px;height:1.3px;background:#525d67"></div>
<div class="ab" style="left:593.8px;top:4.3px;width:15.7px;height:1.3px;background:#525d67"></div>
<div class="ab" style="left:-20.1px;top:5.4px;width:65.0px;height:1.3px;background:#8c9077"></div>
<div class="ab" style="left:81.7px;top:5.4px;width:28.6px;height:1.3px;background:#8c9077"></div>
<div class="ab" style="left:114.7px;top:5.4px;width:28.0px;height:1.3px;background:#8c9077"></div>
<div class="ab" style="left:147.6px;top:5.4px;width:61.5px;height:1.3px;background:#8c9077"></div>
<div class="ab" style="left:214.0px;top:5.4px;width:61.0px;height:1.3px;background:#8c9077"></div>
<div class="ab" style="left:280.0px;top:5.4px;width:28.2px;height:1.3px;background:#8c9077"></div>
<div class="ab" style="left:313.2px;top:5.4px;width:60.6px;height:1.3px;background:#8c9077"></div>
<div class="ab" style="left:378.8px;top:5.4px;width:127.2px;height:1.3px;background:#8c9077"></div>
<div class="ab" style="left:511.0px;top:5.4px;width:61.0px;height:1.3px;background:#8c9077"></div>
<div class="ab" style="left:577.0px;top:5.4px;width:28.2px;height:1.3px;background:#8c9077"></div>
<div class="ab" style="left:-20.1px;top:6.5px;width:15.0px;height:1.3px;background:#59649b"></div>
<div class="ab" style="left:12.5px;top:6.5px;width:1.8px;height:1.3px;background:#677e65"></div>
<div class="ab" style="left:82.3px;top:6.5px;width:1.8px;height:1.3px;background:#677e65"></div>
<div class="ab" style="left:115.3px;top:6.5px;width:1.8px;height:1.3px;background:#677e65"></div>
<div class="ab" style="left:181.2px;top:6.5px;width:1.8px;height:1.3px;background:#677e65"></div>
<div class="ab" style="left:346.3px;top:6.5px;width:1.8px;height:1.3px;background:#677e65"></div>
<div class="ab" style="left:379.3px;top:6.5px;width:1.8px;height:1.3px;background:#677e65"></div>
<div class="ab" style="left:412.5px;top:6.5px;width:1.8px;height:1.3px;background:#677e65"></div>
<div class="ab" style="left:445.5px;top:6.5px;width:1.8px;height:1.3px;background:#677e65"></div>
<div class="ab" style="left:478.6px;top:6.5px;width:1.8px;height:1.3px;background:#677e65"></div>
<div class="ab" style="left:145.6px;top:6.5px;width:4.0px;height:1.3px;background:#56616f"></div>
<div class="ab" style="left:308.6px;top:6.5px;width:4.0px;height:1.3px;background:#56616f"></div>
<div class="ab" style="left:29.8px;top:6.5px;width:14.7px;height:1.3px;background:#796770"></div>
<div class="ab" style="left:45.5px;top:6.5px;width:15.5px;height:1.3px;background:#677e65"></div>
<div class="ab" style="left:62.0px;top:6.5px;width:15.4px;height:1.3px;background:#677e65"></div>
<div class="ab" style="left:214.0px;top:6.5px;width:67.0px;height:1.3px;background:#56616f"></div>
<div class="ab" style="left:529.5px;top:6.5px;width:14.7px;height:1.3px;background:#677e65"></div>
<div class="ab" style="left:562.4px;top:6.5px;width:14.7px;height:1.3px;background:#677e65"></div>
<div class="ab" style="left:595.3px;top:6.5px;width:14.7px;height:1.3px;background:#677e65"></div>
<div class="ab" style="left:-20.1px;top:7.6px;width:15.1px;height:1.3px;background:#56616f"></div>
<div class="ab" style="left:44.0px;top:7.6px;width:1.5px;height:1.3px;background:#506e79"></div>
<div class="ab" style="left:199.0px;top:7.6px;width:14.3px;height:1.3px;background:#677e65"></div>
<div class="ab" style="left:276.0px;top:7.6px;width:2.0px;height:1.3px;background:#506e79"></div>
<div class="ab" style="left:508.5px;top:7.6px;width:3.0px;height:1.3px;background:#506e79"></div>
<div class="ab" style="left:78.0px;top:8.7px;width:9.0px;height:1.3px;background:#506e79"></div>
<div class="ab" style="left:214.0px;top:8.7px;width:65.0px;height:1.3px;background:#59649b"></div>
<div class="ab" style="left:511.5px;top:8.7px;width:1.8px;height:1.3px;background:#677e65"></div>
<div class="ab" style="left:544.5px;top:8.7px;width:1.8px;height:1.3px;background:#677e65"></div>
<div class="ab" style="left:577.5px;top:8.7px;width:1.8px;height:1.3px;background:#677e65"></div>
<div class="ab" style="left:610.6px;top:8.7px;width:4.5px;height:1.3px;background:#677e65"></div>
<div class="ab" style="left:44.8px;top:9.8px;width:10.9px;height:1.3px;background:#506e79"></div>
<div class="ab" style="left:378.8px;top:9.8px;width:5.0px;height:1.3px;background:#677e65"></div>
<div class="ab" style="left:610.0px;top:9.8px;width:12.0px;height:1.3px;background:#506e79"></div>
<div class="ab" style="left:44.8px;top:10.9px;width:32.0px;height:1.3px;background:#525d67"></div>
<div class="ab" style="left:257.0px;top:10.9px;width:24.0px;height:1.3px;background:#796770"></div>
<div class="ab" style="left:511.3px;top:10.9px;width:15.2px;height:1.3px;background:#677e65"></div>
<div class="ab" style="left:527.6px;top:10.9px;width:15.2px;height:1.3px;background:#677e65"></div>
<div class="ab" style="left:543.9px;top:10.9px;width:15.2px;height:1.3px;background:#677e65"></div>
<div class="ab" style="left:560.2px;top:10.9px;width:15.2px;height:1.3px;background:#677e65"></div>
<div class="ab" style="left:610.0px;top:10.9px;width:12.0px;height:1.3px;background:#59649b"></div>
<div class="ab" style="left:44.8px;top:12.0px;width:32.0px;height:1.3px;background:#796770"></div>
<div class="ab" style="left:82.3px;top:13.1px;width:72.2px;height:1.3px;background:#7c627c"></div>
<div class="ab" style="left:214.3px;top:13.1px;width:72.6px;height:1.3px;background:#7c627c"></div>
<div class="ab" style="left:511.3px;top:14.2px;width:72.6px;height:1.3px;background:#7c627c"></div>
<div class="ab" style="left:0;top:15.5px;width:615px;height:1.2px;background:#6870a8"></div>
</div>
<div class="ab" style="left:1319px;top:113px;width:19px;height:19px;background:#3a3a3a"></div>
<svg class="ab" style="left:1324px;top:117px" width="9" height="12"><path d="M2 1 L7 6 L2 11" fill="none" stroke="#9a9a9a" stroke-width="1.3"/></svg>
<div class="ab" style="left:1340px;top:113px;width:19px;height:19px;background:#3c3c3c"></div><div class="ab" style="left:1348px;top:121px;width:3px;height:3px;background:#000"></div>
<div class="ab" style="left:629px;top:133px;width:710px;height:20px;background:linear-gradient(#1e2c2c,#121a1a)"></div>
<div class="ab" style="left:1273px;top:133px;width:66px;height:20px;background:linear-gradient(#162020,#101616)"></div>
<div class="ab" style="left:629px;top:133px;width:644px;height:2px;background:#177a80"></div>
<div class="ab" style="left:629px;top:150px;width:644px;height:2px;background:#177a80"></div>
<div class="tx" style="left:630.4px;top:138px;font-size:13px;font-weight:bold;color:#12c4c8;transform:scaleX(0.76);transform-origin:0 0">1</div>
<div class="tx" style="left:663.4px;top:138px;font-size:13px;font-weight:bold;color:#12c4c8;transform:scaleX(0.76);transform-origin:0 0">9</div>
<div class="tx" style="left:696.4px;top:138px;font-size:13px;font-weight:bold;color:#12c4c8;transform:scaleX(0.76);transform-origin:0 0">17</div>
<div class="tx" style="left:729.4px;top:138px;font-size:13px;font-weight:bold;color:#12c4c8;transform:scaleX(0.76);transform-origin:0 0">25</div>
<div class="tx" style="left:762.4px;top:138px;font-size:13px;font-weight:bold;color:#12c4c8;transform:scaleX(0.76);transform-origin:0 0">33</div>
<div class="tx" style="left:795.4px;top:138px;font-size:13px;font-weight:bold;color:#12c4c8;transform:scaleX(0.76);transform-origin:0 0">41</div>
<div class="tx" style="left:828.4px;top:138px;font-size:13px;font-weight:bold;color:#12c4c8;transform:scaleX(0.76);transform-origin:0 0">49</div>
<div class="tx" style="left:861.4px;top:138px;font-size:13px;font-weight:bold;color:#12c4c8;transform:scaleX(0.76);transform-origin:0 0">57</div>
<div class="tx" style="left:894.4px;top:138px;font-size:13px;font-weight:bold;color:#12c4c8;transform:scaleX(0.76);transform-origin:0 0">65</div>
<div class="tx" style="left:927.4px;top:138px;font-size:13px;font-weight:bold;color:#12c4c8;transform:scaleX(0.76);transform-origin:0 0">73</div>
<div class="tx" style="left:960.4px;top:138px;font-size:13px;font-weight:bold;color:#12c4c8;transform:scaleX(0.76);transform-origin:0 0">81</div>
<div class="tx" style="left:993.4px;top:138px;font-size:13px;font-weight:bold;color:#12c4c8;transform:scaleX(0.76);transform-origin:0 0">89</div>
<div class="tx" style="left:1026.4px;top:138px;font-size:13px;font-weight:bold;color:#12c4c8;transform:scaleX(0.76);transform-origin:0 0">97</div>
<div class="tx" style="left:1059.4px;top:138px;font-size:13px;font-weight:bold;color:#12c4c8;transform:scaleX(0.76);transform-origin:0 0">105</div>
<div class="tx" style="left:1092.4px;top:138px;font-size:13px;font-weight:bold;color:#12c4c8;transform:scaleX(0.76);transform-origin:0 0">113</div>
<div class="tx" style="left:1125.4px;top:138px;font-size:13px;font-weight:bold;color:#12c4c8;transform:scaleX(0.76);transform-origin:0 0">121</div>
<div class="tx" style="left:1158.4px;top:138px;font-size:13px;font-weight:bold;color:#12c4c8;transform:scaleX(0.76);transform-origin:0 0">129</div>
<div class="tx" style="left:1191.4px;top:138px;font-size:13px;font-weight:bold;color:#12c4c8;transform:scaleX(0.76);transform-origin:0 0">137</div>
<div class="tx" style="left:1224.4px;top:138px;font-size:13px;font-weight:bold;color:#12c4c8;transform:scaleX(0.76);transform-origin:0 0">145</div>
<div class="tx" style="left:1257.4px;top:138px;font-size:13px;font-weight:bold;color:#12c4c8;transform:scaleX(0.76);transform-origin:0 0">153</div>
<div class="tx" style="left:1290.4px;top:138px;font-size:13px;font-weight:bold;color:#0ea0a6;transform:scaleX(0.76);transform-origin:0 0">161</div>
<div class="tx" style="left:1323.4px;top:138px;font-size:13px;font-weight:bold;color:#0ea0a6;transform:scaleX(0.76);transform-origin:0 0">169</div>
<svg class="ab" style="left:775px;top:133px" width="15" height="12"><path d="M0.5 1 H14 L7.3 11Z" fill="#e8eaec" stroke="#999" stroke-width="0.6"/></svg>
<div class="ab" style="left:1340px;top:133px;width:19px;height:19px;background:#3c3c3c"></div>
<svg class="ab" style="left:1343px;top:137px" width="13" height="10"><path d="M1 8 L6.5 2.5 L12 8" fill="none" stroke="#999" stroke-width="1.3"/></svg>
<div class="ab" style="left:1339px;top:153px;width:21px;height:568px;background:#262626"></div>
<div class="ab" style="left:1340px;top:153px;width:19px;height:32px;background:#3c3c3c"></div>
<div class="ab" style="left:1340px;top:700px;width:19px;height:19px;background:#3c3c3c"></div>
<svg class="ab" style="left:1343px;top:705px" width="13" height="10"><path d="M1 2 L6.5 7.5 L12 2" fill="none" stroke="#999" stroke-width="1.3"/></svg>
<div class="ab" style="left:1348px;top:500px;width:48px;height:48px;border-radius:50%;background:radial-gradient(circle at 40% 35%,#7af08a,#20b040 60%,#158a30);box-shadow:0 0 0 2px #e8f0e8"></div>
<div class="tx" style="left:1352px;top:517px;font-size:12px;font-weight:bold;color:#fff">39</div>
<div class="ab" style="left:1308px;top:650px;width:56px;height:56px;border-radius:50%;background:radial-gradient(circle at 50% 40%,rgba(8,8,10,0.92),rgba(14,12,14,0.9) 75%,rgba(40,40,46,0.9));box-shadow:0 0 0 1.5px rgba(40,40,44,0.8)"></div>
<div class="ab" style="left:1312px;top:680px;width:44px;height:1.5px;background:repeating-linear-gradient(90deg,#18a0e0 0 6px,transparent 6px 9px)"></div>
<div class="ab" style="left:1318px;top:691px;width:34px;height:1.5px;background:repeating-linear-gradient(90deg,#f0f0f0 0 6px,transparent 6px 7px,#f0f0f0 7px 13px,transparent 13px 21px,#f0f0f0 21px 27px,transparent 27px 28px,#f0f0f0 28px 34px)"></div>
<div class="ab" style="left:1334px;top:687px;width:2px;height:2px;background:#f0f0f0"></div><div class="ab" style="left:1334px;top:694px;width:2px;height:2px;background:#f0f0f0"></div>
<div class="ab" style="left:363px;top:382px;width:192px;height:101px;border-radius:5px;background:rgba(248,248,248,0.95);box-shadow:0 1px 3px rgba(0,0,0,0.3)"></div>
<div class="tx" style="left:405px;top:397px;font-size:11.8px;color:#1a1a1a">屏幕截图<span style='font-size:13px'> Ctrl + Alt + A</span></div>
<div class="tx" style="left:405px;top:426px;font-size:11.8px;color:#1a1a1a">屏幕识图<span style='font-size:13px'> Ctrl + Alt + O</span></div>
<div class="tx" style="left:405px;top:456.5px;font-size:11.8px;color:#1a1a1a">截图时隐藏当前窗口</div>
<svg class="ab" style="left:378px;top:454px" width="17" height="13"><path d="M1 6 L6 11 L15 2" fill="none" stroke="#333" stroke-width="1.2"/></svg>
</body></html>
